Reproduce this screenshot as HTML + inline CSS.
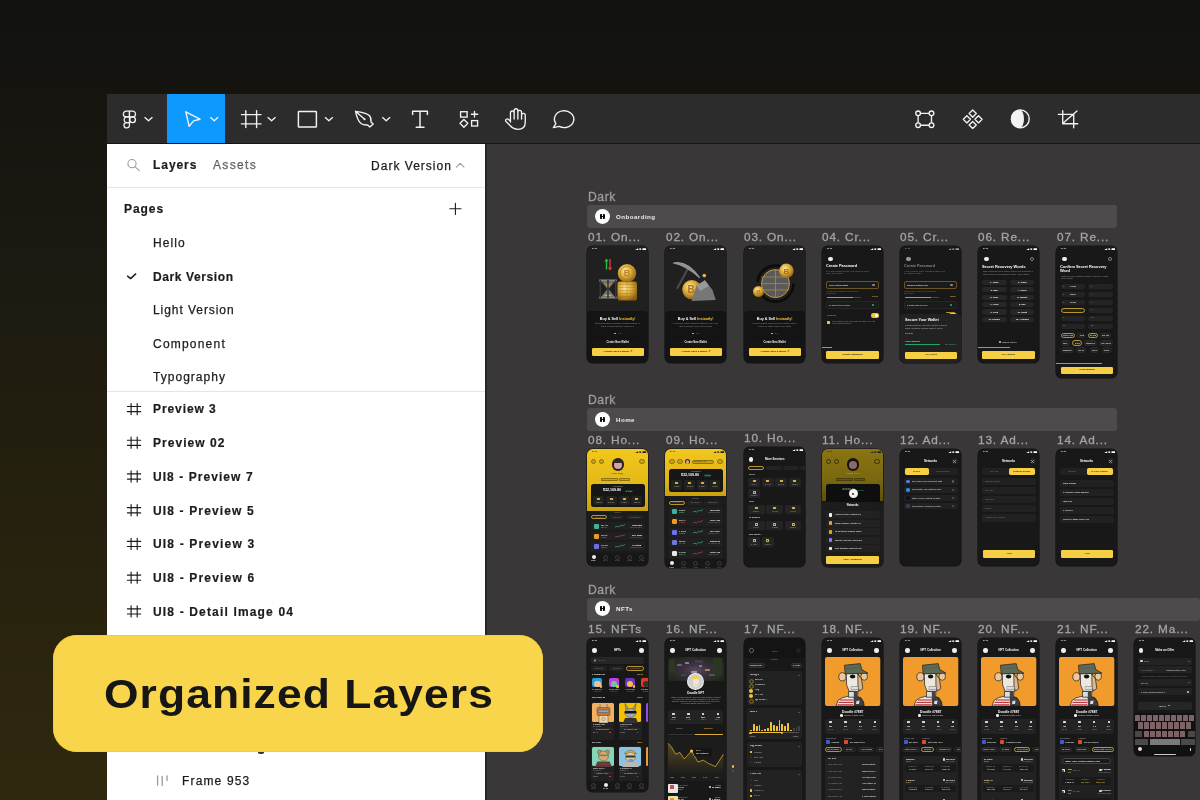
<!DOCTYPE html>
<html><head><meta charset="utf-8">
<style>
*{margin:0;padding:0;box-sizing:border-box}
html,body{width:1200px;height:800px;overflow:hidden}
body{position:relative;font-family:"Liberation Sans",sans-serif;background:linear-gradient(180deg,#121211 0px,#15140f 90px,#1b1911 250px,#221e0f 420px,#27220e 550px,#2c260f 700px,#2f2910 800px)}
.a{position:absolute}
.t{white-space:nowrap;will-change:transform}
.pt{will-change:transform;-webkit-text-stroke:.25px #1c1c1c;position:absolute;font-size:12px;color:#1c1c1c;letter-spacing:.55px;white-space:nowrap;line-height:14px}
.pb{font-weight:bold;letter-spacing:.45px;-webkit-text-stroke:.2px #1c1c1c}
.ph{position:absolute;overflow:hidden;border-radius:6px;background:#181818;box-shadow:0 0 0 .6px #121212;will-change:transform}
.ph .a{position:absolute}
svg{position:absolute;overflow:visible}
</style></head><body>
<div class="a" style="left:107px;top:94px;width:1093px;height:49px;background:#2c2c2c"></div>
<div class="a" style="left:167px;top:94px;width:58px;height:49px;background:#0e99ff"></div>
<div class="a" style="left:107px;top:144.3px;width:378px;height:657px;background:#fff"></div>
<div class="a" style="left:485px;top:144.3px;width:2px;height:657px;background:#262626"></div>
<div class="a" style="left:487px;top:144.3px;width:713px;height:657px;background:#3a3738"></div>
<div class="a" style="left:107px;top:143px;width:1093px;height:1.3px;background:#161616"></div>
<svg width="1200" height="800" style="left:0;top:0" viewBox="0 0 1200 800"><path d="M129.45 111.15 H126.25 A2.9 2.9 0 0 0 126.25 116.95 H129.45 Z" fill="none" stroke="#f2f2f2" stroke-width="1.25" stroke-linejoin="round" stroke-linecap="round" /><path d="M129.45 111.15 H132.65 A2.9 2.9 0 0 1 132.65 116.95 H129.45 Z" fill="none" stroke="#f2f2f2" stroke-width="1.25" stroke-linejoin="round" stroke-linecap="round" /><path d="M129.45 116.95 H126.25 A2.9 2.9 0 0 0 126.25 122.55 H129.45 Z" fill="none" stroke="#f2f2f2" stroke-width="1.25" stroke-linejoin="round" stroke-linecap="round" /><circle cx="132.55" cy="119.75" r="2.85" fill="none" stroke="#f2f2f2" stroke-width="1.4"/><path d="M129.45 122.55 H126.1 A2.75 2.75 0 1 0 129.45 125.3 Z" fill="none" stroke="#f2f2f2" stroke-width="1.25" stroke-linejoin="round" stroke-linecap="round" /><path d="M144.9 117.6 L148.5 120.8 L152.1 117.6" fill="none" stroke="#f2f2f2" stroke-width="1.35" stroke-linejoin="round" stroke-linecap="round" /><path d="M210.6 117.6 L214.2 120.8 L217.79999999999998 117.6" fill="none" stroke="#f2f2f2" stroke-width="1.35" stroke-linejoin="round" stroke-linecap="round" /><path d="M268.0 117.6 L271.6 120.8 L275.20000000000005 117.6" fill="none" stroke="#f2f2f2" stroke-width="1.35" stroke-linejoin="round" stroke-linecap="round" /><path d="M325.29999999999995 117.6 L328.9 120.8 L332.5 117.6" fill="none" stroke="#f2f2f2" stroke-width="1.35" stroke-linejoin="round" stroke-linecap="round" /><path d="M382.59999999999997 117.6 L386.2 120.8 L389.8 117.6" fill="none" stroke="#f2f2f2" stroke-width="1.35" stroke-linejoin="round" stroke-linecap="round" /><path d="M185.8 111.8 L200 119.2 L193.6 120.9 L189.1 126.2 Z" fill="none" stroke="#f2f2f2" stroke-width="1.4" stroke-linejoin="round" stroke-linecap="round" /><path d="M245.8 110.8 V127.6 M256.6 110.8 V127.6 M241.4 114.6 H261 M241.4 123.9 H261" fill="none" stroke="#f2f2f2" stroke-width="1.4" stroke-linejoin="round" stroke-linecap="round" stroke-linecap="butt"/><rect x="298.4" y="111.5" width="18" height="15.5" rx=".6" fill="none" stroke="#f2f2f2" stroke-width="1.45"/><path d="M355.5 111.3 C361 112 366.5 112.8 369.3 115.5 C371.2 117.5 371.2 120 371 122 L373.2 124 L369.8 127 L367.7 124.9 C365.5 125.2 363 124.8 361 123.5 C358.5 121.5 356.5 116 355.5 111.3 Z M355.7 111.5 L364.4 119.1" fill="none" stroke="#f2f2f2" stroke-width="1.35" stroke-linejoin="round" stroke-linecap="round" /><circle cx="364.6" cy="119.2" r="1.05" fill="#f2f2f2"/><path d="M412.6 114.6 V111.3 H427.4 V114.6 M420 111.3 V127.3 M416.2 127.3 H424" fill="none" stroke="#f2f2f2" stroke-width="1.45" stroke-linejoin="round" stroke-linecap="round" stroke-linecap="butt" stroke-linejoin="miter"/><rect x="460.6" y="111.7" width="6.5" height="5.4" fill="none" stroke="#f2f2f2" stroke-width="1.35"/><path d="M474.5 111.4 V117 M471.4 114.2 H477.7" fill="none" stroke="#f2f2f2" stroke-width="1.35" stroke-linejoin="round" stroke-linecap="round" stroke-linecap="butt"/><path d="M463.9 119.4 L467.8 123.3 L463.9 127.2 L460 123.3 Z" fill="none" stroke="#f2f2f2" stroke-width="1.35" stroke-linejoin="round" stroke-linecap="round" /><rect x="471.6" y="120.6" width="6" height="5.4" fill="none" stroke="#f2f2f2" stroke-width="1.35"/><path d="M510.45 122 V112.9 A1.85 1.85 0 0 1 514.15 112.9 V119 V110.6 A1.85 1.85 0 0 1 517.85 110.6 V119 V112.2 A1.85 1.85 0 0 1 521.55 112.2 V119 V115.2 A1.85 1.85 0 0 1 525.25 115.2 V122.5 C525.25 126.6 522.5 129.3 518 129.3 C514.5 129.3 512.3 128 510.3 125.8 L506 121.5 A1.6 1.6 0 0 1 508.3 119.3 L510.45 121.2" fill="none" stroke="#f2f2f2" stroke-width="1.35" stroke-linejoin="round" stroke-linecap="round" /><path d="M553.4 127.6 L555.9 123.6 A9.7 8.4 0 1 1 559.2 126.4 Z" fill="none" stroke="#f2f2f2" stroke-width="1.35" stroke-linejoin="round" stroke-linecap="round" /><path d="M918.1 113.3 H931.5 V125.2 H918.1 Z" fill="none" stroke="#f2f2f2" stroke-width="1.35" stroke-linejoin="round" stroke-linecap="round" /><circle cx="918.1" cy="113.3" r="2.35" fill="#2c2c2c" stroke="#f2f2f2" stroke-width="1.35"/><circle cx="931.5" cy="113.3" r="2.35" fill="#2c2c2c" stroke="#f2f2f2" stroke-width="1.35"/><circle cx="918.1" cy="125.2" r="2.35" fill="#2c2c2c" stroke="#f2f2f2" stroke-width="1.35"/><circle cx="931.5" cy="125.2" r="2.35" fill="#2c2c2c" stroke="#f2f2f2" stroke-width="1.35"/><path d="M972.7 110.0 L976.3000000000001 113.6 L972.7 117.19999999999999 L969.1 113.6 Z" fill="none" stroke="#f2f2f2" stroke-width="1.35" stroke-linejoin="round" stroke-linecap="round" /><path d="M972.7 121.4 L976.3000000000001 125 L972.7 128.6 L969.1 125 Z" fill="none" stroke="#f2f2f2" stroke-width="1.35" stroke-linejoin="round" stroke-linecap="round" /><path d="M966.9 115.7 L970.5 119.3 L966.9 122.89999999999999 L963.3 119.3 Z" fill="none" stroke="#f2f2f2" stroke-width="1.35" stroke-linejoin="round" stroke-linecap="round" /><path d="M978.5 115.7 L982.1 119.3 L978.5 122.89999999999999 L974.9 119.3 Z" fill="none" stroke="#f2f2f2" stroke-width="1.35" stroke-linejoin="round" stroke-linecap="round" /><circle cx="1020.3" cy="118.9" r="8.9" fill="none" stroke="#f2f2f2" stroke-width="1.4"/><path d="M1019.8 110 A8.9 8.9 0 0 0 1019.8 127.8 A4.2 8.9 0 0 0 1019.8 110 Z" fill="#f2f2f2"/><path d="M1062.7 110.7 V123.7 H1077.7 M1058.3 114.3 H1073.7 V127.7 M1063.8 122.6 L1077 111" fill="none" stroke="#f2f2f2" stroke-width="1.35" stroke-linejoin="round" stroke-linecap="round" stroke-linecap="butt"/><circle cx="132" cy="163.7" r="4.1" fill="none" stroke="#9a9a9a" stroke-width="1.05"/><path d="M135.1 166.8 L139.4 170.6" fill="none" stroke="#9a9a9a" stroke-width="1.05" stroke-linejoin="round" stroke-linecap="round" /><path d="M456.4 167.2 L460.2 163.4 L464 167.2" fill="none" stroke="#9a9a9a" stroke-width="1.05" stroke-linejoin="round" stroke-linecap="round" /><path d="M455.4 203.2 V214.4 M449.8 208.8 H461" fill="none" stroke="#1c1c1c" stroke-width="1.1" stroke-linejoin="round" stroke-linecap="round" stroke-linecap="butt"/><path d="M127.6 276.1 L130.6 278.6 L135.7 273.9" fill="none" stroke="#1c1c1c" stroke-width="1.45" stroke-linejoin="round" stroke-linecap="round" /><path d="M131.1 403.45 V414.65000000000003 M137.2 403.45 V414.65000000000003 M127.4 406.5 H140.7 M127.4 411.65000000000003 H140.7" fill="none" stroke="#1c1c1c" stroke-width="1.15" stroke-linejoin="round" stroke-linecap="round" stroke-linecap="butt"/><path d="M131.1 437.16999999999996 V448.37 M137.2 437.16999999999996 V448.37 M127.4 440.21999999999997 H140.7 M127.4 445.37 H140.7" fill="none" stroke="#1c1c1c" stroke-width="1.15" stroke-linejoin="round" stroke-linecap="round" stroke-linecap="butt"/><path d="M131.1 470.89 V482.09000000000003 M137.2 470.89 V482.09000000000003 M127.4 473.94 H140.7 M127.4 479.09000000000003 H140.7" fill="none" stroke="#1c1c1c" stroke-width="1.15" stroke-linejoin="round" stroke-linecap="round" stroke-linecap="butt"/><path d="M131.1 504.61 V515.8100000000001 M137.2 504.61 V515.8100000000001 M127.4 507.66 H140.7 M127.4 512.8100000000001 H140.7" fill="none" stroke="#1c1c1c" stroke-width="1.15" stroke-linejoin="round" stroke-linecap="round" stroke-linecap="butt"/><path d="M131.1 538.33 V549.5300000000001 M137.2 538.33 V549.5300000000001 M127.4 541.3800000000001 H140.7 M127.4 546.5300000000001 H140.7" fill="none" stroke="#1c1c1c" stroke-width="1.15" stroke-linejoin="round" stroke-linecap="round" stroke-linecap="butt"/><path d="M131.1 572.05 V583.25 M137.2 572.05 V583.25 M127.4 575.1 H140.7 M127.4 580.25 H140.7" fill="none" stroke="#1c1c1c" stroke-width="1.15" stroke-linejoin="round" stroke-linecap="round" stroke-linecap="butt"/><path d="M131.1 605.77 V616.97 M137.2 605.77 V616.97 M127.4 608.82 H140.7 M127.4 613.97 H140.7" fill="none" stroke="#1c1c1c" stroke-width="1.15" stroke-linejoin="round" stroke-linecap="round" stroke-linecap="butt"/><path d="M157.6 776 V785 M162.2 776.5 V785.5 M167 775.8 V780.5" fill="none" stroke="#9a9a9a" stroke-width="1.3" stroke-linejoin="round" stroke-linecap="round" stroke-linecap="butt"/></svg>
<div class="pt pb" style="left:152.7px;top:158px;letter-spacing:0.94px;color:#1c1c1c">Layers</div>
<div class="pt" style="left:213.4px;top:158px;letter-spacing:1.35px;color:#8a8a8a">Assets</div>
<div class="pt" style="left:371.45px;top:159px;letter-spacing:1.02px;color:#1c1c1c">Dark Version</div>
<div class="pt pb" style="left:124.2px;top:202px;letter-spacing:0.95px;color:#1c1c1c">Pages</div>
<div class="pt" style="left:153.05px;top:236px;letter-spacing:1.08px;color:#1c1c1c">Hello</div>
<div class="pt pb" style="left:153.05px;top:270px;letter-spacing:0.6px;color:#1c1c1c">Dark Version</div>
<div class="pt" style="left:153.05px;top:303px;letter-spacing:0.94px;color:#1c1c1c">Light Version</div>
<div class="pt" style="left:152.95px;top:337px;letter-spacing:1.21px;color:#1c1c1c">Component</div>
<div class="pt" style="left:153.2px;top:370px;letter-spacing:1.03px;color:#1c1c1c">Typography</div>
<div class="pt pb" style="left:153px;top:402px;letter-spacing:0.92px;color:#1c1c1c">Preview 3</div>
<div class="pt pb" style="left:153px;top:436px;letter-spacing:1.05px;color:#1c1c1c">Preview 02</div>
<div class="pt pb" style="left:153px;top:470px;letter-spacing:1.06px;color:#1c1c1c">UI8 - Preview 7</div>
<div class="pt pb" style="left:152.6px;top:504px;letter-spacing:1.14px;color:#1c1c1c">UI8 - Preview 5</div>
<div class="pt pb" style="left:152.6px;top:537px;letter-spacing:1.17px;color:#1c1c1c">UI8 - Preview 3</div>
<div class="pt pb" style="left:152.6px;top:571px;letter-spacing:1.17px;color:#1c1c1c">UI8 - Preview 6</div>
<div class="pt pb" style="left:152.6px;top:605px;letter-spacing:1.16px;color:#1c1c1c">UI8 - Detail Image 04</div>
<div class="pt" style="left:182px;top:774px;letter-spacing:1.15px;color:#1c1c1c">Frame 953</div>
<div class="a" style="left:107px;top:187px;width:378px;height:1px;background:#e5e5e5"></div>
<div class="a" style="left:107px;top:391px;width:378px;height:1px;background:#e5e5e5"></div>
<div class="a t" style="left:587.5px;top:191.27px;font-size:12.2px;color:#9c9c9c;line-height:1;letter-spacing:.55px;-webkit-text-stroke:.3px #9c9c9c">Dark</div>
<div class="a" style="left:587.3px;top:205.1px;width:530px;height:23.2px;background:#4e4b4c;border-radius:3px"></div>
<div class="a" style="left:595px;top:209px;width:14.8px;height:14.8px;background:#fff;border-radius:50%"></div>
<div class="a" style="left:599.8px;top:213.8px;width:5.2px;height:5.2px;background:#0e0e0e;border-radius:0.8px"></div>
<div class="a" style="left:602px;top:213.8px;width:0.8px;height:2px;background:#fff"></div>
<div class="a" style="left:602px;top:217px;width:0.8px;height:2px;background:#fff"></div>
<div class="a t" style="left:616.3px;top:213.75px;font-size:6.2px;color:#ececec;line-height:1;font-weight:700;letter-spacing:.45px">Onboarding</div>
<div class="a t" style="left:587.5px;top:394.17px;font-size:12.2px;color:#9c9c9c;line-height:1;letter-spacing:.55px;-webkit-text-stroke:.3px #9c9c9c">Dark</div>
<div class="a" style="left:587.3px;top:408px;width:530px;height:23.2px;background:#4e4b4c;border-radius:3px"></div>
<div class="a" style="left:595px;top:411.9px;width:14.8px;height:14.8px;background:#fff;border-radius:50%"></div>
<div class="a" style="left:599.8px;top:416.7px;width:5.2px;height:5.2px;background:#0e0e0e;border-radius:0.8px"></div>
<div class="a" style="left:602px;top:416.7px;width:0.8px;height:2px;background:#fff"></div>
<div class="a" style="left:602px;top:419.9px;width:0.8px;height:2px;background:#fff"></div>
<div class="a t" style="left:616.3px;top:416.65px;font-size:6.2px;color:#ececec;line-height:1;font-weight:700;letter-spacing:.45px">Home</div>
<div class="a t" style="left:587.5px;top:583.67px;font-size:12.2px;color:#9c9c9c;line-height:1;letter-spacing:.55px;-webkit-text-stroke:.3px #9c9c9c">Dark</div>
<div class="a" style="left:587.3px;top:597.5px;width:613px;height:23.2px;background:#4e4b4c;border-radius:3px"></div>
<div class="a" style="left:595px;top:601.4px;width:14.8px;height:14.8px;background:#fff;border-radius:50%"></div>
<div class="a" style="left:599.8px;top:606.2px;width:5.2px;height:5.2px;background:#0e0e0e;border-radius:0.8px"></div>
<div class="a" style="left:602px;top:606.2px;width:0.8px;height:2px;background:#fff"></div>
<div class="a" style="left:602px;top:609.4px;width:0.8px;height:2px;background:#fff"></div>
<div class="a t" style="left:616.3px;top:606.15px;font-size:6.2px;color:#ececec;line-height:1;font-weight:700;letter-spacing:.45px">NFTs</div>
<div class="a t" style="left:587.65px;top:231.91px;font-size:11.8px;color:#a4a4a4;line-height:1;letter-spacing:.85px;-webkit-text-stroke:.3px #a4a4a4">01. On...</div>
<div class="a t" style="left:665.8px;top:231.91px;font-size:11.8px;color:#a4a4a4;line-height:1;letter-spacing:.85px;-webkit-text-stroke:.3px #a4a4a4">02. On...</div>
<div class="a t" style="left:743.95px;top:231.91px;font-size:11.8px;color:#a4a4a4;line-height:1;letter-spacing:.85px;-webkit-text-stroke:.3px #a4a4a4">03. On...</div>
<div class="a t" style="left:822.1px;top:231.91px;font-size:11.8px;color:#a4a4a4;line-height:1;letter-spacing:.85px;-webkit-text-stroke:.3px #a4a4a4">04. Cr...</div>
<div class="a t" style="left:900.25px;top:231.91px;font-size:11.8px;color:#a4a4a4;line-height:1;letter-spacing:.85px;-webkit-text-stroke:.3px #a4a4a4">05. Cr...</div>
<div class="a t" style="left:978.4px;top:231.91px;font-size:11.8px;color:#a4a4a4;line-height:1;letter-spacing:.85px;-webkit-text-stroke:.3px #a4a4a4">06. Re...</div>
<div class="a t" style="left:1056.55px;top:231.91px;font-size:11.8px;color:#a4a4a4;line-height:1;letter-spacing:.85px;-webkit-text-stroke:.3px #a4a4a4">07. Re...</div>
<div class="ph" style="left:587.3px;top:246.2px;width:61.4px;height:117.2px;background:#202020">
<div class="a t" style="left:4.9px;top:1.9px;font-size:2.5px;color:#fff;line-height:1;font-weight:700">9:41</div>
<svg width="12" height="3" style="left:47.6px;top:1.6px" viewBox="0 0 12 3"><path d="M0.2 2.1 L3.2 0.3 L3.2 2.1 Z" fill="#fff"/><rect x="4.3" y="0.3" width="1.9" height="1.8" rx=".4" fill="#fff" opacity=".85"/><rect x="7.4" y="0.2" width="3.7" height="1.9" rx=".7" fill="#fff"/></svg>
<svg width="61.4" height="70" viewBox="0 0 61.4 70"><defs><radialGradient id="g1" cx="40%" cy="35%" r="70%"><stop offset="0" stop-color="#ffe8a0"/><stop offset=".45" stop-color="#e0ad3a"/><stop offset="1" stop-color="#8a5e12"/></radialGradient></defs><g><rect x="30.5" y="35.5" width="19.5" height="19" rx="2" fill="url(#g1)"/><g stroke="#9b7220" stroke-width=".45" opacity=".8"><line x1="30.5" y1="38.5" x2="50" y2="38.5"/><line x1="30.5" y1="41.5" x2="50" y2="41.5"/><line x1="30.5" y1="44.5" x2="50" y2="44.5"/><line x1="30.5" y1="47.5" x2="50" y2="47.5"/><line x1="30.5" y1="50.5" x2="50" y2="50.5"/><line x1="40" y1="35.5" x2="40" y2="54.5"/></g><circle cx="40" cy="27.3" r="9.2" fill="url(#g1)"/><circle cx="40" cy="27.3" r="6.8" fill="none" stroke="#a87a1e" stroke-width=".6"/><text x="40" y="30.5" font-size="9" font-weight="bold" fill="#b8862a" text-anchor="middle" font-family="Liberation Sans">B</text><path d="M14.5 35.6 L27.5 35.6 L21.6 43 L27.5 50.4 L14.5 50.4 L20.4 43 Z" fill="#b0b0b0" opacity=".6"/><path d="M16 50.3 Q21 46 26 50.3 Z" fill="#d8a53a"/><path d="M18 38 L24 38 L21 41.5 Z" fill="#c9963a" opacity=".9"/><rect x="12" y="33.6" width="18" height="2" rx=".6" fill="#8a8a8a"/><rect x="12" y="50.4" width="18" height="2" rx=".6" fill="#8a8a8a"/><rect x="12.6" y="34" width="1.4" height="18" fill="#3a3a3a"/><rect x="28" y="34" width="1.4" height="18" fill="#3a3a3a"/><rect x="20.4" y="34" width="1.2" height="18" fill="#1a1a1a"/><path d="M18.8 23.5 L18.8 15.5 L17.3 15.5 L19.5 12.5 L21.7 15.5 L20.2 15.5 L20.2 23.5 Z" fill="#27c14a"/><path d="M22.3 13 L22.3 21.5 L20.8 21.5 L23 24.8 L25.2 21.5 L23.7 21.5 L23.7 13 Z" fill="#e23a2a"/></g></svg>
<div class="a" style="left:0px;top:65.4px;width:61.4px;height:60px;background:#141414;border-radius:4px 4px 0 0"></div>
<div class="a t" style="left:0px;top:71.6px;font-size:3.7px;color:#fff;line-height:1;font-weight:700;width:61.4px;text-align:center">Buy &amp; Sell <span style="color:#f3c53a">Instantly!</span></div>
<div class="a t" style="left:8px;top:76.24px;width:45px;overflow:hidden;font-size:2.32px;line-height:1;color:#9a9a9a;font-weight:700;opacity:0.69">Ethereum Main Network Solana Wallet Addr</div>
<div class="a t" style="left:14px;top:78.64px;width:33px;overflow:hidden;font-size:2.32px;line-height:1;color:#9a9a9a;font-weight:700;opacity:0.69">work Solana Wallet Address Cop</div>
<div class="a" style="left:27px;top:86.5px;width:1.8px;height:1px;background:#f0c23a;border-radius:0.5px"></div>
<div class="a" style="left:30.5px;top:86.5px;width:1px;height:1px;background:#555;border-radius:50%"></div>
<div class="a" style="left:32.5px;top:86.5px;width:1px;height:1px;background:#555;border-radius:50%"></div>
<div class="a" style="left:6px;top:94.5px;width:49px;height:5.5px;background:#161616;border-radius:1px"></div>
<div class="a t" style="left:0px;top:95.9px;font-size:2.6px;color:#eee;line-height:1;font-weight:700;width:61.4px;text-align:center">Create New Wallet</div>
<div class="a" style="left:4.6px;top:101.8px;width:52px;height:8.7px;background:#f6cf45;border-radius:1.3px"></div>
<div class="a t" style="left:4.6px;top:104.9px;font-size:2.5px;color:#222;line-height:1;font-weight:700;width:52px;text-align:center">Already Have a Wallet &#8599;</div>
</div>
<div class="ph" style="left:665.45px;top:246.2px;width:61.4px;height:117.2px;background:#202020">
<div class="a t" style="left:4.9px;top:1.9px;font-size:2.5px;color:#fff;line-height:1;font-weight:700">9:41</div>
<svg width="12" height="3" style="left:47.6px;top:1.6px" viewBox="0 0 12 3"><path d="M0.2 2.1 L3.2 0.3 L3.2 2.1 Z" fill="#fff"/><rect x="4.3" y="0.3" width="1.9" height="1.8" rx=".4" fill="#fff" opacity=".85"/><rect x="7.4" y="0.2" width="3.7" height="1.9" rx=".7" fill="#fff"/></svg>
<svg width="61.4" height="70" viewBox="0 0 61.4 70"><defs><radialGradient id="g2" cx="40%" cy="35%" r="70%"><stop offset="0" stop-color="#ffe8a0"/><stop offset=".45" stop-color="#e0ad3a"/><stop offset="1" stop-color="#8a5e12"/></radialGradient></defs><path d="M12.4 42 L23.5 21.5" stroke="#4a4a4a" stroke-width="2.2" stroke-linecap="round"/><path d="M8.5 17 Q22 14 34.5 31.5 Q21 19.5 8.5 17 Z" fill="#8e8e8e" stroke="#9a9a9a" stroke-width="1.2" stroke-linejoin="round"/><circle cx="26.8" cy="43.6" r="9.6" fill="url(#g2)"/><text x="26" y="47.5" font-size="10" font-weight="bold" fill="#a8741e" text-anchor="middle" font-family="Liberation Sans">B</text><path d="M26.5 55 L31.5 39.5 L40 34.3 L47.5 44 L50.8 54 Z" fill="#777"/><path d="M31.5 39.5 L40 34.3 L44 40 L35 45 Z" fill="#999"/><circle cx="39.3" cy="29.6" r="1.8" fill="#e6b746"/></svg>
<div class="a" style="left:0px;top:65.4px;width:61.4px;height:60px;background:#141414;border-radius:4px 4px 0 0"></div>
<div class="a t" style="left:0px;top:71.6px;font-size:3.7px;color:#fff;line-height:1;font-weight:700;width:61.4px;text-align:center">Buy &amp; Sell <span style="color:#f3c53a">Instantly!</span></div>
<div class="a t" style="left:8px;top:76.24px;width:45px;overflow:hidden;font-size:2.32px;line-height:1;color:#9a9a9a;font-weight:700;opacity:0.69">t Address Copy Balance Market Price Toke</div>
<div class="a t" style="left:14px;top:78.64px;width:33px;overflow:hidden;font-size:2.32px;line-height:1;color:#9a9a9a;font-weight:700;opacity:0.69">lance Market Price Token Swap </div>
<div class="a" style="left:27px;top:86.5px;width:1.8px;height:1px;background:#f0c23a;border-radius:0.5px"></div>
<div class="a" style="left:30.5px;top:86.5px;width:1px;height:1px;background:#555;border-radius:50%"></div>
<div class="a" style="left:32.5px;top:86.5px;width:1px;height:1px;background:#555;border-radius:50%"></div>
<div class="a" style="left:6px;top:94.5px;width:49px;height:5.5px;background:#161616;border-radius:1px"></div>
<div class="a t" style="left:0px;top:95.9px;font-size:2.6px;color:#eee;line-height:1;font-weight:700;width:61.4px;text-align:center">Create New Wallet</div>
<div class="a" style="left:4.6px;top:101.8px;width:52px;height:8.7px;background:#f6cf45;border-radius:1.3px"></div>
<div class="a t" style="left:4.6px;top:104.9px;font-size:2.5px;color:#222;line-height:1;font-weight:700;width:52px;text-align:center">Already Have a Wallet &#8599;</div>
</div>
<div class="ph" style="left:743.6px;top:246.2px;width:61.4px;height:117.2px;background:#202020">
<div class="a t" style="left:4.9px;top:1.9px;font-size:2.5px;color:#fff;line-height:1;font-weight:700">9:41</div>
<svg width="12" height="3" style="left:47.6px;top:1.6px" viewBox="0 0 12 3"><path d="M0.2 2.1 L3.2 0.3 L3.2 2.1 Z" fill="#fff"/><rect x="4.3" y="0.3" width="1.9" height="1.8" rx=".4" fill="#fff" opacity=".85"/><rect x="7.4" y="0.2" width="3.7" height="1.9" rx=".7" fill="#fff"/></svg>
<svg width="61.4" height="70" viewBox="0 0 61.4 70"><defs><radialGradient id="g3" cx="40%" cy="35%" r="70%"><stop offset="0" stop-color="#ffe8a0"/><stop offset=".45" stop-color="#e0ad3a"/><stop offset="1" stop-color="#8a5e12"/></radialGradient></defs><circle cx="31.5" cy="37.6" r="18" fill="none" stroke="#0c0c0c" stroke-width="2.6" stroke-dasharray="50 8 40 15"/><circle cx="31.5" cy="37.6" r="14" fill="#5a5a5a"/><circle cx="31.5" cy="37.6" r="14" fill="none" stroke="#c39a3a" stroke-width="1"/><g stroke="#b8903a" stroke-width=".7"><line x1="17.5" y1="31" x2="45.5" y2="31"/><line x1="17.5" y1="37.6" x2="45.5" y2="37.6"/><line x1="18.5" y1="44" x2="44.5" y2="44"/><line x1="31.5" y1="23.6" x2="31.5" y2="51.6"/></g><circle cx="42.4" cy="24.8" r="7.3" fill="url(#g3)"/><text x="42.4" y="27.8" font-size="8" font-weight="bold" fill="#a8741e" text-anchor="middle" font-family="Liberation Sans">B</text><circle cx="14.5" cy="45.5" r="5.5" fill="url(#g3)"/><text x="14.5" y="47.8" font-size="6" font-weight="bold" fill="#a8741e" text-anchor="middle" font-family="Liberation Sans">B</text></svg>
<div class="a" style="left:0px;top:65.4px;width:61.4px;height:60px;background:#141414;border-radius:4px 4px 0 0"></div>
<div class="a t" style="left:0px;top:71.6px;font-size:3.7px;color:#fff;line-height:1;font-weight:700;width:61.4px;text-align:center">Buy &amp; Sell <span style="color:#f3c53a">Instantly!</span></div>
<div class="a t" style="left:8px;top:76.24px;width:45px;overflow:hidden;font-size:2.32px;line-height:1;color:#9a9a9a;font-weight:700;opacity:0.69">e Token Swap Send Receive Stake Earn Hel</div>
<div class="a t" style="left:14px;top:78.64px;width:33px;overflow:hidden;font-size:2.32px;line-height:1;color:#9a9a9a;font-weight:700;opacity:0.69"> Receive Stake Earn Help Suppo</div>
<div class="a" style="left:27px;top:86.5px;width:1.8px;height:1px;background:#f0c23a;border-radius:0.5px"></div>
<div class="a" style="left:30.5px;top:86.5px;width:1px;height:1px;background:#555;border-radius:50%"></div>
<div class="a" style="left:32.5px;top:86.5px;width:1px;height:1px;background:#555;border-radius:50%"></div>
<div class="a" style="left:6px;top:94.5px;width:49px;height:5.5px;background:#161616;border-radius:1px"></div>
<div class="a t" style="left:0px;top:95.9px;font-size:2.6px;color:#eee;line-height:1;font-weight:700;width:61.4px;text-align:center">Create New Wallet</div>
<div class="a" style="left:4.6px;top:101.8px;width:52px;height:8.7px;background:#f6cf45;border-radius:1.3px"></div>
<div class="a t" style="left:4.6px;top:104.9px;font-size:2.5px;color:#222;line-height:1;font-weight:700;width:52px;text-align:center">Already Have a Wallet &#8599;</div>
</div>
<div class="ph" style="left:821.75px;top:246.2px;width:61.4px;height:117.2px;background:#181818">
<div class="a t" style="left:4.9px;top:1.9px;font-size:2.5px;color:#fff;line-height:1;font-weight:700">9:41</div>
<svg width="12" height="3" style="left:47.6px;top:1.6px" viewBox="0 0 12 3"><path d="M0.2 2.1 L3.2 0.3 L3.2 2.1 Z" fill="#fff"/><rect x="4.3" y="0.3" width="1.9" height="1.8" rx=".4" fill="#fff" opacity=".85"/><rect x="7.4" y="0.2" width="3.7" height="1.9" rx=".7" fill="#fff"/></svg>
<div class="a" style="left:6.4px;top:10.7px;width:4.2px;height:4.2px;background:#eee;border-radius:50%"></div>
<div class="a t" style="left:4.3px;top:18.6px;font-size:3.85px;color:#fff;line-height:1;font-weight:700">Create Password</div>
<div class="a t" style="left:4.2px;top:24.04px;width:43px;overflow:hidden;font-size:2.32px;line-height:1;color:#777;font-weight:700;opacity:0.8">rn Help Support Total Avg History Offer</div>
<div class="a t" style="left:4.2px;top:26.44px;width:18px;overflow:hidden;font-size:2.32px;line-height:1;color:#777;font-weight:700;opacity:0.8">otal Avg History </div>
<div class="a" style="left:4px;top:34.5px;width:52.8px;height:8.6px;background:#1b1b1b;border-radius:2px;border:.45px solid #6a5520"></div>
<div class="a t" style="left:7px;top:37.56px;width:21px;overflow:hidden;font-size:2.03px;line-height:1;color:#ddd;font-weight:700;opacity:1">Offer Listing Details </div>
<div class="a" style="left:50.3px;top:37.6px;width:2.4px;height:2.4px;background:#888;border-radius:50%"></div>
<div class="a t" style="left:4.4px;top:44.36px;width:32px;overflow:hidden;font-size:2.03px;line-height:1;color:#777;font-weight:700;opacity:0.69">ereum Main Network Solana Wallet </div>
<div class="a t" style="left:4.4px;top:46.06px;width:10px;overflow:hidden;font-size:2.03px;line-height:1;color:#777;font-weight:700;opacity:0.69">k Solana Wa</div>
<div class="a" style="left:4.5px;top:50.5px;width:26.5px;height:0.6px;background:#b89a3a"></div>
<div class="a" style="left:31px;top:50.5px;width:8px;height:0.6px;background:#444"></div>
<div class="a t" style="left:50px;top:49.24px;width:5.5px;overflow:hidden;font-size:2.32px;line-height:1;color:#b89a3a;font-weight:700;opacity:1">ddress</div>
<div class="a" style="left:4px;top:55px;width:52.8px;height:8px;background:#1b1b1b;border-radius:2px;border:.4px solid #262626"></div>
<div class="a t" style="left:7px;top:57.96px;width:21px;overflow:hidden;font-size:2.03px;line-height:1;color:#ccc;font-weight:700;opacity:0.92">ce Market Price Token </div>
<div class="a" style="left:50.2px;top:57.9px;width:2.2px;height:2.2px;background:#1fbf6a;border-radius:50%"></div>
<div class="a t" style="left:4.5px;top:67.84px;width:9px;overflow:hidden;font-size:2.32px;line-height:1;color:#aaa;font-weight:700;opacity:0.8">oken Swap</div>
<div class="a" style="left:48.5px;top:67.3px;width:8.5px;height:4.3px;background:#f0c33a;border-radius:2.2px"></div>
<div class="a" style="left:53.1px;top:67.85px;width:3.2px;height:3.2px;background:#fff;border-radius:50%"></div>
<div class="a" style="left:5.2px;top:74.8px;width:2.8px;height:2.8px;background:#f0c33a;border-radius:0.5px"></div>
<div class="a t" style="left:9.5px;top:74.46px;width:43px;overflow:hidden;font-size:2.03px;line-height:1;color:#888;font-weight:700;opacity:0.8">ceive Stake Earn Help Support Total Avg Hist</div>
<div class="a t" style="left:9.5px;top:76.36px;width:20px;overflow:hidden;font-size:2.03px;line-height:1;color:#888;font-weight:700;opacity:0.8">Help Support Total Av</div>
<div class="a" style="left:0px;top:101.2px;width:9.5px;height:0.7px;background:#b8962e"></div>
<div class="a" style="left:4px;top:105px;width:52.8px;height:7.6px;background:#f6cf45;border-radius:1.3px"></div>
<div class="a t" style="left:4px;top:107.55px;font-size:2.5px;color:#222;line-height:1;font-weight:700;width:52.8px;text-align:center">Create Password</div>
</div>
<div class="ph" style="left:899.9px;top:246.2px;width:61.4px;height:117.2px;background:#181818">
<div class="a t" style="left:4.9px;top:1.9px;font-size:2.5px;color:#999;line-height:1;font-weight:700">9:41</div>
<svg width="12" height="3" style="left:47.6px;top:1.6px" viewBox="0 0 12 3"><path d="M0.2 2.1 L3.2 0.3 L3.2 2.1 Z" fill="#999"/><rect x="4.3" y="0.3" width="1.9" height="1.8" rx=".4" fill="#999" opacity=".85"/><rect x="7.4" y="0.2" width="3.7" height="1.9" rx=".7" fill="#999"/></svg>
<div class="a" style="left:6.4px;top:10.7px;width:4.2px;height:4.2px;background:#999;border-radius:50%"></div>
<div class="a t" style="left:4.3px;top:18.6px;font-size:3.85px;color:#888;line-height:1;font-weight:700">Create Password</div>
<div class="a t" style="left:4.2px;top:24.04px;width:43px;overflow:hidden;font-size:2.32px;line-height:1;color:#777;font-weight:700;opacity:0.8">l Avg History Offer Listing Details Act</div>
<div class="a t" style="left:4.2px;top:26.44px;width:18px;overflow:hidden;font-size:2.32px;line-height:1;color:#777;font-weight:700;opacity:0.8">er Listing Detail</div>
<div class="a" style="left:4px;top:34.5px;width:52.8px;height:8.6px;background:#1b1b1b;border-radius:2px;border:.45px solid #6a5520"></div>
<div class="a t" style="left:7px;top:37.56px;width:21px;overflow:hidden;font-size:2.03px;line-height:1;color:#ddd;font-weight:700;opacity:1">um Main Network Solana</div>
<div class="a" style="left:50.3px;top:37.6px;width:2.4px;height:2.4px;background:#888;border-radius:50%"></div>
<div class="a t" style="left:4.4px;top:44.36px;width:32px;overflow:hidden;font-size:2.03px;line-height:1;color:#777;font-weight:700;opacity:0.69">olana Wallet Address Copy Balance</div>
<div class="a t" style="left:4.4px;top:46.06px;width:10px;overflow:hidden;font-size:2.03px;line-height:1;color:#777;font-weight:700;opacity:0.69">ess Copy Ba</div>
<div class="a" style="left:4.5px;top:50.5px;width:26.5px;height:0.6px;background:#b89a3a"></div>
<div class="a" style="left:31px;top:50.5px;width:8px;height:0.6px;background:#444"></div>
<div class="a t" style="left:50px;top:49.24px;width:5.5px;overflow:hidden;font-size:2.32px;line-height:1;color:#b89a3a;font-weight:700;opacity:1">Market</div>
<div class="a" style="left:4px;top:55px;width:52.8px;height:8px;background:#1b1b1b;border-radius:2px;border:.4px solid #262626"></div>
<div class="a t" style="left:7px;top:57.96px;width:21px;overflow:hidden;font-size:2.03px;line-height:1;color:#ccc;font-weight:700;opacity:0.92">n Swap Send Receive St</div>
<div class="a" style="left:50.2px;top:57.9px;width:2.2px;height:2.2px;background:#1fbf6a;border-radius:50%"></div>
<div class="a t" style="left:4.5px;top:67.84px;width:9px;overflow:hidden;font-size:2.32px;line-height:1;color:#aaa;font-weight:700;opacity:0.8">ve Stake </div>
<div class="a" style="left:48.5px;top:67.3px;width:8.5px;height:4.3px;background:#f0c33a;border-radius:2.2px"></div>
<div class="a" style="left:53.1px;top:67.85px;width:3.2px;height:3.2px;background:#fff;border-radius:50%"></div>
<div class="a" style="left:5.2px;top:74.8px;width:2.8px;height:2.8px;background:#f0c33a;border-radius:0.5px"></div>
<div class="a t" style="left:9.5px;top:74.46px;width:43px;overflow:hidden;font-size:2.03px;line-height:1;color:#888;font-weight:700;opacity:0.8">p Support Total Avg History Offer Listing De</div>
<div class="a t" style="left:9.5px;top:76.36px;width:20px;overflow:hidden;font-size:2.03px;line-height:1;color:#888;font-weight:700;opacity:0.8">vg History Offer List</div>
<div class="a" style="left:46px;top:66.2px;width:9px;height:0.8px;background:#b8962e;border-radius:0.4px"></div>
<div class="a" style="left:0px;top:67.6px;width:61.4px;height:50px;background:#222;border-radius:4px 4px 0 0"></div>
<div class="a t" style="left:4.9px;top:72.6px;font-size:3.75px;color:#fff;line-height:1;font-weight:700">Secure Your Wallet</div>
<div class="a t" style="left:4.5px;top:77.94px;width:45px;overflow:hidden;font-size:2.32px;line-height:1;color:#aaa;font-weight:700;opacity:0.8">Listing Details Activity Creator Collect</div>
<div class="a t" style="left:4.5px;top:80.74px;width:38px;overflow:hidden;font-size:2.32px;line-height:1;color:#aaa;font-weight:700;opacity:0.8">Main Network Solana Wallet Address</div>
<div class="a t" style="left:4.5px;top:85.54px;width:8px;overflow:hidden;font-size:2.32px;line-height:1;color:#d7ae35;font-weight:700;opacity:1">na Walle</div>
<div class="a t" style="left:4.5px;top:93.64px;width:15px;overflow:hidden;font-size:2.32px;line-height:1;color:#ccc;font-weight:700;opacity:0.92"> Copy Balance </div>
<div class="a" style="left:4.5px;top:98.3px;width:35px;height:0.8px;background:#1fa862"></div>
<div class="a t" style="left:45px;top:97.24px;width:11.5px;overflow:hidden;font-size:2.32px;line-height:1;color:#1fa862;font-weight:700;opacity:1">ket Price T</div>
<div class="a" style="left:4.5px;top:105.7px;width:52.3px;height:7.6px;background:#f6cf45;border-radius:1.3px"></div>
<div class="a t" style="left:4.5px;top:108.25px;font-size:2.5px;color:#222;line-height:1;font-weight:700;width:52.3px;text-align:center">Ok, Got it</div>
</div>
<div class="ph" style="left:978.05px;top:246.2px;width:61.4px;height:117.2px;background:#181818">
<div class="a t" style="left:4.9px;top:1.9px;font-size:2.5px;color:#fff;line-height:1;font-weight:700">9:41</div>
<svg width="12" height="3" style="left:47.6px;top:1.6px" viewBox="0 0 12 3"><path d="M0.2 2.1 L3.2 0.3 L3.2 2.1 Z" fill="#fff"/><rect x="4.3" y="0.3" width="1.9" height="1.8" rx=".4" fill="#fff" opacity=".85"/><rect x="7.4" y="0.2" width="3.7" height="1.9" rx=".7" fill="#fff"/></svg>
<div class="a" style="left:6.4px;top:10.7px;width:4.2px;height:4.2px;background:#eee;border-radius:50%"></div>
<div class="a" style="left:52.1px;top:10.9px;width:3.8px;height:3.8px;background:none;border-radius:50%;border:.4px solid #888"></div>
<div class="a t" style="left:4.4px;top:18.6px;font-size:3.9px;color:#fff;line-height:1;font-weight:700">Secret Recovery Words</div>
<div class="a t" style="left:4.5px;top:23.84px;width:50px;overflow:hidden;font-size:2.32px;line-height:1;color:#888;font-weight:700;opacity:0.8">wap Send Receive Stake Earn Help Support Tota</div>
<div class="a t" style="left:4.5px;top:26.64px;width:46px;overflow:hidden;font-size:2.32px;line-height:1;color:#888;font-weight:700;opacity:0.8">Stake Earn Help Support Total Avg History</div>
<div class="a" style="left:4.4px;top:33.7px;width:24.6px;height:5.3px;background:#262626;border-radius:2.65px"></div>
<div class="a t" style="left:4.4px;top:35.2px;font-size:2.3px;color:#fff;line-height:1;font-weight:700;width:24.6px;text-align:center">1. Noun</div>
<div class="a" style="left:31.5px;top:33.7px;width:24.6px;height:5.3px;background:#262626;border-radius:2.65px"></div>
<div class="a t" style="left:31.5px;top:35.2px;font-size:2.3px;color:#fff;line-height:1;font-weight:700;width:24.6px;text-align:center">2. Jewel</div>
<div class="a" style="left:4.4px;top:41.13px;width:24.6px;height:5.3px;background:#262626;border-radius:2.65px"></div>
<div class="a t" style="left:4.4px;top:42.63px;font-size:2.3px;color:#fff;line-height:1;font-weight:700;width:24.6px;text-align:center">3. Bad</div>
<div class="a" style="left:31.5px;top:41.13px;width:24.6px;height:5.3px;background:#262626;border-radius:2.65px"></div>
<div class="a t" style="left:31.5px;top:42.63px;font-size:2.3px;color:#fff;line-height:1;font-weight:700;width:24.6px;text-align:center">4. Chilly</div>
<div class="a" style="left:4.4px;top:48.56px;width:24.6px;height:5.3px;background:#262626;border-radius:2.65px"></div>
<div class="a t" style="left:4.4px;top:50.06px;font-size:2.3px;color:#fff;line-height:1;font-weight:700;width:24.6px;text-align:center">5. Soar</div>
<div class="a" style="left:31.5px;top:48.56px;width:24.6px;height:5.3px;background:#262626;border-radius:2.65px"></div>
<div class="a t" style="left:31.5px;top:50.06px;font-size:2.3px;color:#fff;line-height:1;font-weight:700;width:24.6px;text-align:center">6. Market</div>
<div class="a" style="left:4.4px;top:55.99px;width:24.6px;height:5.3px;background:#262626;border-radius:2.65px"></div>
<div class="a t" style="left:4.4px;top:57.49px;font-size:2.3px;color:#fff;line-height:1;font-weight:700;width:24.6px;text-align:center">7. Food</div>
<div class="a" style="left:31.5px;top:55.99px;width:24.6px;height:5.3px;background:#262626;border-radius:2.65px"></div>
<div class="a t" style="left:31.5px;top:57.49px;font-size:2.3px;color:#fff;line-height:1;font-weight:700;width:24.6px;text-align:center">8. Sky</div>
<div class="a" style="left:4.4px;top:63.42px;width:24.6px;height:5.3px;background:#262626;border-radius:2.65px"></div>
<div class="a t" style="left:4.4px;top:64.92px;font-size:2.3px;color:#fff;line-height:1;font-weight:700;width:24.6px;text-align:center">9. Frog</div>
<div class="a" style="left:31.5px;top:63.42px;width:24.6px;height:5.3px;background:#262626;border-radius:2.65px"></div>
<div class="a t" style="left:31.5px;top:64.92px;font-size:2.3px;color:#fff;line-height:1;font-weight:700;width:24.6px;text-align:center">10. Night</div>
<div class="a" style="left:4.4px;top:70.85px;width:24.6px;height:5.3px;background:#262626;border-radius:2.65px"></div>
<div class="a t" style="left:4.4px;top:72.35px;font-size:2.3px;color:#fff;line-height:1;font-weight:700;width:24.6px;text-align:center">11. Double</div>
<div class="a" style="left:31.5px;top:70.85px;width:24.6px;height:5.3px;background:#262626;border-radius:2.65px"></div>
<div class="a t" style="left:31.5px;top:72.35px;font-size:2.3px;color:#fff;line-height:1;font-weight:700;width:24.6px;text-align:center">12. Antenna</div>
<div class="a" style="left:20.5px;top:94.9px;width:2px;height:2px;background:none;border-radius:0.4px;border:.35px solid #aaa"></div>
<div class="a t" style="left:24px;top:94.54px;width:15px;overflow:hidden;font-size:2.32px;line-height:1;color:#ccc;font-weight:700;opacity:0.92">upport Total A</div>
<div class="a" style="left:0px;top:101px;width:31.5px;height:0.7px;background:#b8962e"></div>
<div class="a" style="left:4.4px;top:105.2px;width:52.4px;height:7.4px;background:#f6cf45;border-radius:1.3px"></div>
<div class="a t" style="left:4.4px;top:107.65px;font-size:2.5px;color:#222;line-height:1;font-weight:700;width:52.4px;text-align:center">Ok, I Saved</div>
</div>
<div class="ph" style="left:1056.2px;top:246.2px;width:61.4px;height:132.4px;background:#181818">
<div class="a t" style="left:4.9px;top:1.9px;font-size:2.5px;color:#fff;line-height:1;font-weight:700">9:41</div>
<svg width="12" height="3" style="left:47.6px;top:1.6px" viewBox="0 0 12 3"><path d="M0.2 2.1 L3.2 0.3 L3.2 2.1 Z" fill="#fff"/><rect x="4.3" y="0.3" width="1.9" height="1.8" rx=".4" fill="#fff" opacity=".85"/><rect x="7.4" y="0.2" width="3.7" height="1.9" rx=".7" fill="#fff"/></svg>
<div class="a" style="left:6.4px;top:10.7px;width:4.2px;height:4.2px;background:#eee;border-radius:50%"></div>
<div class="a" style="left:52.1px;top:10.9px;width:3.8px;height:3.8px;background:none;border-radius:50%;border:.4px solid #888"></div>
<div class="a t" style="left:4.4px;top:18.6px;font-size:3.9px;color:#fff;line-height:1;font-weight:700">Confirm Secret Recovery</div>
<div class="a t" style="left:4.4px;top:23.2px;font-size:3.9px;color:#fff;line-height:1;font-weight:700">Word</div>
<div class="a t" style="left:4.5px;top:28.54px;width:50px;overflow:hidden;font-size:2.32px;line-height:1;color:#888;font-weight:700;opacity:0.8">History Offer Listing Details Activity Creato</div>
<div class="a t" style="left:4.5px;top:30.84px;width:12px;overflow:hidden;font-size:2.32px;line-height:1;color:#888;font-weight:700;opacity:0.8">ting Details</div>
<div class="a" style="left:4.9px;top:38px;width:24.5px;height:5.4px;background:#242424;border-radius:2.7px"></div>
<div class="a t" style="left:7.4px;top:39.7px;font-size:1.8px;color:#999;line-height:1">1.</div>
<div class="a t" style="left:13.9px;top:39.34px;width:6px;overflow:hidden;font-size:2.32px;line-height:1;color:#ddd;font-weight:700;opacity:1">n Netwo</div>
<div class="a" style="left:32px;top:38px;width:24.5px;height:5.4px;background:#242424;border-radius:2.7px"></div>
<div class="a t" style="left:34.5px;top:39.7px;font-size:1.8px;color:#999;line-height:1">2.</div>
<div class="a" style="left:4.9px;top:45.9px;width:24.5px;height:5.4px;background:#242424;border-radius:2.7px"></div>
<div class="a t" style="left:7.4px;top:47.6px;font-size:1.8px;color:#999;line-height:1">3.</div>
<div class="a t" style="left:13.9px;top:47.24px;width:6px;overflow:hidden;font-size:2.32px;line-height:1;color:#ddd;font-weight:700;opacity:1">Wallet </div>
<div class="a" style="left:32px;top:45.9px;width:24.5px;height:5.4px;background:#242424;border-radius:2.7px"></div>
<div class="a t" style="left:34.5px;top:47.6px;font-size:1.8px;color:#999;line-height:1">4.</div>
<div class="a" style="left:4.9px;top:53.8px;width:24.5px;height:5.4px;background:#242424;border-radius:2.7px"></div>
<div class="a t" style="left:7.4px;top:55.5px;font-size:1.8px;color:#999;line-height:1">5.</div>
<div class="a t" style="left:13.9px;top:55.14px;width:6px;overflow:hidden;font-size:2.32px;line-height:1;color:#ddd;font-weight:700;opacity:1">py Bala</div>
<div class="a" style="left:32px;top:53.8px;width:24.5px;height:5.4px;background:#242424;border-radius:2.7px"></div>
<div class="a t" style="left:34.5px;top:55.5px;font-size:1.8px;color:#999;line-height:1">6.</div>
<div class="a" style="left:4.9px;top:61.7px;width:24.5px;height:5.4px;background:#242424;border-radius:2.7px;border:.45px solid #b8962e"></div>
<div class="a t" style="left:7.4px;top:63.4px;font-size:1.8px;color:#999;line-height:1">7.</div>
<div class="a" style="left:32px;top:61.7px;width:24.5px;height:5.4px;background:#242424;border-radius:2.7px"></div>
<div class="a t" style="left:34.5px;top:63.4px;font-size:1.8px;color:#999;line-height:1">8.</div>
<div class="a" style="left:4.9px;top:69.6px;width:24.5px;height:5.4px;background:#242424;border-radius:2.7px"></div>
<div class="a t" style="left:7.4px;top:71.3px;font-size:1.8px;color:#999;line-height:1">9.</div>
<div class="a" style="left:32px;top:69.6px;width:24.5px;height:5.4px;background:#242424;border-radius:2.7px"></div>
<div class="a t" style="left:34.5px;top:71.3px;font-size:1.8px;color:#999;line-height:1">10.</div>
<div class="a" style="left:4.9px;top:77.5px;width:24.5px;height:5.4px;background:#242424;border-radius:2.7px"></div>
<div class="a t" style="left:7.4px;top:79.2px;font-size:1.8px;color:#999;line-height:1">11.</div>
<div class="a" style="left:32px;top:77.5px;width:24.5px;height:5.4px;background:#242424;border-radius:2.7px"></div>
<div class="a t" style="left:34.5px;top:79.2px;font-size:1.8px;color:#999;line-height:1">12.</div>
<div class="a" style="left:4.9px;top:86.6px;width:14px;height:5.8px;background:#222;border-radius:2.9px;border:.5px solid #b8962e"></div>
<div class="a t" style="left:7.1px;top:88.14px;width:9.6px;overflow:hidden;font-size:2.32px;line-height:1;color:#ddd;font-weight:700;opacity:0.98"> Price Tok</div>
<div class="a" style="left:21.4px;top:86.6px;width:8px;height:5.8px;background:#222;border-radius:2.9px;border:.5px solid #2a2a2a"></div>
<div class="a t" style="left:23.6px;top:88.14px;width:3.6px;overflow:hidden;font-size:2.32px;line-height:1;color:#ddd;font-weight:700;opacity:0.98"> Send</div>
<div class="a" style="left:32px;top:86.6px;width:10px;height:5.8px;background:#222;border-radius:2.9px;border:.5px solid #b8962e"></div>
<div class="a t" style="left:34.2px;top:88.14px;width:5.6px;overflow:hidden;font-size:2.32px;line-height:1;color:#ddd;font-weight:700;opacity:0.98">ke Ear</div>
<div class="a" style="left:43.8px;top:86.6px;width:11px;height:5.8px;background:#222;border-radius:2.9px;border:.5px solid #2a2a2a"></div>
<div class="a t" style="left:46px;top:88.14px;width:6.6px;overflow:hidden;font-size:2.32px;line-height:1;color:#ddd;font-weight:700;opacity:0.98">ort Tot</div>
<div class="a" style="left:4.9px;top:94px;width:9.6px;height:5.8px;background:#222;border-radius:2.9px;border:.5px solid #2a2a2a"></div>
<div class="a t" style="left:7.1px;top:95.54px;width:5.2px;overflow:hidden;font-size:2.32px;line-height:1;color:#ddd;font-weight:700;opacity:0.98">tory O</div>
<div class="a" style="left:16.3px;top:94px;width:9.6px;height:5.8px;background:#222;border-radius:2.9px;border:.5px solid #b8962e"></div>
<div class="a t" style="left:18.5px;top:95.54px;width:5.2px;overflow:hidden;font-size:2.32px;line-height:1;color:#ddd;font-weight:700;opacity:0.98">g Deta</div>
<div class="a" style="left:27.6px;top:94px;width:13.2px;height:5.8px;background:#222;border-radius:2.9px;border:.5px solid #2a2a2a"></div>
<div class="a t" style="left:29.8px;top:95.54px;width:8.8px;overflow:hidden;font-size:2.32px;line-height:1;color:#ddd;font-weight:700;opacity:0.98">etwork So</div>
<div class="a" style="left:42.5px;top:94px;width:14px;height:5.8px;background:#222;border-radius:2.9px;border:.5px solid #2a2a2a"></div>
<div class="a t" style="left:44.7px;top:95.54px;width:9.6px;overflow:hidden;font-size:2.32px;line-height:1;color:#ddd;font-weight:700;opacity:0.98">let Addres</div>
<div class="a" style="left:4.9px;top:101px;width:13.1px;height:5.8px;background:#222;border-radius:2.9px;border:.5px solid #2a2a2a"></div>
<div class="a t" style="left:7.1px;top:102.54px;width:8.7px;overflow:hidden;font-size:2.32px;line-height:1;color:#ddd;font-weight:700;opacity:0.98">Balance M</div>
<div class="a" style="left:19.8px;top:101px;width:10.5px;height:5.8px;background:#222;border-radius:2.9px;border:.5px solid #2a2a2a"></div>
<div class="a t" style="left:22px;top:102.54px;width:6.1px;overflow:hidden;font-size:2.32px;line-height:1;color:#ddd;font-weight:700;opacity:0.98">ice Tok</div>
<div class="a" style="left:33.8px;top:101px;width:9.6px;height:5.8px;background:#222;border-radius:2.9px;border:.5px solid #2a2a2a"></div>
<div class="a t" style="left:36px;top:102.54px;width:5.2px;overflow:hidden;font-size:2.32px;line-height:1;color:#ddd;font-weight:700;opacity:0.98">nd Rec</div>
<div class="a" style="left:46px;top:101px;width:9.6px;height:5.8px;background:#222;border-radius:2.9px;border:.5px solid #2a2a2a"></div>
<div class="a t" style="left:48.2px;top:102.54px;width:5.2px;overflow:hidden;font-size:2.32px;line-height:1;color:#ddd;font-weight:700;opacity:0.98">Earn H</div>
<div class="a" style="left:0px;top:117.1px;width:46px;height:0.7px;background:#b8962e"></div>
<div class="a" style="left:4.6px;top:120.6px;width:52.2px;height:7.4px;background:#f6cf45;border-radius:1.3px"></div>
<div class="a t" style="left:4.6px;top:123.05px;font-size:2.5px;color:#222;line-height:1;font-weight:700;width:52.2px;text-align:center">Confirmation</div>
</div>
<div class="a t" style="left:587.65px;top:434.76px;font-size:11.8px;color:#a4a4a4;line-height:1;letter-spacing:.85px;-webkit-text-stroke:.3px #a4a4a4">08. Ho...</div>
<div class="a t" style="left:665.8px;top:434.76px;font-size:11.8px;color:#a4a4a4;line-height:1;letter-spacing:.85px;-webkit-text-stroke:.3px #a4a4a4">09. Ho...</div>
<div class="a t" style="left:743.95px;top:433.31px;font-size:11.8px;color:#a4a4a4;line-height:1;letter-spacing:.85px;-webkit-text-stroke:.3px #a4a4a4">10. Ho...</div>
<div class="a t" style="left:822.1px;top:434.76px;font-size:11.8px;color:#a4a4a4;line-height:1;letter-spacing:.85px;-webkit-text-stroke:.3px #a4a4a4">11. Ho...</div>
<div class="a t" style="left:900.25px;top:434.76px;font-size:11.8px;color:#a4a4a4;line-height:1;letter-spacing:.85px;-webkit-text-stroke:.3px #a4a4a4">12. Ad...</div>
<div class="a t" style="left:978.4px;top:434.76px;font-size:11.8px;color:#a4a4a4;line-height:1;letter-spacing:.85px;-webkit-text-stroke:.3px #a4a4a4">13. Ad...</div>
<div class="a t" style="left:1056.55px;top:434.76px;font-size:11.8px;color:#a4a4a4;line-height:1;letter-spacing:.85px;-webkit-text-stroke:.3px #a4a4a4">14. Ad...</div>
<div class="ph" style="left:587.3px;top:448.9px;width:61.4px;height:117.2px;background:linear-gradient(180deg,#f2c81e 0,#e4b816 35px,#c9a10e 62px,#181818 62px)">
<div class="a t" style="left:4.9px;top:1.9px;font-size:2.5px;color:#222;line-height:1;font-weight:700">9:41</div>
<svg width="12" height="3" style="left:47.6px;top:1.6px" viewBox="0 0 12 3"><path d="M0.2 2.1 L3.2 0.3 L3.2 2.1 Z" fill="#222"/><rect x="4.3" y="0.3" width="1.9" height="1.8" rx=".4" fill="#222" opacity=".85"/><rect x="7.4" y="0.2" width="3.7" height="1.9" rx=".7" fill="#222"/></svg>
<div class="a" style="left:4px;top:9.6px;width:5.2px;height:5.2px;background:rgba(90,70,0,.25);border-radius:50%;border:.45px solid #8a7010"></div>
<div class="a" style="left:11.9px;top:9.6px;width:5.2px;height:5.2px;background:rgba(90,70,0,.25);border-radius:50%;border:.45px solid #8a7010"></div>
<div class="a" style="left:52.4px;top:9.6px;width:5.2px;height:5.2px;background:rgba(90,70,0,.25);border-radius:50%;border:.45px solid #8a7010"></div>
<div class="a" style="left:24.7px;top:9.3px;width:12.6px;height:12.6px;background:#2a2222;border-radius:50%"></div>
<div class="a" style="left:26.7px;top:11.9px;width:8.6px;height:8.6px;background:#d9a0a6;border-radius:50%"></div>
<div class="a" style="left:26.8px;top:10.8px;width:8.4px;height:3.6px;background:#3a2a2a;border-radius:50% 50% 0 0"></div>
<div class="a t" style="left:24px;top:23.52px;width:13px;overflow:hidden;font-size:2.61px;line-height:1;color:#6a5510;font-weight:700;opacity:1"> Total Avg </div>
<div class="a" style="left:14px;top:28.8px;width:16.5px;height:3px;background:rgba(90,70,0,.2);border-radius:0.8px;border:.4px solid #8a7212"></div>
<div class="a" style="left:31.5px;top:28.8px;width:11.5px;height:3px;background:rgba(90,70,0,.2);border-radius:0.8px;border:.4px solid #8a7212"></div>
<div class="a" style="left:3.9px;top:35.2px;width:54px;height:23px;background:#161616;border-radius:2.5px"></div>
<div class="a t" style="left:0px;top:37.4px;font-size:1.8px;color:#aaa;line-height:1;width:61.4px;text-align:center;">Your Balance</div>
<div class="a t" style="left:15.9px;top:40.4px;font-size:3.6px;color:#fff;line-height:1;font-weight:700">$32,109.80</div>
<div class="a" style="left:38.4px;top:40.9px;width:7.5px;height:2.6px;background:#1d3b2a;border-radius:1.3px"></div>
<div class="a t" style="left:39.4px;top:40.84px;width:5.5px;overflow:hidden;font-size:2.32px;line-height:1;color:#2bd47a;font-weight:700;opacity:1">y Offe</div>
<div class="a" style="left:6.3px;top:46.7px;width:11px;height:9.5px;background:#222;border-radius:1.5px"></div>
<div class="a" style="left:10.3px;top:48.5px;width:3px;height:2.5px;background:none;border-radius:0.4px;border:.35px solid #d9b54a"></div>
<div class="a t" style="left:8.8px;top:51.93px;width:6px;overflow:hidden;font-size:2px;line-height:1;color:#999;font-weight:700;opacity:0.92">thereum </div>
<div class="a" style="left:18.9px;top:46.7px;width:11px;height:9.5px;background:#222;border-radius:1.5px"></div>
<div class="a" style="left:22.9px;top:48.5px;width:3px;height:2.5px;background:none;border-radius:0.4px;border:.35px solid #d9b54a"></div>
<div class="a t" style="left:21.4px;top:51.93px;width:6px;overflow:hidden;font-size:2px;line-height:1;color:#999;font-weight:700;opacity:0.92">ork Sola</div>
<div class="a" style="left:31.5px;top:46.7px;width:11px;height:9.5px;background:#222;border-radius:1.5px"></div>
<div class="a" style="left:35.5px;top:48.5px;width:3px;height:2.5px;background:none;border-radius:0.4px;border:.35px solid #d9b54a"></div>
<div class="a t" style="left:34px;top:51.93px;width:6px;overflow:hidden;font-size:2px;line-height:1;color:#999;font-weight:700;opacity:0.92"> Address</div>
<div class="a" style="left:44.1px;top:46.7px;width:11px;height:9.5px;background:#222;border-radius:1.5px"></div>
<div class="a" style="left:48.1px;top:48.5px;width:3px;height:2.5px;background:none;border-radius:0.4px;border:.35px solid #d9b54a"></div>
<div class="a t" style="left:46.6px;top:51.93px;width:6px;overflow:hidden;font-size:2px;line-height:1;color:#999;font-weight:700;opacity:0.92">ance Mar</div>
<div class="a" style="left:0px;top:61.7px;width:61.4px;height:56px;background:#1b1b1b;border-radius:4px 4px 0 0"></div>
<div class="a" style="left:27px;top:63.2px;width:7px;height:0.6px;background:#444;border-radius:0.3px"></div>
<div class="a" style="left:4px;top:65.8px;width:15.5px;height:4px;background:#232323;border-radius:2px;border:.45px solid #b8962e"></div>
<div class="a t" style="left:8px;top:66.56px;width:7.5px;overflow:hidden;font-size:2.03px;line-height:1;color:#888;font-weight:700;opacity:0.69"> Token Sw</div>
<div class="a" style="left:21.5px;top:65.8px;width:15.5px;height:4px;background:#232323;border-radius:2px"></div>
<div class="a t" style="left:25.5px;top:66.56px;width:7.5px;overflow:hidden;font-size:2.03px;line-height:1;color:#888;font-weight:700;opacity:0.69">Receive S</div>
<div class="a" style="left:39px;top:65.8px;width:17px;height:4px;background:#232323;border-radius:2px"></div>
<div class="a t" style="left:43px;top:66.56px;width:9px;overflow:hidden;font-size:2.03px;line-height:1;color:#888;font-weight:700;opacity:0.69">n Help Sup</div>
<div class="a" style="left:4px;top:72.8px;width:53.5px;height:8.6px;background:#202020;border-radius:1.5px"></div>
<div class="a" style="left:6.5px;top:74.5px;width:5.2px;height:5.2px;background:#39b795;border-radius:1.2px"></div>
<div class="a t" style="left:14px;top:74.54px;width:7px;overflow:hidden;font-size:2.32px;line-height:1;color:#ddd;font-weight:700;opacity:1">tal Avg </div>
<div class="a t" style="left:14px;top:76.86px;width:6px;overflow:hidden;font-size:2.03px;line-height:1;color:#2bd47a;font-weight:700;opacity:0.92">ffer Li</div>
<svg width="10" height="4" style="left:28px;top:75.1px" viewBox="0 0 10 4"><path d="M0 3 L2 2.2 L3.5 3 L5.5 1.5 L7 2 L10 .5" fill="none" stroke="#2bd47a" stroke-width=".6"/></svg>
<div class="a t" style="left:45px;top:74.54px;width:10px;overflow:hidden;font-size:2.32px;line-height:1;color:#fff;font-weight:700;opacity:1">reum Main </div>
<div class="a t" style="left:43px;top:76.86px;width:12px;overflow:hidden;font-size:2.03px;line-height:1;color:#777;font-weight:700;opacity:0.8"> Solana Walle</div>
<div class="a" style="left:4px;top:82.9px;width:53.5px;height:8.6px;background:#202020;border-radius:1.5px"></div>
<div class="a" style="left:6.5px;top:84.6px;width:5.2px;height:5.2px;background:#f29a1e;border-radius:1.2px"></div>
<div class="a t" style="left:14px;top:84.64px;width:7px;overflow:hidden;font-size:2.32px;line-height:1;color:#ddd;font-weight:700;opacity:1">dress Co</div>
<div class="a t" style="left:14px;top:86.96px;width:6px;overflow:hidden;font-size:2.03px;line-height:1;color:#e04848;font-weight:700;opacity:0.92">e Marke</div>
<svg width="10" height="4" style="left:28px;top:85.2px" viewBox="0 0 10 4"><path d="M0 3 L2 2.2 L3.5 3 L5.5 1.5 L7 2 L10 .5" fill="none" stroke="#e04848" stroke-width=".6"/></svg>
<div class="a t" style="left:45px;top:84.64px;width:10px;overflow:hidden;font-size:2.32px;line-height:1;color:#fff;font-weight:700;opacity:1">ken Swap S</div>
<div class="a t" style="left:43px;top:86.96px;width:12px;overflow:hidden;font-size:2.03px;line-height:1;color:#777;font-weight:700;opacity:0.8">eive Stake Ea</div>
<div class="a" style="left:4px;top:93px;width:53.5px;height:8.6px;background:#202020;border-radius:1.5px"></div>
<div class="a" style="left:6.5px;top:94.7px;width:5.2px;height:5.2px;background:#6c6ff2;border-radius:1.2px"></div>
<div class="a t" style="left:14px;top:94.74px;width:7px;overflow:hidden;font-size:2.32px;line-height:1;color:#ddd;font-weight:700;opacity:1">elp Supp</div>
<div class="a t" style="left:14px;top:97.06px;width:6px;overflow:hidden;font-size:2.03px;line-height:1;color:#2bd47a;font-weight:700;opacity:0.92"> Avg Hi</div>
<svg width="10" height="4" style="left:28px;top:95.3px" viewBox="0 0 10 4"><path d="M0 3 L2 2.2 L3.5 3 L5.5 1.5 L7 2 L10 .5" fill="none" stroke="#2bd47a" stroke-width=".6"/></svg>
<div class="a t" style="left:45px;top:94.74px;width:10px;overflow:hidden;font-size:2.32px;line-height:1;color:#fff;font-weight:700;opacity:1">r Listing </div>
<div class="a t" style="left:43px;top:97.06px;width:12px;overflow:hidden;font-size:2.03px;line-height:1;color:#777;font-weight:700;opacity:0.8">m Main Networ</div>
<div class="a" style="left:0px;top:104px;width:61.4px;height:13.2px;background:#171717"></div>
<div class="a" style="left:4.5px;top:106px;width:4px;height:4px;background:#eee;border-radius:50%"></div>
<div class="a t" style="left:4px;top:110.43px;width:5px;overflow:hidden;font-size:2px;line-height:1;color:#ddd;font-weight:700;opacity:0.92">lana Wa</div>
<svg width="5" height="5" style="left:16.1px;top:105.5px" viewBox="0 0 5 5"><circle cx="2.5" cy="2.5" r="1.9" fill="none" stroke="#666" stroke-width=".5"/></svg>
<div class="a t" style="left:16.1px;top:110.43px;width:5px;overflow:hidden;font-size:2px;line-height:1;color:#777;font-weight:700;opacity:0.69">ss Copy</div>
<svg width="5" height="5" style="left:28.2px;top:105.5px" viewBox="0 0 5 5"><circle cx="2.5" cy="2.5" r="1.9" fill="none" stroke="#666" stroke-width=".5"/></svg>
<div class="a t" style="left:28.2px;top:110.43px;width:5px;overflow:hidden;font-size:2px;line-height:1;color:#777;font-weight:700;opacity:0.69">arket P</div>
<svg width="5" height="5" style="left:40.3px;top:105.5px" viewBox="0 0 5 5"><circle cx="2.5" cy="2.5" r="1.9" fill="none" stroke="#666" stroke-width=".5"/></svg>
<div class="a t" style="left:40.3px;top:110.43px;width:5px;overflow:hidden;font-size:2px;line-height:1;color:#777;font-weight:700;opacity:0.69"> Swap S</div>
<svg width="5" height="5" style="left:52.4px;top:105.5px" viewBox="0 0 5 5"><circle cx="2.5" cy="2.5" r="1.9" fill="none" stroke="#666" stroke-width=".5"/></svg>
<div class="a t" style="left:52.4px;top:110.43px;width:5px;overflow:hidden;font-size:2px;line-height:1;color:#777;font-weight:700;opacity:0.69">e Stake</div>
</div>
<div class="ph" style="left:665.45px;top:448.5px;width:61.4px;height:119.2px;background:linear-gradient(180deg,#f2c81e 0,#e0b415 30px,#c9a10e 47px,#181818 47px)">
<div class="a t" style="left:4.9px;top:1.9px;font-size:2.5px;color:#222;line-height:1;font-weight:700">9:41</div>
<svg width="12" height="3" style="left:47.6px;top:1.6px" viewBox="0 0 12 3"><path d="M0.2 2.1 L3.2 0.3 L3.2 2.1 Z" fill="#222"/><rect x="4.3" y="0.3" width="1.9" height="1.8" rx=".4" fill="#222" opacity=".85"/><rect x="7.4" y="0.2" width="3.7" height="1.9" rx=".7" fill="#222"/></svg>
<div class="a" style="left:4.4px;top:10px;width:5.2px;height:5.2px;background:rgba(90,70,0,.25);border-radius:50%;border:.45px solid #8a7010"></div>
<div class="a" style="left:12.4px;top:10px;width:5.2px;height:5.2px;background:rgba(90,70,0,.25);border-radius:50%;border:.45px solid #8a7010"></div>
<div class="a" style="left:19.7px;top:9.7px;width:5.8px;height:5.8px;background:#2a2222;border-radius:50%"></div>
<div class="a" style="left:20.8px;top:11.2px;width:3.6px;height:3.6px;background:#d9a0a6;border-radius:50%"></div>
<div class="a" style="left:27px;top:10.6px;width:22px;height:4px;background:rgba(90,70,0,.25);border-radius:2px;border:.45px solid #8a7212"></div>
<div class="a t" style="left:29px;top:11.24px;width:12px;overflow:hidden;font-size:2.32px;line-height:1;color:#6a5510;font-weight:700;opacity:1"> Support Tot</div>
<div class="a" style="left:52.4px;top:10px;width:5.2px;height:5.2px;background:rgba(90,70,0,.25);border-radius:50%;border:.45px solid #8a7010"></div>
<div class="a" style="left:4px;top:19.5px;width:54px;height:23px;background:#161616;border-radius:2.5px"></div>
<div class="a t" style="left:0px;top:21.7px;font-size:1.8px;color:#aaa;line-height:1;width:61.4px;text-align:center;">Your Balance</div>
<div class="a t" style="left:16px;top:24.7px;font-size:3.6px;color:#fff;line-height:1;font-weight:700">$32,109.80</div>
<div class="a" style="left:38.5px;top:25.2px;width:7.5px;height:2.6px;background:#1d3b2a;border-radius:1.3px"></div>
<div class="a t" style="left:39.5px;top:25.14px;width:5.5px;overflow:hidden;font-size:2.32px;line-height:1;color:#2bd47a;font-weight:700;opacity:1">g Hist</div>
<div class="a" style="left:6.4px;top:31px;width:11px;height:9.5px;background:#222;border-radius:1.5px"></div>
<div class="a" style="left:10.4px;top:32.8px;width:3px;height:2.5px;background:none;border-radius:0.4px;border:.35px solid #d9b54a"></div>
<div class="a t" style="left:8.9px;top:36.23px;width:6px;overflow:hidden;font-size:2px;line-height:1;color:#999;font-weight:700;opacity:0.92">isting D</div>
<div class="a" style="left:19px;top:31px;width:11px;height:9.5px;background:#222;border-radius:1.5px"></div>
<div class="a" style="left:23px;top:32.8px;width:3px;height:2.5px;background:none;border-radius:0.4px;border:.35px solid #d9b54a"></div>
<div class="a t" style="left:21.5px;top:36.23px;width:6px;overflow:hidden;font-size:2px;line-height:1;color:#999;font-weight:700;opacity:0.92">ain Netw</div>
<div class="a" style="left:31.6px;top:31px;width:11px;height:9.5px;background:#222;border-radius:1.5px"></div>
<div class="a" style="left:35.6px;top:32.8px;width:3px;height:2.5px;background:none;border-radius:0.4px;border:.35px solid #d9b54a"></div>
<div class="a t" style="left:34.1px;top:36.23px;width:6px;overflow:hidden;font-size:2px;line-height:1;color:#999;font-weight:700;opacity:0.92">a Wallet</div>
<div class="a" style="left:44.2px;top:31px;width:11px;height:9.5px;background:#222;border-radius:1.5px"></div>
<div class="a" style="left:48.2px;top:32.8px;width:3px;height:2.5px;background:none;border-radius:0.4px;border:.35px solid #d9b54a"></div>
<div class="a t" style="left:46.7px;top:36.23px;width:6px;overflow:hidden;font-size:2px;line-height:1;color:#999;font-weight:700;opacity:0.92">Copy Bal</div>
<div class="a" style="left:0px;top:47.3px;width:61.4px;height:75px;background:#1b1b1b;border-radius:4px 4px 0 0"></div>
<div class="a" style="left:27px;top:48.8px;width:7px;height:0.6px;background:#444;border-radius:0.3px"></div>
<div class="a" style="left:4px;top:51.6px;width:15.5px;height:4px;background:#232323;border-radius:2px;border:.45px solid #b8962e"></div>
<div class="a t" style="left:8px;top:52.36px;width:7.5px;overflow:hidden;font-size:2.03px;line-height:1;color:#888;font-weight:700;opacity:0.69">et Price </div>
<div class="a" style="left:21.5px;top:51.6px;width:15.5px;height:4px;background:#232323;border-radius:2px"></div>
<div class="a t" style="left:25.5px;top:52.36px;width:7.5px;overflow:hidden;font-size:2.03px;line-height:1;color:#888;font-weight:700;opacity:0.69">ap Send R</div>
<div class="a" style="left:39px;top:51.6px;width:17px;height:4px;background:#232323;border-radius:2px"></div>
<div class="a t" style="left:43px;top:52.36px;width:9px;overflow:hidden;font-size:2.03px;line-height:1;color:#888;font-weight:700;opacity:0.69">take Earn </div>
<div class="a" style="left:4px;top:57.7px;width:53.5px;height:9px;background:#202020;border-radius:1.5px"></div>
<div class="a" style="left:6.5px;top:59.6px;width:5.2px;height:5.2px;background:#39b795;border-radius:1.2px"></div>
<div class="a t" style="left:14px;top:59.64px;width:7px;overflow:hidden;font-size:2.32px;line-height:1;color:#ddd;font-weight:700;opacity:1">pport To</div>
<div class="a t" style="left:14px;top:61.96px;width:6px;overflow:hidden;font-size:2.03px;line-height:1;color:#2bd47a;font-weight:700;opacity:0.92">istory </div>
<svg width="10" height="4" style="left:28px;top:60.2px" viewBox="0 0 10 4"><path d="M0 3 L2 2.2 L3.5 3 L5.5 1.5 L7 2 L10 .5" fill="none" stroke="#2bd47a" stroke-width=".6"/></svg>
<div class="a t" style="left:45px;top:59.64px;width:10px;overflow:hidden;font-size:2.32px;line-height:1;color:#fff;font-weight:700;opacity:1">ing Detail</div>
<div class="a t" style="left:43px;top:61.96px;width:12px;overflow:hidden;font-size:2.03px;line-height:1;color:#777;font-weight:700;opacity:0.8"> Network Sola</div>
<div class="a" style="left:4px;top:68.2px;width:53.5px;height:9px;background:#202020;border-radius:1.5px"></div>
<div class="a" style="left:6.5px;top:70.1px;width:5.2px;height:5.2px;background:#f29a1e;border-radius:1.2px"></div>
<div class="a t" style="left:14px;top:70.14px;width:7px;overflow:hidden;font-size:2.32px;line-height:1;color:#ddd;font-weight:700;opacity:1">allet Ad</div>
<div class="a t" style="left:14px;top:72.46px;width:6px;overflow:hidden;font-size:2.03px;line-height:1;color:#e04848;font-weight:700;opacity:0.92">y Balan</div>
<svg width="10" height="4" style="left:28px;top:70.7px" viewBox="0 0 10 4"><path d="M0 3 L2 2.2 L3.5 3 L5.5 1.5 L7 2 L10 .5" fill="none" stroke="#e04848" stroke-width=".6"/></svg>
<div class="a t" style="left:45px;top:70.14px;width:10px;overflow:hidden;font-size:2.32px;line-height:1;color:#fff;font-weight:700;opacity:1">Price Toke</div>
<div class="a t" style="left:43px;top:72.46px;width:12px;overflow:hidden;font-size:2.03px;line-height:1;color:#777;font-weight:700;opacity:0.8">Send Receive </div>
<div class="a" style="left:4px;top:78.7px;width:53.5px;height:9px;background:#202020;border-radius:1.5px"></div>
<div class="a" style="left:6.5px;top:80.6px;width:5.2px;height:5.2px;background:#6c6ff2;border-radius:1.2px"></div>
<div class="a t" style="left:14px;top:80.64px;width:7px;overflow:hidden;font-size:2.32px;line-height:1;color:#ddd;font-weight:700;opacity:1">e Earn H</div>
<div class="a t" style="left:14px;top:82.96px;width:6px;overflow:hidden;font-size:2.03px;line-height:1;color:#2bd47a;font-weight:700;opacity:0.92">rt Tota</div>
<svg width="10" height="4" style="left:28px;top:81.2px" viewBox="0 0 10 4"><path d="M0 3 L2 2.2 L3.5 3 L5.5 1.5 L7 2 L10 .5" fill="none" stroke="#2bd47a" stroke-width=".6"/></svg>
<div class="a t" style="left:45px;top:80.64px;width:10px;overflow:hidden;font-size:2.32px;line-height:1;color:#fff;font-weight:700;opacity:1">ory Offer </div>
<div class="a t" style="left:43px;top:82.96px;width:12px;overflow:hidden;font-size:2.03px;line-height:1;color:#777;font-weight:700;opacity:0.8"> Details Acti</div>
<div class="a" style="left:4px;top:89.2px;width:53.5px;height:9px;background:#202020;border-radius:1.5px"></div>
<div class="a" style="left:6.5px;top:91.1px;width:5.2px;height:5.2px;background:#6d7ad8;border-radius:1.2px"></div>
<div class="a t" style="left:14px;top:91.14px;width:7px;overflow:hidden;font-size:2.32px;line-height:1;color:#ddd;font-weight:700;opacity:1">twork So</div>
<div class="a t" style="left:14px;top:93.46px;width:6px;overflow:hidden;font-size:2.03px;line-height:1;color:#e04848;font-weight:700;opacity:0.92">et Addr</div>
<svg width="10" height="4" style="left:28px;top:91.7px" viewBox="0 0 10 4"><path d="M0 3 L2 2.2 L3.5 3 L5.5 1.5 L7 2 L10 .5" fill="none" stroke="#2bd47a" stroke-width=".6"/></svg>
<div class="a t" style="left:45px;top:91.14px;width:10px;overflow:hidden;font-size:2.32px;line-height:1;color:#fff;font-weight:700;opacity:1">alance Mar</div>
<div class="a t" style="left:43px;top:93.46px;width:12px;overflow:hidden;font-size:2.03px;line-height:1;color:#777;font-weight:700;opacity:0.8">ce Token Swap</div>
<div class="a" style="left:4px;top:99.7px;width:53.5px;height:9px;background:#202020;border-radius:1.5px"></div>
<div class="a" style="left:6.5px;top:101.6px;width:5.2px;height:5.2px;background:#e8e8e8;border-radius:1.2px"></div>
<div class="a t" style="left:14px;top:101.64px;width:7px;overflow:hidden;font-size:2.32px;line-height:1;color:#ddd;font-weight:700;opacity:1">d Receiv</div>
<div class="a t" style="left:14px;top:103.96px;width:6px;overflow:hidden;font-size:2.03px;line-height:1;color:#2bd47a;font-weight:700;opacity:0.92">arn Hel</div>
<svg width="10" height="4" style="left:28px;top:102.2px" viewBox="0 0 10 4"><path d="M0 3 L2 2.2 L3.5 3 L5.5 1.5 L7 2 L10 .5" fill="none" stroke="#e04848" stroke-width=".6"/></svg>
<div class="a t" style="left:45px;top:101.64px;width:10px;overflow:hidden;font-size:2.32px;line-height:1;color:#fff;font-weight:700;opacity:1">Total Avg </div>
<div class="a t" style="left:43px;top:103.96px;width:12px;overflow:hidden;font-size:2.03px;line-height:1;color:#777;font-weight:700;opacity:0.8"> Offer Listin</div>
<div class="a" style="left:0px;top:110.2px;width:61.4px;height:9px;background:#171717"></div>
<div class="a" style="left:4.5px;top:112.2px;width:4px;height:4px;background:#eee;border-radius:50%"></div>
<div class="a t" style="left:4px;top:116.63px;width:5px;overflow:hidden;font-size:2px;line-height:1;color:#ddd;font-weight:700;opacity:0.92">hereum </div>
<svg width="5" height="5" style="left:16.1px;top:111.7px" viewBox="0 0 5 5"><circle cx="2.5" cy="2.5" r="1.9" fill="none" stroke="#666" stroke-width=".5"/></svg>
<div class="a t" style="left:16.1px;top:116.63px;width:5px;overflow:hidden;font-size:2px;line-height:1;color:#777;font-weight:700;opacity:0.69">rk Sola</div>
<svg width="5" height="5" style="left:28.2px;top:111.7px" viewBox="0 0 5 5"><circle cx="2.5" cy="2.5" r="1.9" fill="none" stroke="#666" stroke-width=".5"/></svg>
<div class="a t" style="left:28.2px;top:116.63px;width:5px;overflow:hidden;font-size:2px;line-height:1;color:#777;font-weight:700;opacity:0.69">Address</div>
<svg width="5" height="5" style="left:40.3px;top:111.7px" viewBox="0 0 5 5"><circle cx="2.5" cy="2.5" r="1.9" fill="none" stroke="#666" stroke-width=".5"/></svg>
<div class="a t" style="left:40.3px;top:116.63px;width:5px;overflow:hidden;font-size:2px;line-height:1;color:#777;font-weight:700;opacity:0.69">nce Mar</div>
<svg width="5" height="5" style="left:52.4px;top:111.7px" viewBox="0 0 5 5"><circle cx="2.5" cy="2.5" r="1.9" fill="none" stroke="#666" stroke-width=".5"/></svg>
<div class="a t" style="left:52.4px;top:116.63px;width:5px;overflow:hidden;font-size:2px;line-height:1;color:#777;font-weight:700;opacity:0.69">Token S</div>
</div>
<div class="ph" style="left:743.6px;top:447.4px;width:61.4px;height:119.8px;background:#181818">
<div class="a t" style="left:4.9px;top:1.9px;font-size:2.5px;color:#fff;line-height:1;font-weight:700">9:41</div>
<svg width="12" height="3" style="left:47.6px;top:1.6px" viewBox="0 0 12 3"><path d="M0.2 2.1 L3.2 0.3 L3.2 2.1 Z" fill="#fff"/><rect x="4.3" y="0.3" width="1.9" height="1.8" rx=".4" fill="#fff" opacity=".85"/><rect x="7.4" y="0.2" width="3.7" height="1.9" rx=".7" fill="#fff"/></svg>
<div class="a" style="left:4.9px;top:10.4px;width:4.2px;height:4.2px;background:#eee;border-radius:50%"></div>
<div class="a t" style="left:0px;top:11.1px;font-size:2.9px;color:#fff;line-height:1;font-weight:700;width:61.4px;text-align:center;">More Services</div>
<div class="a" style="left:4px;top:19px;width:16px;height:4.4px;background:#1b1b1b;border-radius:2.2px;border:.45px solid #b8962e"></div>
<div class="a" style="left:21.5px;top:19px;width:16px;height:4.4px;background:#232323;border-radius:2.2px"></div>
<div class="a" style="left:39px;top:19px;width:16px;height:4.4px;background:#232323;border-radius:2.2px"></div>
<div class="a" style="left:56px;top:19px;width:6px;height:4.4px;background:#232323;border-radius:2.2px"></div>
<div class="a t" style="left:5px;top:26.24px;width:6px;overflow:hidden;font-size:2.32px;line-height:1;color:#ddd;font-weight:700;opacity:1">eceive </div>
<div class="a" style="left:4px;top:30.8px;width:12px;height:9.2px;background:#242424;border-radius:1.5px"></div>
<div class="a" style="left:8.5px;top:32.8px;width:3px;height:2.6px;background:none;border-radius:0.4px;border:.4px solid #d9b54a"></div>
<div class="a t" style="left:7px;top:36.33px;width:6px;overflow:hidden;font-size:2px;line-height:1;color:#999;font-weight:700;opacity:0.8"> Help Su</div>
<div class="a" style="left:17.6px;top:30.8px;width:12px;height:9.2px;background:#242424;border-radius:1.5px"></div>
<div class="a" style="left:22.1px;top:32.8px;width:3px;height:2.6px;background:none;border-radius:0.4px;border:.4px solid #d9b54a"></div>
<div class="a t" style="left:20.6px;top:36.33px;width:6px;overflow:hidden;font-size:2px;line-height:1;color:#999;font-weight:700;opacity:0.8">al Avg H</div>
<div class="a" style="left:31.2px;top:30.8px;width:12px;height:9.2px;background:#242424;border-radius:1.5px"></div>
<div class="a" style="left:35.7px;top:32.8px;width:3px;height:2.6px;background:none;border-radius:0.4px;border:.4px solid #d9b54a"></div>
<div class="a t" style="left:34.2px;top:36.33px;width:6px;overflow:hidden;font-size:2px;line-height:1;color:#999;font-weight:700;opacity:0.8">fer List</div>
<div class="a" style="left:44.8px;top:30.8px;width:12px;height:9.2px;background:#242424;border-radius:1.5px"></div>
<div class="a" style="left:49.3px;top:32.8px;width:3px;height:2.6px;background:none;border-radius:0.4px;border:.4px solid #d9b54a"></div>
<div class="a t" style="left:47.8px;top:36.33px;width:6px;overflow:hidden;font-size:2px;line-height:1;color:#999;font-weight:700;opacity:0.8">eum Main</div>
<div class="a" style="left:4px;top:42px;width:12px;height:8.6px;background:#242424;border-radius:1.5px"></div>
<div class="a" style="left:8.5px;top:44px;width:3px;height:2.6px;background:none;border-radius:0.4px;border:.4px solid #d9b54a"></div>
<div class="a t" style="left:7px;top:46.93px;width:6px;overflow:hidden;font-size:2px;line-height:1;color:#999;font-weight:700;opacity:0.8">Solana W</div>
<div class="a t" style="left:5px;top:53.34px;width:5px;overflow:hidden;font-size:2.32px;line-height:1;color:#ddd;font-weight:700;opacity:1">ress C</div>
<div class="a" style="left:4px;top:57.5px;width:16.5px;height:9.5px;background:#242424;border-radius:1.5px"></div>
<div class="a" style="left:10.75px;top:59.5px;width:3px;height:2.6px;background:none;border-radius:0.4px;border:.4px solid #d9b54a"></div>
<div class="a t" style="left:9.25px;top:63.33px;width:6px;overflow:hidden;font-size:2px;line-height:1;color:#999;font-weight:700;opacity:0.8"> Market </div>
<div class="a" style="left:22.4px;top:57.5px;width:16.5px;height:9.5px;background:#242424;border-radius:1.5px"></div>
<div class="a" style="left:29.15px;top:59.5px;width:3px;height:2.6px;background:none;border-radius:0.4px;border:.4px solid #d9b54a"></div>
<div class="a t" style="left:27.65px;top:63.33px;width:6px;overflow:hidden;font-size:2px;line-height:1;color:#999;font-weight:700;opacity:0.8">en Swap </div>
<div class="a" style="left:40.8px;top:57.5px;width:16.5px;height:9.5px;background:#242424;border-radius:1.5px"></div>
<div class="a" style="left:47.55px;top:59.5px;width:3px;height:2.6px;background:none;border-radius:0.4px;border:.4px solid #d9b54a"></div>
<div class="a t" style="left:46.05px;top:63.33px;width:6px;overflow:hidden;font-size:2px;line-height:1;color:#999;font-weight:700;opacity:0.8">ive Stak</div>
<div class="a t" style="left:5px;top:69.34px;width:11px;overflow:hidden;font-size:2.32px;line-height:1;color:#ddd;font-weight:700;opacity:1">lp Support </div>
<div class="a" style="left:4px;top:74px;width:16.5px;height:9px;background:#242424;border-radius:1.5px"></div>
<div class="a" style="left:10.75px;top:76px;width:3px;height:2.6px;background:none;border-radius:0.4px;border:.4px solid #d9b54a"></div>
<div class="a t" style="left:9.25px;top:79.33px;width:6px;overflow:hidden;font-size:2px;line-height:1;color:#999;font-weight:700;opacity:0.8">Avg Hist</div>
<div class="a" style="left:22.4px;top:74px;width:16.5px;height:9px;background:#242424;border-radius:1.5px"></div>
<div class="a" style="left:29.15px;top:76px;width:3px;height:2.6px;background:none;border-radius:0.4px;border:.4px solid #d9b54a"></div>
<div class="a t" style="left:27.65px;top:79.33px;width:6px;overflow:hidden;font-size:2px;line-height:1;color:#999;font-weight:700;opacity:0.8"> Listing</div>
<div class="a" style="left:40.8px;top:74px;width:16.5px;height:9px;background:#242424;border-radius:1.5px"></div>
<div class="a" style="left:47.55px;top:76px;width:3px;height:2.6px;background:none;border-radius:0.4px;border:.4px solid #d9b54a"></div>
<div class="a t" style="left:46.05px;top:79.33px;width:6px;overflow:hidden;font-size:2px;line-height:1;color:#999;font-weight:700;opacity:0.8"> Main Ne</div>
<div class="a t" style="left:5px;top:85.84px;width:13px;overflow:hidden;font-size:2.32px;line-height:1;color:#ddd;font-weight:700;opacity:1">ana Wallet Ad</div>
<div class="a" style="left:4px;top:90px;width:12px;height:9.6px;background:#242424;border-radius:1.5px"></div>
<div class="a" style="left:8.5px;top:92px;width:3px;height:2.6px;background:none;border-radius:0.4px;border:.4px solid #d9b54a"></div>
<div class="a t" style="left:7px;top:95.93px;width:6px;overflow:hidden;font-size:2px;line-height:1;color:#999;font-weight:700;opacity:0.8">s Copy B</div>
<div class="a" style="left:17.6px;top:90px;width:12px;height:9.6px;background:#242424;border-radius:1.5px"></div>
<div class="a" style="left:22.1px;top:92px;width:3px;height:2.6px;background:none;border-radius:0.4px;border:.4px solid #d9b54a"></div>
<div class="a t" style="left:20.6px;top:95.93px;width:6px;overflow:hidden;font-size:2px;line-height:1;color:#999;font-weight:700;opacity:0.8">rket Pri</div>
</div>
<div class="ph" style="left:821.75px;top:449px;width:61.4px;height:117.6px;background:linear-gradient(180deg,#8a7512 0,#7a680f 30px,#5e500c 52px,#181818 52px)">
<div class="a t" style="left:4.9px;top:1.9px;font-size:2.5px;color:#222;line-height:1;font-weight:700">9:41</div>
<svg width="12" height="3" style="left:47.6px;top:1.6px" viewBox="0 0 12 3"><path d="M0.2 2.1 L3.2 0.3 L3.2 2.1 Z" fill="#222"/><rect x="4.3" y="0.3" width="1.9" height="1.8" rx=".4" fill="#222" opacity=".85"/><rect x="7.4" y="0.2" width="3.7" height="1.9" rx=".7" fill="#222"/></svg>
<div class="a" style="left:4px;top:9.6px;width:5.2px;height:5.2px;background:none;border-radius:50%;border:.45px solid #3a300a"></div>
<div class="a" style="left:11.9px;top:9.6px;width:5.2px;height:5.2px;background:none;border-radius:50%;border:.45px solid #3a300a"></div>
<div class="a" style="left:52.4px;top:9.6px;width:5.2px;height:5.2px;background:none;border-radius:50%;border:.45px solid #3a300a"></div>
<div class="a" style="left:24.7px;top:9.3px;width:12.6px;height:12.6px;background:#171212;border-radius:50%"></div>
<div class="a" style="left:26.7px;top:11.9px;width:8.6px;height:8.6px;background:#8a6a6e;border-radius:50%"></div>
<div class="a t" style="left:24px;top:23.52px;width:13px;overflow:hidden;font-size:2.61px;line-height:1;color:#c8b070;font-weight:700;opacity:0.69">Swap Send R</div>
<div class="a" style="left:14px;top:28.8px;width:16.5px;height:3px;background:rgba(0,0,0,.15);border-radius:0.8px;border:.4px solid #4a3e10"></div>
<div class="a" style="left:31.5px;top:28.8px;width:11.5px;height:3px;background:rgba(0,0,0,.15);border-radius:0.8px;border:.4px solid #4a3e10"></div>
<div class="a" style="left:3.9px;top:35.2px;width:54px;height:22px;background:#0e0e0e;border-radius:2.5px"></div>
<div class="a t" style="left:20px;top:39.36px;width:13px;overflow:hidden;font-size:3.48px;line-height:1;color:#888;font-weight:700;opacity:0.92"> Stake Ea</div>
<div class="a t" style="left:36px;top:40.04px;width:6px;overflow:hidden;font-size:2.32px;line-height:1;color:#1b8a50;font-weight:700;opacity:1">Support</div>
<div class="a" style="left:26.5px;top:40px;width:9px;height:9px;background:#f4f4f4;border-radius:50%"></div>
<div class="a" style="left:30px;top:43.5px;width:2px;height:2px;background:#333;border-radius:50%"></div>
<div class="a" style="left:0px;top:52.7px;width:61.4px;height:70px;background:#1c1c1c;border-radius:4px 4px 0 0"></div>
<div class="a t" style="left:0px;top:55.8px;font-size:2.6px;color:#fff;line-height:1;font-weight:700;width:61.4px;text-align:center;">Networks</div>
<div class="a" style="left:4px;top:62.3px;width:53.5px;height:7px;background:#222;border-radius:1.5px"></div>
<div class="a" style="left:6.5px;top:63.9px;width:3.8px;height:3.8px;background:#f0f0f0;border-radius:0.8px"></div>
<div class="a t" style="left:12.5px;top:64.44px;width:27px;overflow:hidden;font-size:2.32px;line-height:1;color:#ddd;font-weight:700;opacity:0.98"> History Offer Listing De</div>
<div class="a" style="left:4px;top:70.75px;width:53.5px;height:7px;background:#222;border-radius:1.5px"></div>
<div class="a" style="left:6.5px;top:72.35px;width:3.8px;height:3.8px;background:#d8a93a;border-radius:0.8px"></div>
<div class="a t" style="left:12.5px;top:72.89px;width:27px;overflow:hidden;font-size:2.32px;line-height:1;color:#ddd;font-weight:700;opacity:0.98">sting Details Activity Cr</div>
<div class="a" style="left:4px;top:79.2px;width:53.5px;height:7px;background:#222;border-radius:1.5px"></div>
<div class="a" style="left:6.5px;top:80.8px;width:3.8px;height:3.8px;background:#f29a1e;border-radius:0.8px"></div>
<div class="a t" style="left:12.5px;top:81.34px;width:27px;overflow:hidden;font-size:2.32px;line-height:1;color:#ddd;font-weight:700;opacity:0.98">in Network Solana Wallet </div>
<div class="a" style="left:4px;top:87.65px;width:53.5px;height:7px;background:#222;border-radius:1.5px"></div>
<div class="a" style="left:6.5px;top:89.25px;width:3.8px;height:3.8px;background:#8a7bf2;border-radius:0.8px"></div>
<div class="a t" style="left:12.5px;top:89.79px;width:27px;overflow:hidden;font-size:2.32px;line-height:1;color:#ddd;font-weight:700;opacity:0.98"> Wallet Address Copy Bala</div>
<div class="a" style="left:4px;top:96.1px;width:53.5px;height:7px;background:#222;border-radius:1.5px"></div>
<div class="a" style="left:6.5px;top:97.7px;width:3.8px;height:3.8px;background:#e8e8e8;border-radius:0.8px"></div>
<div class="a t" style="left:12.5px;top:98.24px;width:27px;overflow:hidden;font-size:2.32px;line-height:1;color:#ddd;font-weight:700;opacity:0.98">opy Balance Market Price </div>
<div class="a" style="left:4.2px;top:106.8px;width:52.8px;height:7.9px;background:#f6cf45;border-radius:1.3px"></div>
<div class="a t" style="left:4.2px;top:109.5px;font-size:2.5px;color:#222;line-height:1;font-weight:700;width:52.8px;text-align:center">Add A Networks</div>
</div>
<div class="ph" style="left:899.9px;top:449.4px;width:61.4px;height:117.2px;background:#181818">
<div class="a t" style="left:4.9px;top:1.9px;font-size:2.5px;color:#fff;line-height:1;font-weight:700">9:41</div>
<svg width="12" height="3" style="left:47.6px;top:1.6px" viewBox="0 0 12 3"><path d="M0.2 2.1 L3.2 0.3 L3.2 2.1 Z" fill="#fff"/><rect x="4.3" y="0.3" width="1.9" height="1.8" rx=".4" fill="#fff" opacity=".85"/><rect x="7.4" y="0.2" width="3.7" height="1.9" rx=".7" fill="#fff"/></svg>
<div class="a t" style="left:0px;top:11.1px;font-size:2.9px;color:#fff;line-height:1;font-weight:700;width:61.4px;text-align:center;">Networks</div>
<div class="a" style="left:51.5px;top:9.4px;width:6px;height:6px;background:#262626;border-radius:50%"></div>
<svg width="3" height="3" style="left:53px;top:10.9px" viewBox="0 0 3 3"><path d="M0 0L3 3M3 0L0 3" stroke="#ddd" stroke-width=".5"/></svg>
<div class="a" style="left:4px;top:18.7px;width:53.5px;height:7.5px;background:#212121;border-radius:2px"></div>
<div class="a" style="left:4.6px;top:19.3px;width:24.4px;height:6.3px;background:#f6cf45;border-radius:1.8px"></div>
<div class="a t" style="left:12.5px;top:21.14px;width:8px;overflow:hidden;font-size:2.32px;line-height:1;color:#333;font-weight:700;opacity:1">t Price </div>
<div class="a t" style="left:36px;top:21.14px;width:14px;overflow:hidden;font-size:2.32px;line-height:1;color:#777;font-weight:700;opacity:0.8">p Send Receive</div>
<div class="a" style="left:4px;top:29.4px;width:53.5px;height:6.6px;background:#212121;border-radius:1.5px"></div>
<div class="a" style="left:6.4px;top:30.9px;width:3.6px;height:3.6px;background:#5b7cf0;border-radius:50%"></div>
<div class="a t" style="left:11.5px;top:31.34px;width:30px;overflow:hidden;font-size:2.32px;line-height:1;color:#ccc;font-weight:700;opacity:0.92">ake Earn Help Support Total</div>
<div class="a" style="left:51.7px;top:31.4px;width:2.6px;height:2.6px;background:none;border-radius:50%;border:.35px solid #666"></div>
<div class="a" style="left:4px;top:37.5px;width:53.5px;height:6.6px;background:#212121;border-radius:1.5px"></div>
<div class="a" style="left:6.4px;top:39px;width:3.6px;height:3.6px;background:#2a8af0;border-radius:50%"></div>
<div class="a t" style="left:11.5px;top:39.44px;width:30px;overflow:hidden;font-size:2.32px;line-height:1;color:#ccc;font-weight:700;opacity:0.92">port Total Avg History Offe</div>
<div class="a" style="left:51.7px;top:39.5px;width:2.6px;height:2.6px;background:none;border-radius:50%;border:.35px solid #666"></div>
<div class="a" style="left:4px;top:45.6px;width:53.5px;height:6.6px;background:#212121;border-radius:1.5px"></div>
<div class="a" style="left:6.4px;top:47.1px;width:3.6px;height:3.6px;background:#111;border-radius:50%"></div>
<div class="a t" style="left:11.5px;top:47.54px;width:30px;overflow:hidden;font-size:2.32px;line-height:1;color:#ccc;font-weight:700;opacity:0.92">story Offer Listing Details</div>
<div class="a" style="left:51.7px;top:47.6px;width:2.6px;height:2.6px;background:none;border-radius:50%;border:.35px solid #666"></div>
<div class="a" style="left:4px;top:53.7px;width:53.5px;height:6.6px;background:#212121;border-radius:1.5px"></div>
<div class="a" style="left:6.4px;top:55.2px;width:3.6px;height:3.6px;background:#3a3a5a;border-radius:50%"></div>
<div class="a t" style="left:11.5px;top:55.64px;width:30px;overflow:hidden;font-size:2.32px;line-height:1;color:#ccc;font-weight:700;opacity:0.92">ng Details Activity Creator</div>
<div class="a" style="left:51.7px;top:55.7px;width:2.6px;height:2.6px;background:none;border-radius:50%;border:.35px solid #666"></div>
</div>
<div class="ph" style="left:978.05px;top:449.4px;width:61.4px;height:117.2px;background:#181818">
<div class="a t" style="left:4.9px;top:1.9px;font-size:2.5px;color:#fff;line-height:1;font-weight:700">9:41</div>
<svg width="12" height="3" style="left:47.6px;top:1.6px" viewBox="0 0 12 3"><path d="M0.2 2.1 L3.2 0.3 L3.2 2.1 Z" fill="#fff"/><rect x="4.3" y="0.3" width="1.9" height="1.8" rx=".4" fill="#fff" opacity=".85"/><rect x="7.4" y="0.2" width="3.7" height="1.9" rx=".7" fill="#fff"/></svg>
<div class="a t" style="left:0px;top:11.1px;font-size:2.9px;color:#fff;line-height:1;font-weight:700;width:61.4px;text-align:center;">Networks</div>
<div class="a" style="left:51.5px;top:9.4px;width:6px;height:6px;background:#262626;border-radius:50%"></div>
<svg width="3" height="3" style="left:53px;top:10.9px" viewBox="0 0 3 3"><path d="M0 0L3 3M3 0L0 3" stroke="#ddd" stroke-width=".5"/></svg>
<div class="a" style="left:4px;top:18.7px;width:53.5px;height:7.5px;background:#212121;border-radius:2px"></div>
<div class="a" style="left:30.5px;top:19.3px;width:26.4px;height:6.3px;background:#f6cf45;border-radius:1.8px"></div>
<div class="a t" style="left:35px;top:21.14px;width:17px;overflow:hidden;font-size:2.32px;line-height:1;color:#333;font-weight:700;opacity:1">Network Solana W</div>
<div class="a t" style="left:12px;top:21.14px;width:8px;overflow:hidden;font-size:2.32px;line-height:1;color:#777;font-weight:700;opacity:0.8">llet Add</div>
<div class="a" style="left:3.6px;top:28.9px;width:54.4px;height:7.5px;background:#212121;border-radius:1.5px"></div>
<div class="a t" style="left:6.5px;top:31.34px;width:15px;overflow:hidden;font-size:2.32px;line-height:1;color:#777;font-weight:700;opacity:0.8"> Balance Marke</div>
<div class="a" style="left:3.6px;top:37.93px;width:54.4px;height:7.5px;background:#212121;border-radius:1.5px"></div>
<div class="a t" style="left:6.5px;top:40.37px;width:8px;overflow:hidden;font-size:2.32px;line-height:1;color:#777;font-weight:700;opacity:0.8">rice Tok</div>
<div class="a" style="left:3.6px;top:46.96px;width:54.4px;height:7.5px;background:#212121;border-radius:1.5px"></div>
<div class="a t" style="left:6.5px;top:49.4px;width:9px;overflow:hidden;font-size:2.32px;line-height:1;color:#777;font-weight:700;opacity:0.8">end Recei</div>
<div class="a" style="left:3.6px;top:55.99px;width:54.4px;height:7.5px;background:#212121;border-radius:1.5px"></div>
<div class="a t" style="left:6.5px;top:58.43px;width:7px;overflow:hidden;font-size:2.32px;line-height:1;color:#777;font-weight:700;opacity:0.8"> Earn He</div>
<div class="a" style="left:3.6px;top:65.02px;width:54.4px;height:7.5px;background:#212121;border-radius:1.5px"></div>
<div class="a t" style="left:6.5px;top:67.46px;width:20px;overflow:hidden;font-size:2.32px;line-height:1;color:#777;font-weight:700;opacity:0.8">t Total Avg History</div>
<div class="a" style="left:4.6px;top:101.3px;width:52px;height:7.5px;background:#f6cf45;border-radius:1.3px"></div>
<div class="a t" style="left:4.6px;top:103.8px;font-size:2.5px;color:#222;line-height:1;font-weight:700;width:52px;text-align:center">Add</div>
</div>
<div class="ph" style="left:1056.2px;top:449.4px;width:61.4px;height:117.2px;background:#181818">
<div class="a t" style="left:4.9px;top:1.9px;font-size:2.5px;color:#fff;line-height:1;font-weight:700">9:41</div>
<svg width="12" height="3" style="left:47.6px;top:1.6px" viewBox="0 0 12 3"><path d="M0.2 2.1 L3.2 0.3 L3.2 2.1 Z" fill="#fff"/><rect x="4.3" y="0.3" width="1.9" height="1.8" rx=".4" fill="#fff" opacity=".85"/><rect x="7.4" y="0.2" width="3.7" height="1.9" rx=".7" fill="#fff"/></svg>
<div class="a t" style="left:0px;top:11.1px;font-size:2.9px;color:#fff;line-height:1;font-weight:700;width:61.4px;text-align:center;">Networks</div>
<div class="a" style="left:51.5px;top:9.4px;width:6px;height:6px;background:#262626;border-radius:50%"></div>
<svg width="3" height="3" style="left:53px;top:10.9px" viewBox="0 0 3 3"><path d="M0 0L3 3M3 0L0 3" stroke="#ddd" stroke-width=".5"/></svg>
<div class="a" style="left:4px;top:18.7px;width:53.5px;height:7.5px;background:#212121;border-radius:2px"></div>
<div class="a" style="left:30.5px;top:19.3px;width:26.4px;height:6.3px;background:#f6cf45;border-radius:1.8px"></div>
<div class="a t" style="left:35px;top:21.14px;width:17px;overflow:hidden;font-size:2.32px;line-height:1;color:#333;font-weight:700;opacity:1">ry Offer Listing</div>
<div class="a t" style="left:12px;top:21.14px;width:8px;overflow:hidden;font-size:2.32px;line-height:1;color:#777;font-weight:700;opacity:0.8">Ethereum</div>
<div class="a" style="left:3.6px;top:30.5px;width:54.4px;height:7.5px;background:#212121;border-radius:1.5px"></div>
<div class="a t" style="left:6.5px;top:32.94px;width:13px;overflow:hidden;font-size:2.32px;line-height:1;color:#ddd;font-weight:700;opacity:1">work Solana W</div>
<div class="a" style="left:3.6px;top:39.6px;width:54.4px;height:7.5px;background:#212121;border-radius:1.5px"></div>
<div class="a t" style="left:6.5px;top:42.04px;width:26px;overflow:hidden;font-size:2.32px;line-height:1;color:#ddd;font-weight:700;opacity:1">t Address Copy Balance M</div>
<div class="a" style="left:3.6px;top:48.7px;width:54.4px;height:7.5px;background:#212121;border-radius:1.5px"></div>
<div class="a t" style="left:6.5px;top:51.14px;width:9px;overflow:hidden;font-size:2.32px;line-height:1;color:#ddd;font-weight:700;opacity:1">lance Mar</div>
<div class="a" style="left:3.6px;top:57.8px;width:54.4px;height:7.5px;background:#212121;border-radius:1.5px"></div>
<div class="a t" style="left:6.5px;top:60.24px;width:10px;overflow:hidden;font-size:2.32px;line-height:1;color:#ddd;font-weight:700;opacity:1">e Token Sw</div>
<div class="a" style="left:3.6px;top:66.9px;width:54.4px;height:7.5px;background:#212121;border-radius:1.5px"></div>
<div class="a t" style="left:6.5px;top:69.34px;width:26px;overflow:hidden;font-size:2.32px;line-height:1;color:#ddd;font-weight:700;opacity:1"> Receive Stake Earn Help</div>
<div class="a" style="left:4.6px;top:101.3px;width:52px;height:7.5px;background:#f6cf45;border-radius:1.3px"></div>
<div class="a t" style="left:4.6px;top:103.8px;font-size:2.5px;color:#222;line-height:1;font-weight:700;width:52px;text-align:center">Add</div>
</div>
<div class="a t" style="left:587.65px;top:623.51px;font-size:11.8px;color:#a4a4a4;line-height:1;letter-spacing:.85px;-webkit-text-stroke:.3px #a4a4a4">15. NFTs</div>
<div class="a t" style="left:665.8px;top:623.51px;font-size:11.8px;color:#a4a4a4;line-height:1;letter-spacing:.85px;-webkit-text-stroke:.3px #a4a4a4">16. NF...</div>
<div class="a t" style="left:743.95px;top:623.51px;font-size:11.8px;color:#a4a4a4;line-height:1;letter-spacing:.85px;-webkit-text-stroke:.3px #a4a4a4">17. NF...</div>
<div class="a t" style="left:822.1px;top:623.51px;font-size:11.8px;color:#a4a4a4;line-height:1;letter-spacing:.85px;-webkit-text-stroke:.3px #a4a4a4">18. NF...</div>
<div class="a t" style="left:900.25px;top:623.51px;font-size:11.8px;color:#a4a4a4;line-height:1;letter-spacing:.85px;-webkit-text-stroke:.3px #a4a4a4">19. NF...</div>
<div class="a t" style="left:978.4px;top:623.51px;font-size:11.8px;color:#a4a4a4;line-height:1;letter-spacing:.85px;-webkit-text-stroke:.3px #a4a4a4">20. NF...</div>
<div class="a t" style="left:1056.55px;top:623.51px;font-size:11.8px;color:#a4a4a4;line-height:1;letter-spacing:.85px;-webkit-text-stroke:.3px #a4a4a4">21. NF...</div>
<div class="a t" style="left:1134.7px;top:623.51px;font-size:11.8px;color:#a4a4a4;line-height:1;letter-spacing:.85px;-webkit-text-stroke:.3px #a4a4a4">22. Ma...</div>
<div class="ph" style="left:587.3px;top:638px;width:61.4px;height:154px;background:#181818">
<div class="a t" style="left:4.9px;top:1.9px;font-size:2.5px;color:#fff;line-height:1;font-weight:700">9:41</div>
<svg width="12" height="3" style="left:47.6px;top:1.6px" viewBox="0 0 12 3"><path d="M0.2 2.1 L3.2 0.3 L3.2 2.1 Z" fill="#fff"/><rect x="4.3" y="0.3" width="1.9" height="1.8" rx=".4" fill="#fff" opacity=".85"/><rect x="7.4" y="0.2" width="3.7" height="1.9" rx=".7" fill="#fff"/></svg>
<div class="a" style="left:5.2px;top:10.4px;width:4.4px;height:4.4px;background:#eee;border-radius:50%"></div>
<div class="a t" style="left:0px;top:11.2px;font-size:2.9px;color:#fff;line-height:1;font-weight:700;width:61.4px;text-align:center;">NFTs</div>
<div class="a" style="left:52.3px;top:10.4px;width:4.4px;height:4.4px;background:#eee;border-radius:50%"></div>
<div class="a" style="left:4px;top:19px;width:53px;height:7px;background:#262626;border-radius:2px"></div>
<div class="a" style="left:6.7px;top:21.2px;width:2.6px;height:2.6px;background:none;border-radius:50%;border:.35px solid #888"></div>
<div class="a t" style="left:10.5px;top:21.36px;width:7px;overflow:hidden;font-size:2.03px;line-height:1;color:#777;font-weight:700;opacity:0.8">rn Help </div>
<div class="a" style="left:4px;top:28px;width:15.5px;height:4.6px;background:#232323;border-radius:2.3px"></div>
<div class="a t" style="left:8px;top:29.06px;width:7.5px;overflow:hidden;font-size:2.03px;line-height:1;color:#888;font-weight:700;opacity:0.69">otal Avg </div>
<div class="a" style="left:21.5px;top:28px;width:15.5px;height:4.6px;background:#232323;border-radius:2.3px"></div>
<div class="a t" style="left:25.5px;top:29.06px;width:7.5px;overflow:hidden;font-size:2.03px;line-height:1;color:#888;font-weight:700;opacity:0.69">Offer Lis</div>
<div class="a" style="left:39px;top:28px;width:17.5px;height:4.6px;background:#232323;border-radius:2.3px;border:.45px solid #b8962e"></div>
<div class="a t" style="left:43px;top:29.06px;width:9.5px;overflow:hidden;font-size:2.03px;line-height:1;color:#888;font-weight:700;opacity:0.69">ereum Main </div>
<div class="a t" style="left:4.5px;top:35.34px;width:13px;overflow:hidden;font-size:2.32px;line-height:1;color:#eee;font-weight:700;opacity:1">k Solana Wall</div>
<div class="a t" style="left:50px;top:35.34px;width:6px;overflow:hidden;font-size:2.32px;line-height:1;color:#d8ae35;font-weight:700;opacity:1">ddress </div>
<div class="a" style="left:5.4px;top:40px;width:10px;height:9.4px;background:#27a0d8;border-radius:2px"></div>
<div class="a" style="left:7.2px;top:42.8px;width:6.4px;height:6.4px;background:#f0c09a;border-radius:50%"></div>
<div class="a" style="left:13px;top:47.3px;width:2.4px;height:2.4px;background:#f0c33a;border-radius:50%"></div>
<div class="a t" style="left:5.4px;top:50.16px;width:10px;overflow:hidden;font-size:2.03px;line-height:1;color:#ccc;font-weight:700;opacity:0.92">ce Market P</div>
<div class="a t" style="left:6.9px;top:52.13px;width:7px;overflow:hidden;font-size:2px;line-height:1;color:#777;font-weight:700;opacity:0.8">oken Swap</div>
<div class="a" style="left:21.7px;top:40px;width:10px;height:9.4px;background:#c040e0;border-radius:2px"></div>
<div class="a" style="left:23.5px;top:42.8px;width:6.4px;height:6.4px;background:#60d0a0;border-radius:50%"></div>
<div class="a" style="left:29.3px;top:47.3px;width:2.4px;height:2.4px;background:#f0c33a;border-radius:50%"></div>
<div class="a t" style="left:21.7px;top:50.16px;width:10px;overflow:hidden;font-size:2.03px;line-height:1;color:#ccc;font-weight:700;opacity:0.92">ceive Stake</div>
<div class="a t" style="left:23.2px;top:52.13px;width:7px;overflow:hidden;font-size:2px;line-height:1;color:#777;font-weight:700;opacity:0.8">Help Supp</div>
<div class="a" style="left:38px;top:40px;width:10px;height:9.4px;background:#7030c0;border-radius:2px"></div>
<div class="a" style="left:39.8px;top:42.8px;width:6.4px;height:6.4px;background:#f0c040;border-radius:50%"></div>
<div class="a" style="left:45.6px;top:47.3px;width:2.4px;height:2.4px;background:#f0c33a;border-radius:50%"></div>
<div class="a t" style="left:38px;top:50.16px;width:10px;overflow:hidden;font-size:2.03px;line-height:1;color:#ccc;font-weight:700;opacity:0.92">l Avg Histo</div>
<div class="a t" style="left:39.5px;top:52.13px;width:7px;overflow:hidden;font-size:2px;line-height:1;color:#777;font-weight:700;opacity:0.8">er Listin</div>
<div class="a" style="left:54.3px;top:40px;width:10px;height:9.4px;background:#e03a2a;border-radius:2px"></div>
<div class="a" style="left:56.1px;top:42.8px;width:6.4px;height:6.4px;background:#333;border-radius:50%"></div>
<div class="a" style="left:61.9px;top:47.3px;width:2.4px;height:2.4px;background:#f0c33a;border-radius:50%"></div>
<div class="a t" style="left:54.3px;top:50.16px;width:10px;overflow:hidden;font-size:2.03px;line-height:1;color:#ccc;font-weight:700;opacity:0.92">um Main Net</div>
<div class="a t" style="left:55.8px;top:52.13px;width:7px;overflow:hidden;font-size:2px;line-height:1;color:#777;font-weight:700;opacity:0.8">olana Wal</div>
<div class="a t" style="left:4.5px;top:58.34px;width:13px;overflow:hidden;font-size:2.32px;line-height:1;color:#eee;font-weight:700;opacity:1">ess Copy Bala</div>
<div class="a t" style="left:50px;top:58.34px;width:6px;overflow:hidden;font-size:2.32px;line-height:1;color:#d8ae35;font-weight:700;opacity:1">Market </div>
<div class="a" style="left:4px;top:63.6px;width:23.4px;height:38px;background:#212121;border-radius:1.5px"></div>
<div class="a" style="left:4.6px;top:64.6px;width:22.2px;height:19.8px;background:#f0b25e;border-radius:1.5px"></div>
<div class="a t" style="left:5.5px;top:85.06px;width:12px;overflow:hidden;font-size:2.03px;line-height:1;color:#ddd;font-weight:700;opacity:1">n Swap Send R</div>
<div class="a t" style="left:5.5px;top:86.93px;width:8px;overflow:hidden;font-size:2px;line-height:1;color:#888;font-weight:700;opacity:0.8">ve Stake E</div>
<div class="a" style="left:5.5px;top:89.6px;width:20.4px;height:2.8px;background:#2a2a2a;border-radius:0.8px"></div>
<div class="a t" style="left:9px;top:89.83px;width:13.4px;overflow:hidden;font-size:2px;line-height:1;color:#d8ae35;font-weight:700;opacity:0.92">p Support Total</div>
<div class="a t" style="left:5.5px;top:93.23px;width:5px;overflow:hidden;font-size:2px;line-height:1;color:#aaa;font-weight:700;opacity:0.8">vg Hist</div>
<div class="a" style="left:22.4px;top:93.8px;width:1.3px;height:1.3px;background:#e03a3a;border-radius:0.3px"></div>
<div class="a" style="left:31.5px;top:63.6px;width:23.4px;height:38px;background:#212121;border-radius:1.5px"></div>
<div class="a" style="left:32.1px;top:64.6px;width:22.2px;height:19.8px;background:#f5c100;border-radius:1.5px"></div>
<div class="a t" style="left:33px;top:85.06px;width:12px;overflow:hidden;font-size:2.03px;line-height:1;color:#ddd;font-weight:700;opacity:1">Listing Detai</div>
<div class="a t" style="left:33px;top:86.93px;width:8px;overflow:hidden;font-size:2px;line-height:1;color:#888;font-weight:700;opacity:0.8">Main Netwo</div>
<div class="a" style="left:33px;top:89.6px;width:20.4px;height:2.8px;background:#2a2a2a;border-radius:0.8px"></div>
<div class="a t" style="left:36.5px;top:89.83px;width:13.4px;overflow:hidden;font-size:2px;line-height:1;color:#d8ae35;font-weight:700;opacity:0.92">na Wallet Addre</div>
<div class="a t" style="left:33px;top:93.23px;width:5px;overflow:hidden;font-size:2px;line-height:1;color:#aaa;font-weight:700;opacity:0.8"> Copy B</div>
<div class="a" style="left:49.9px;top:93.8px;width:1.3px;height:1.3px;background:#e03a3a;border-radius:0.3px"></div>
<div class="a" style="left:58.7px;top:64.6px;width:5px;height:19.8px;background:#8a50e8;border-radius:1.5px"></div>
<svg width="23" height="20" style="left:4.6px;top:64.6px" viewBox="0 0 23 20"><path d="M8 1 V5 M15 1 V5" stroke="#5a8ab0" stroke-width="1"/><rect x="5" y="4.5" width="13" height="8" rx="1" fill="#d8742a" stroke="#333" stroke-width=".4"/><rect x="6" y="7" width="11" height="2.6" rx="1" fill="#7ab0d8" stroke="#333" stroke-width=".4"/><rect x="7" y="12.5" width="9" height="7.5" fill="#e8d4b0" stroke="#333" stroke-width=".4"/><circle cx="11.5" cy="16" r="1.6" fill="none" stroke="#8a6a3a" stroke-width=".5"/></svg>
<svg width="23" height="20" style="left:32.1px;top:64.6px" viewBox="0 0 23 20"><path d="M7 8 L6 0.5 L9.5 6 Z M16 8 L17 0.5 L13.5 6 Z" fill="#9a9a9a" stroke="#333" stroke-width=".4"/><ellipse cx="11.5" cy="10" rx="5.5" ry="4.5" fill="#a8a8a8" stroke="#333" stroke-width=".4"/><rect x="5.5" y="8" width="12" height="2.6" rx=".8" fill="#151515"/><path d="M4 20 L6 15 L17 15 L19 20 Z" fill="#333"/></svg>
<div class="a t" style="left:4.5px;top:102.54px;width:9px;overflow:hidden;font-size:2.32px;line-height:1;color:#eee;font-weight:700;opacity:1">ket Price</div>
<div class="a t" style="left:50px;top:102.54px;width:6px;overflow:hidden;font-size:2.32px;line-height:1;color:#d8ae35;font-weight:700;opacity:1">wap Sen</div>
<div class="a" style="left:4px;top:107.6px;width:23.4px;height:38px;background:#212121;border-radius:1.5px"></div>
<div class="a" style="left:4.6px;top:108.6px;width:22.2px;height:19.8px;background:#84d6b6;border-radius:1.5px"></div>
<div class="a t" style="left:5.5px;top:129.06px;width:12px;overflow:hidden;font-size:2.03px;line-height:1;color:#ddd;font-weight:700;opacity:1">Stake Earn He</div>
<div class="a t" style="left:5.5px;top:130.93px;width:8px;overflow:hidden;font-size:2px;line-height:1;color:#888;font-weight:700;opacity:0.8">upport Tot</div>
<div class="a" style="left:5.5px;top:133.6px;width:20.4px;height:2.8px;background:#2a2a2a;border-radius:0.8px"></div>
<div class="a t" style="left:9px;top:133.83px;width:13.4px;overflow:hidden;font-size:2px;line-height:1;color:#d8ae35;font-weight:700;opacity:0.92">History Offer L</div>
<div class="a t" style="left:5.5px;top:137.23px;width:5px;overflow:hidden;font-size:2px;line-height:1;color:#aaa;font-weight:700;opacity:0.8">ting De</div>
<div class="a" style="left:22.4px;top:137.8px;width:1.3px;height:1.3px;background:#e03a3a;border-radius:0.3px"></div>
<div class="a" style="left:31.5px;top:107.6px;width:23.4px;height:38px;background:#212121;border-radius:1.5px"></div>
<div class="a" style="left:32.1px;top:108.6px;width:22.2px;height:19.8px;background:#8cc2e2;border-radius:1.5px"></div>
<div class="a t" style="left:33px;top:129.06px;width:12px;overflow:hidden;font-size:2.03px;line-height:1;color:#ddd;font-weight:700;opacity:1">n Network Sol</div>
<div class="a t" style="left:33px;top:130.93px;width:8px;overflow:hidden;font-size:2px;line-height:1;color:#888;font-weight:700;opacity:0.8">Wallet Add</div>
<div class="a" style="left:33px;top:133.6px;width:20.4px;height:2.8px;background:#2a2a2a;border-radius:0.8px"></div>
<div class="a t" style="left:36.5px;top:133.83px;width:13.4px;overflow:hidden;font-size:2px;line-height:1;color:#d8ae35;font-weight:700;opacity:0.92">py Balance Mark</div>
<div class="a t" style="left:33px;top:137.23px;width:5px;overflow:hidden;font-size:2px;line-height:1;color:#aaa;font-weight:700;opacity:0.8"> Price </div>
<div class="a" style="left:49.9px;top:137.8px;width:1.3px;height:1.3px;background:#e03a3a;border-radius:0.3px"></div>
<div class="a" style="left:58.7px;top:108.6px;width:5px;height:19.8px;background:#f09a30;border-radius:1.5px"></div>
<svg width="23" height="20" style="left:4.6px;top:108.6px" viewBox="0 0 23 20"><circle cx="7.5" cy="5" r="2" fill="#c9955a" stroke="#333" stroke-width=".4"/><circle cx="15.5" cy="5" r="2" fill="#c9955a" stroke="#333" stroke-width=".4"/><ellipse cx="11.5" cy="9" rx="5" ry="5" fill="#d8a868" stroke="#333" stroke-width=".4"/><rect x="7" y="7.5" width="9" height="1.6" fill="#6a8a6a"/><path d="M3 20 L5.5 14.5 L17.5 14.5 L20 20 Z" fill="#5a3a3a"/><path d="M6 17 H17" stroke="#c04040" stroke-width=".6"/></svg>
<svg width="23" height="20" style="left:32.1px;top:108.6px" viewBox="0 0 23 20"><path d="M5.5 6.5 Q11.5 0 17.5 6.5 Z" fill="#e8b820" stroke="#333" stroke-width=".4"/><ellipse cx="11.5" cy="10" rx="5" ry="4.8" fill="#d8c8a8" stroke="#333" stroke-width=".4"/><rect x="7" y="8.5" width="9" height="2" rx=".5" fill="#333"/><rect x="10" y="12" width="4" height="2.5" fill="#5aa0c8"/><path d="M3 20 L5.5 15 L17.5 15 L20 20 Z" fill="#b8b8b8"/></svg>
<div class="a" style="left:0px;top:143px;width:61.4px;height:11px;background:#171717"></div>
<svg width="5" height="5" style="left:4px;top:144.5px" viewBox="0 0 5 5"><circle cx="2.5" cy="2.5" r="1.9" fill="none" stroke="#666" stroke-width=".5"/></svg>
<div class="a t" style="left:4px;top:149.43px;width:5px;overflow:hidden;font-size:2px;line-height:1;color:#777;font-weight:700;opacity:0.69"> Send R</div>
<div class="a" style="left:16.6px;top:145px;width:4px;height:4px;background:#eee;border-radius:50%"></div>
<div class="a t" style="left:16.1px;top:149.43px;width:5px;overflow:hidden;font-size:2px;line-height:1;color:#ddd;font-weight:700;opacity:0.92">ke Earn</div>
<svg width="5" height="5" style="left:28.2px;top:144.5px" viewBox="0 0 5 5"><circle cx="2.5" cy="2.5" r="1.9" fill="none" stroke="#666" stroke-width=".5"/></svg>
<div class="a t" style="left:28.2px;top:149.43px;width:5px;overflow:hidden;font-size:2px;line-height:1;color:#777;font-weight:700;opacity:0.69">ort Tot</div>
<svg width="5" height="5" style="left:40.3px;top:144.5px" viewBox="0 0 5 5"><circle cx="2.5" cy="2.5" r="1.9" fill="none" stroke="#666" stroke-width=".5"/></svg>
<div class="a t" style="left:40.3px;top:149.43px;width:5px;overflow:hidden;font-size:2px;line-height:1;color:#777;font-weight:700;opacity:0.69">tory Of</div>
<svg width="5" height="5" style="left:52.4px;top:144.5px" viewBox="0 0 5 5"><circle cx="2.5" cy="2.5" r="1.9" fill="none" stroke="#666" stroke-width=".5"/></svg>
<div class="a t" style="left:52.4px;top:149.43px;width:5px;overflow:hidden;font-size:2px;line-height:1;color:#777;font-weight:700;opacity:0.69">g Detai</div>
</div>
<div class="ph" style="left:665.45px;top:638px;width:61.4px;height:170px;background:#181818">
<div class="a t" style="left:4.9px;top:1.9px;font-size:2.5px;color:#fff;line-height:1;font-weight:700">9:41</div>
<svg width="12" height="3" style="left:47.6px;top:1.6px" viewBox="0 0 12 3"><path d="M0.2 2.1 L3.2 0.3 L3.2 2.1 Z" fill="#fff"/><rect x="4.3" y="0.3" width="1.9" height="1.8" rx=".4" fill="#fff" opacity=".85"/><rect x="7.4" y="0.2" width="3.7" height="1.9" rx=".7" fill="#fff"/></svg>
<div class="a" style="left:5.2px;top:10.4px;width:4.4px;height:4.4px;background:#eee;border-radius:50%"></div>
<div class="a t" style="left:0px;top:11.2px;font-size:2.9px;color:#fff;line-height:1;font-weight:700;width:61.4px;text-align:center;">NFT Collection</div>
<div class="a" style="left:52.3px;top:10.4px;width:4.4px;height:4.4px;background:#eee;border-radius:50%"></div>
<div class="a" style="left:2.5px;top:18.6px;width:56px;height:24.7px;border-radius:1.5px;background:radial-gradient(ellipse at 50% 55%,#5a4a5a 0,#3a3040 35%,#262a22 70%,#1a2016 100%)"></div>
<div class="a" style="left:4px;top:21px;width:6px;height:14px;background:#2e3a22;border-radius:0.6px;opacity:.8"></div>
<div class="a" style="left:48px;top:20px;width:9px;height:18px;background:#2a3a20;border-radius:0.6px;opacity:.8"></div>
<div class="a" style="left:12px;top:26px;width:5px;height:2px;background:#8a60a0;border-radius:0.6px;opacity:.8"></div>
<div class="a" style="left:20px;top:24px;width:4px;height:1.5px;background:#c080c0;border-radius:0.6px;opacity:.8"></div>
<div class="a" style="left:34px;top:27px;width:3px;height:1.5px;background:#6aa0d0;border-radius:0.6px;opacity:.8"></div>
<div class="a" style="left:40px;top:31px;width:5px;height:2px;background:#d09060;border-radius:0.6px;opacity:.8"></div>
<div class="a" style="left:26px;top:33px;width:6px;height:2px;background:#b0a0c0;border-radius:0.6px;opacity:.8"></div>
<div class="a" style="left:16px;top:36px;width:5px;height:1.5px;background:#40503a;border-radius:0.6px;opacity:.8"></div>
<div class="a" style="left:44px;top:36px;width:6px;height:2px;background:#506a40;border-radius:0.6px;opacity:.8"></div>
<div class="a" style="left:30px;top:22px;width:8px;height:3px;background:#4a4050;border-radius:0.6px;opacity:.8"></div>
<div class="a" style="left:21.5px;top:34.5px;width:17.6px;height:17.6px;background:#f0f0f0;border-radius:50%"></div>
<div class="a" style="left:22.5px;top:35.5px;width:15.6px;height:15.6px;background:#cfcfcf;border-radius:50%"></div>
<div class="a" style="left:26.5px;top:37.5px;width:7.5px;height:3px;background:#f2d24a;border-radius:1.5px"></div>
<div class="a" style="left:27.5px;top:40.5px;width:6px;height:5px;background:#efe6d0;border-radius:1.2px"></div>
<div class="a" style="left:28px;top:45.5px;width:5px;height:3.5px;background:#e8e0c8;border-radius:0.8px"></div>
<div class="a t" style="left:0px;top:53.8px;font-size:3px;color:#fff;line-height:1;font-weight:700;width:61.4px;text-align:center;">Doodle NFT</div>
<div class="a t" style="left:5.7px;top:57.96px;width:50px;overflow:hidden;font-size:2.03px;line-height:1;color:#999;font-weight:700;opacity:0.8">etwork Solana Wallet Address Copy Balance Market Pr</div>
<div class="a t" style="left:7.7px;top:60.06px;width:46px;overflow:hidden;font-size:2.03px;line-height:1;color:#999;font-weight:700;opacity:0.8">let Address Copy Balance Market Price Token Swa</div>
<div class="a t" style="left:6.7px;top:62.16px;width:48px;overflow:hidden;font-size:2.03px;line-height:1;color:#999;font-weight:700;opacity:0.8">Balance Market Price Token Swap Send Receive Stak</div>
<div class="a t" style="left:15.7px;top:64.26px;width:30px;overflow:hidden;font-size:2.03px;line-height:1;color:#999;font-weight:700;opacity:0.8">ice Token Swap Send Receive Sta</div>
<div class="a" style="left:3px;top:72.2px;width:55px;height:13.4px;background:#232323;border-radius:2px"></div>
<div class="a" style="left:7.2px;top:74.5px;width:2.6px;height:2px;background:#ddd;border-radius:0.5px"></div>
<div class="a t" style="left:6.5px;top:77.54px;width:4px;overflow:hidden;font-size:2.32px;line-height:1;color:#fff;font-weight:700;opacity:1">nd Re</div>
<div class="a t" style="left:6px;top:80.43px;width:5px;overflow:hidden;font-size:2px;line-height:1;color:#888;font-weight:700;opacity:0.8">Earn He</div>
<div class="a" style="left:22px;top:74.5px;width:2.6px;height:2px;background:#ddd;border-radius:0.5px"></div>
<div class="a t" style="left:21.3px;top:77.54px;width:4px;overflow:hidden;font-size:2.32px;line-height:1;color:#fff;font-weight:700;opacity:1"> Tota</div>
<div class="a t" style="left:20.8px;top:80.43px;width:5px;overflow:hidden;font-size:2px;line-height:1;color:#888;font-weight:700;opacity:0.8">y Offer</div>
<div class="a" style="left:36.8px;top:74.5px;width:2.6px;height:2px;background:#ddd;border-radius:0.5px"></div>
<div class="a t" style="left:36.1px;top:77.54px;width:4px;overflow:hidden;font-size:2.32px;line-height:1;color:#fff;font-weight:700;opacity:1">there</div>
<div class="a t" style="left:35.6px;top:80.43px;width:5px;overflow:hidden;font-size:2px;line-height:1;color:#888;font-weight:700;opacity:0.8">ork Sol</div>
<div class="a" style="left:51.6px;top:74.5px;width:2.6px;height:2px;background:#ddd;border-radius:0.5px"></div>
<div class="a t" style="left:50.9px;top:77.54px;width:4px;overflow:hidden;font-size:2.32px;line-height:1;color:#fff;font-weight:700;opacity:1"> Addr</div>
<div class="a t" style="left:50.4px;top:80.43px;width:5px;overflow:hidden;font-size:2px;line-height:1;color:#888;font-weight:700;opacity:0.8">ance Ma</div>
<div class="a t" style="left:11px;top:88.84px;width:7px;overflow:hidden;font-size:2.32px;line-height:1;color:#999;font-weight:700;opacity:0.8"> Token S</div>
<div class="a t" style="left:39px;top:88.84px;width:9px;overflow:hidden;font-size:2.32px;line-height:1;color:#d8ae35;font-weight:700;opacity:1">Receive S</div>
<div class="a" style="left:3px;top:96.2px;width:27px;height:0.5px;background:#333"></div>
<div class="a" style="left:30px;top:96px;width:28px;height:0.9px;background:#d8ae35"></div>
<div class="a" style="left:4.5px;top:99px;width:2px;height:2px;background:#f0c33a;border-radius:50%"></div>
<div class="a t" style="left:7.5px;top:98.76px;width:20px;overflow:hidden;font-size:2.03px;line-height:1;color:#aaa;font-weight:700;opacity:0.8">n Help Support Total </div>
<div class="a" style="left:1.8px;top:97.5px;width:59px;height:45px;background:#1c1c1c;border-radius:2px"></div>
<svg width="61.4" height="170" style="left:0;top:0" viewBox="0 0 61.4 170"><defs><linearGradient id="cf" x1="0" y1="0" x2="0" y2="1"><stop offset="0" stop-color="#d8ae35" stop-opacity=".3"/><stop offset="1" stop-color="#d8ae35" stop-opacity="0"/></linearGradient></defs><path d="M3.05 105.25 L6.5 109 L10.85 116.3 L14.75 114.35 L19.3 120.85 L26.5 113.05 L33 124.1 L38.2 122.15 L43.4 125.4 L50.5 128.65 L58.35 116.3 L58.35 136 L3.05 136 Z" fill="url(#cf)"/><path d="M3.05 105.25 L6.5 109 L10.85 116.3 L14.75 114.35 L19.3 120.85 L26.5 113.05 L33 124.1 L38.2 122.15 L43.4 125.4 L50.5 128.65 L58.35 116.3" fill="none" stroke="#d9b030" stroke-width=".75" stroke-linejoin="round"/><circle cx="26.5" cy="113.05" r="1.5" fill="#f5cf3a"/></svg>
<div class="a" style="left:29.1px;top:110.45px;width:18.2px;height:7.2px;background:#151515;border-radius:1px"></div>
<div class="a t" style="left:31px;top:111.33px;width:5px;overflow:hidden;font-size:2px;line-height:1;color:#ccc;font-weight:700;opacity:0.92">tal Avg</div>
<div class="a t" style="left:31px;top:113.96px;width:13px;overflow:hidden;font-size:2.03px;line-height:1;color:#eee;font-weight:700;opacity:1">ffer Listing D</div>
<div class="a t" style="left:4.5px;top:137.76px;width:4px;overflow:hidden;font-size:2.03px;line-height:1;color:#aaa;font-weight:700;opacity:0.92">reum </div>
<div class="a t" style="left:15.8px;top:137.76px;width:4px;overflow:hidden;font-size:2.03px;line-height:1;color:#aaa;font-weight:700;opacity:0.92"> Sola</div>
<div class="a t" style="left:27.1px;top:137.76px;width:4px;overflow:hidden;font-size:2.03px;line-height:1;color:#aaa;font-weight:700;opacity:0.92">dress</div>
<div class="a t" style="left:38.4px;top:137.76px;width:4px;overflow:hidden;font-size:2.03px;line-height:1;color:#aaa;font-weight:700;opacity:0.92">e Mar</div>
<div class="a t" style="left:49.7px;top:137.76px;width:4px;overflow:hidden;font-size:2.03px;line-height:1;color:#aaa;font-weight:700;opacity:0.92">ken S</div>
<div class="a" style="left:3.05px;top:145.6px;width:10.4px;height:9.1px;background:#e8e8e8;border-radius:1px"></div>
<div class="a" style="left:5.3px;top:147.2px;width:3.8px;height:3.5px;background:#c9504a;border-radius:0.6px"></div>
<div class="a t" style="left:13px;top:145.93px;width:10px;overflow:hidden;font-size:2px;line-height:1;color:#888;font-weight:700;opacity:0.8">eive Stake E</div>
<div class="a t" style="left:13px;top:147.76px;width:6px;overflow:hidden;font-size:2.03px;line-height:1;color:#ddd;font-weight:700;opacity:1">elp Sup</div>
<div class="a t" style="left:13px;top:149.73px;width:5px;overflow:hidden;font-size:2px;line-height:1;color:#d8ae35;font-weight:700;opacity:0.92"> Avg Hi</div>
<div class="a t" style="left:50px;top:145.93px;width:6px;overflow:hidden;font-size:2px;line-height:1;color:#aaa;font-weight:700;opacity:0.8">r Listin</div>
<div class="a" style="left:43.6px;top:147.6px;width:2.4px;height:2.4px;background:#ddd;border-radius:50%"></div>
<div class="a t" style="left:46.5px;top:147.64px;width:9px;overflow:hidden;font-size:2.32px;line-height:1;color:#fff;font-weight:700;opacity:1">m Main Ne</div>
<div class="a" style="left:3.05px;top:158.1px;width:10.4px;height:9.1px;background:#f0e0a0;border-radius:1px"></div>
<div class="a" style="left:5.3px;top:159.7px;width:3.8px;height:3.5px;background:#c9a050;border-radius:0.6px"></div>
<div class="a t" style="left:13px;top:158.43px;width:10px;overflow:hidden;font-size:2px;line-height:1;color:#888;font-weight:700;opacity:0.8">lana Wallet </div>
<div class="a t" style="left:13px;top:160.26px;width:6px;overflow:hidden;font-size:2.03px;line-height:1;color:#ddd;font-weight:700;opacity:1">ss Copy</div>
<div class="a t" style="left:13px;top:162.23px;width:5px;overflow:hidden;font-size:2px;line-height:1;color:#d8ae35;font-weight:700;opacity:0.92">arket P</div>
<div class="a t" style="left:50px;top:158.43px;width:6px;overflow:hidden;font-size:2px;line-height:1;color:#aaa;font-weight:700;opacity:0.8"> Swap Se</div>
<div class="a" style="left:43.6px;top:160.1px;width:2.4px;height:2.4px;background:#ddd;border-radius:50%"></div>
<div class="a t" style="left:46.5px;top:160.14px;width:9px;overflow:hidden;font-size:2.32px;line-height:1;color:#fff;font-weight:700;opacity:1">e Stake E</div>
</div>
<div class="a" style="left:731.9px;top:765.3px;width:2.6px;height:2.6px;background:#f0c33a;border-radius:50%"></div>
<div class="a" style="left:732.2px;top:770px;width:2px;height:2px;background:#555;border-radius:50%"></div>
<div class="ph" style="left:743.6px;top:638px;width:61.4px;height:170px;background:#181818">
<div class="a t" style="left:4.9px;top:1.9px;font-size:2.5px;color:#888;line-height:1;font-weight:700">9:41</div>
<svg width="12" height="3" style="left:47.6px;top:1.6px" viewBox="0 0 12 3"><path d="M0.2 2.1 L3.2 0.3 L3.2 2.1 Z" fill="#888"/><rect x="4.3" y="0.3" width="1.9" height="1.8" rx=".4" fill="#888" opacity=".85"/><rect x="7.4" y="0.2" width="3.7" height="1.9" rx=".7" fill="#888"/></svg>
<div class="a" style="left:0px;top:0px;width:61.4px;height:19.6px;background:#141414"></div>
<div class="a" style="left:5.2px;top:10.4px;width:4.4px;height:4.4px;background:none;border-radius:50%;border:.4px solid #666"></div>
<div class="a t" style="left:0px;top:11.5px;font-size:2.3px;color:#888;line-height:1;width:61.4px;text-align:center;">NFTs</div>
<div class="a" style="left:52.1px;top:10.2px;width:4.8px;height:4.8px;background:#222;border-radius:50%"></div>
<div class="a" style="left:27px;top:21.2px;width:7px;height:0.6px;background:#444;border-radius:0.3px"></div>
<div class="a" style="left:3.5px;top:25.2px;width:17px;height:4.6px;background:#222;border-radius:2.3px;border:.4px solid #333"></div>
<div class="a t" style="left:5.5px;top:26.26px;width:12px;overflow:hidden;font-size:2.03px;line-height:1;color:#ddd;font-weight:700;opacity:1"> Support Tota</div>
<div class="a" style="left:46.5px;top:25.2px;width:11px;height:4.6px;background:#222;border-radius:2.3px;border:.4px solid #333"></div>
<div class="a t" style="left:48.5px;top:26.26px;width:7px;overflow:hidden;font-size:2.03px;line-height:1;color:#ddd;font-weight:700;opacity:1">g Histor</div>
<div class="a" style="left:3px;top:33px;width:55px;height:34px;background:#222;border-radius:2px"></div>
<div class="a t" style="left:5.5px;top:35.72px;width:9px;overflow:hidden;font-size:2.61px;line-height:1;color:#eee;font-weight:700;opacity:1">isting D</div>
<svg width="2" height="1.2" style="left:53.5px;top:36.5px" viewBox="0 0 2 1.2"><path d="M0 0L1 1L2 0" fill="none" stroke="#aaa" stroke-width=".35"/></svg>
<svg width="5" height="5" style="left:4.7px;top:40.5px" viewBox="0 0 5 5"><circle cx="2.5" cy="2.5" r="1.8" fill="none" stroke="#d8ae35" stroke-width=".6"/></svg>
<div class="a t" style="left:10.5px;top:41.42px;width:8px;overflow:hidden;font-size:2.61px;line-height:1;color:#ddd;font-weight:700;opacity:1">ain Netw</div>
<svg width="5" height="5" style="left:4.7px;top:45.5px" viewBox="0 0 5 5"><circle cx="2.5" cy="2.5" r="1.8" fill="none" stroke="#d8ae35" stroke-width=".6"/></svg>
<div class="a t" style="left:10.5px;top:46.42px;width:10px;overflow:hidden;font-size:2.61px;line-height:1;color:#ddd;font-weight:700;opacity:1">a Wallet </div>
<div class="a" style="left:5.1px;top:50.9px;width:4.2px;height:4.2px;background:#f0c33a;border-radius:50%"></div>
<div class="a t" style="left:10.5px;top:51.42px;width:4px;overflow:hidden;font-size:2.61px;line-height:1;color:#ddd;font-weight:700;opacity:1">Copy </div>
<div class="a" style="left:5.1px;top:55.9px;width:4.2px;height:4.2px;background:#f0c33a;border-radius:50%"></div>
<div class="a t" style="left:10.5px;top:56.42px;width:8px;overflow:hidden;font-size:2.61px;line-height:1;color:#ddd;font-weight:700;opacity:1">et Price</div>
<svg width="5" height="5" style="left:4.7px;top:60.5px" viewBox="0 0 5 5"><circle cx="2.5" cy="2.5" r="1.8" fill="none" stroke="#d8ae35" stroke-width=".6"/></svg>
<div class="a t" style="left:10.5px;top:61.42px;width:12px;overflow:hidden;font-size:2.61px;line-height:1;color:#ddd;font-weight:700;opacity:1">ap Send Rec</div>
<div class="a" style="left:3px;top:70px;width:55px;height:31px;background:#222;border-radius:2px"></div>
<div class="a t" style="left:5.5px;top:72.72px;width:7px;overflow:hidden;font-size:2.61px;line-height:1;color:#eee;font-weight:700;opacity:1">take Ea</div>
<svg width="2" height="1.2" style="left:53.5px;top:73.5px" viewBox="0 0 2 1.2"><path d="M0 0L1 1L2 0" fill="none" stroke="#aaa" stroke-width=".35"/></svg>
<div class="a" style="left:6px;top:91.5px;width:1.9px;height:1.5px;background:#f0c33a;border-radius:0.2px"></div>
<div class="a" style="left:8.85px;top:86px;width:1.9px;height:7px;background:#f0c33a;border-radius:0.2px"></div>
<div class="a" style="left:11.7px;top:88px;width:1.9px;height:5px;background:#f0c33a;border-radius:0.2px"></div>
<div class="a" style="left:14.55px;top:87px;width:1.9px;height:6px;background:#f0c33a;border-radius:0.2px"></div>
<div class="a" style="left:17.4px;top:91.5px;width:1.9px;height:1.5px;background:#f0c33a;border-radius:0.2px"></div>
<div class="a" style="left:20.25px;top:91px;width:1.9px;height:2px;background:#f0c33a;border-radius:0.2px"></div>
<div class="a" style="left:23.1px;top:90px;width:1.9px;height:3px;background:#f0c33a;border-radius:0.2px"></div>
<div class="a" style="left:25.95px;top:84px;width:1.9px;height:9px;background:#f0c33a;border-radius:0.2px"></div>
<div class="a" style="left:28.8px;top:87px;width:1.9px;height:6px;background:#f0c33a;border-radius:0.2px"></div>
<div class="a" style="left:31.65px;top:88px;width:1.9px;height:5px;background:#f0c33a;border-radius:0.2px"></div>
<div class="a" style="left:34.5px;top:82px;width:1.9px;height:11px;background:#f0c33a;border-radius:0.2px"></div>
<div class="a" style="left:37.35px;top:86px;width:1.9px;height:7px;background:#f0c33a;border-radius:0.2px"></div>
<div class="a" style="left:40.2px;top:88px;width:1.9px;height:5px;background:#f0c33a;border-radius:0.2px"></div>
<div class="a" style="left:43.05px;top:85px;width:1.9px;height:8px;background:#f0c33a;border-radius:0.2px"></div>
<div class="a" style="left:45.9px;top:91.5px;width:1.9px;height:1.5px;background:#f0c33a;border-radius:0.2px"></div>
<div class="a" style="left:48.75px;top:90px;width:1.9px;height:3px;background:#444;border-radius:0.2px"></div>
<div class="a" style="left:51.6px;top:89px;width:1.9px;height:4px;background:#444;border-radius:0.2px"></div>
<div class="a" style="left:54.45px;top:88px;width:1.9px;height:5px;background:#444;border-radius:0.2px"></div>
<div class="a" style="left:6px;top:94.3px;width:49px;height:0.8px;background:#555"></div>
<div class="a" style="left:6px;top:94.3px;width:32px;height:0.8px;background:#f0c33a"></div>
<div class="a" style="left:5.3px;top:93.5px;width:2.4px;height:2.4px;background:#f0c33a;border-radius:50%"></div>
<div class="a" style="left:36.8px;top:93.5px;width:2.4px;height:2.4px;background:#f0c33a;border-radius:50%"></div>
<div class="a t" style="left:6px;top:96.63px;width:6px;overflow:hidden;font-size:2px;line-height:1;color:#bbb;font-weight:700;opacity:0.8">pport To</div>
<div class="a t" style="left:49px;top:96.63px;width:6px;overflow:hidden;font-size:2px;line-height:1;color:#bbb;font-weight:700;opacity:0.8">istory O</div>
<div class="a" style="left:3px;top:104px;width:55px;height:25px;background:#222;border-radius:2px"></div>
<div class="a t" style="left:5.5px;top:106.72px;width:12px;overflow:hidden;font-size:2.61px;line-height:1;color:#eee;font-weight:700;opacity:1">ing Details</div>
<svg width="2" height="1.2" style="left:53.5px;top:107.5px" viewBox="0 0 2 1.2"><path d="M0 0L1 1L2 0" fill="none" stroke="#aaa" stroke-width=".35"/></svg>
<div class="a" style="left:6.2px;top:113px;width:2.2px;height:2.2px;background:#f0c33a;border-radius:0.5px"></div>
<div class="a t" style="left:10px;top:112.76px;width:8px;overflow:hidden;font-size:2.03px;line-height:1;color:#999;font-weight:700;opacity:0.92"> Network </div>
<div class="a" style="left:6.2px;top:118px;width:2.2px;height:2.2px;background:#2f2f2f;border-radius:0.5px"></div>
<div class="a t" style="left:10px;top:117.76px;width:9px;overflow:hidden;font-size:2.03px;line-height:1;color:#999;font-weight:700;opacity:0.92">allet Addr</div>
<div class="a" style="left:6.2px;top:123px;width:2.2px;height:2.2px;background:#2f2f2f;border-radius:0.5px"></div>
<div class="a t" style="left:10px;top:122.76px;width:7px;overflow:hidden;font-size:2.03px;line-height:1;color:#999;font-weight:700;opacity:0.92">y Balanc</div>
<div class="a" style="left:3px;top:132px;width:55px;height:40px;background:#222;border-radius:2px"></div>
<div class="a t" style="left:5.5px;top:134.72px;width:11px;overflow:hidden;font-size:2.61px;line-height:1;color:#eee;font-weight:700;opacity:1">Price Toke</div>
<svg width="2" height="1.2" style="left:53.5px;top:135.5px" viewBox="0 0 2 1.2"><path d="M0 0L1 1L2 0" fill="none" stroke="#aaa" stroke-width=".35"/></svg>
<div class="a" style="left:6.2px;top:141px;width:2.2px;height:2.2px;background:#2f2f2f;border-radius:0.5px"></div>
<div class="a t" style="left:10px;top:140.76px;width:4px;overflow:hidden;font-size:2.03px;line-height:1;color:#999;font-weight:700;opacity:0.92">Send </div>
<div class="a" style="left:6.2px;top:146.2px;width:2.2px;height:2.2px;background:#2f2f2f;border-radius:0.5px"></div>
<div class="a t" style="left:10px;top:145.96px;width:8px;overflow:hidden;font-size:2.03px;line-height:1;color:#999;font-weight:700;opacity:0.92">e Earn He</div>
<div class="a" style="left:6.2px;top:151.4px;width:2.2px;height:2.2px;background:#f0c33a;border-radius:0.5px"></div>
<div class="a t" style="left:10px;top:151.16px;width:10px;overflow:hidden;font-size:2.03px;line-height:1;color:#999;font-weight:700;opacity:0.92">rt Total Av</div>
<div class="a" style="left:6.2px;top:156.6px;width:2.2px;height:2.2px;background:#f0c33a;border-radius:0.5px"></div>
<div class="a t" style="left:10px;top:156.36px;width:6px;overflow:hidden;font-size:2.03px;line-height:1;color:#999;font-weight:700;opacity:0.92">ory Off</div>
</div>
<div class="ph" style="left:821.75px;top:638px;width:61.4px;height:170px;background:#181818">
<div class="a t" style="left:4.9px;top:1.9px;font-size:2.5px;color:#fff;line-height:1;font-weight:700">9:41</div>
<svg width="12" height="3" style="left:47.6px;top:1.6px" viewBox="0 0 12 3"><path d="M0.2 2.1 L3.2 0.3 L3.2 2.1 Z" fill="#fff"/><rect x="4.3" y="0.3" width="1.9" height="1.8" rx=".4" fill="#fff" opacity=".85"/><rect x="7.4" y="0.2" width="3.7" height="1.9" rx=".7" fill="#fff"/></svg>
<div class="a" style="left:5.2px;top:10.4px;width:4.4px;height:4.4px;background:#eee;border-radius:50%"></div>
<div class="a t" style="left:0px;top:11.2px;font-size:2.9px;color:#fff;line-height:1;font-weight:700;width:61.4px;text-align:center;">NFT Collection</div>
<div class="a" style="left:52.3px;top:10.4px;width:4.4px;height:4.4px;background:#eee;border-radius:50%"></div>
<svg width="55.3" height="49" style="left:3.1px;top:19px" viewBox="0 0 55.3 49"><rect width="55.3" height="49" rx="2" fill="#f19b2c"/><g stroke="#1e1e1e" stroke-width=".7" stroke-linejoin="round"><path d="M11 49 L13 43.5 L17 40.8 L25 38.8 L31 38.8 L36 41 L38.5 45 L39 49 Z" fill="#ece6da"/><path d="M29 38.8 L36 41 L38.5 45 L39 49 L29.5 49 Z" fill="#3e3e3e"/><ellipse cx="17.4" cy="19.8" rx="3.6" ry="4.1" fill="#e9c7a0"/><ellipse cx="39.2" cy="19.4" rx="3.3" ry="3.9" fill="#e9c7a0"/><path d="M23.5 34.5 L33 34.5 L32.5 40.2 L23.5 40.2 Z" fill="#ddd"/><path d="M21.3 16.3 L33.3 16.3 L34.5 30 L33.5 34.3 L24.2 34.3 L21.6 28 Z" fill="#ede8de"/><path d="M32.8 17 L36.5 22 L37.8 31.5 L34.5 34 L33 30 Z" fill="#d9b88e"/></g><path d="M28.8 34.5 L32.5 34.5 L32.3 40.2 L28.8 40.2 Z" fill="#444"/><g stroke="#b8303a" stroke-width="1.1"><line x1="15" y1="43" x2="28.5" y2="43"/><line x1="13.5" y1="45.4" x2="28.5" y2="45.4"/><line x1="12.5" y1="47.8" x2="28.5" y2="47.8"/></g><path d="M31.5 44 L34.5 43.5 L34 47 L31 47 Z" fill="#ddd"/><ellipse cx="27.6" cy="19.6" rx="2.7" ry="2" fill="#111"/><path d="M26 29.5 H33.3 V32.5 H26 Z" fill="#f4f4f4" stroke="#333" stroke-width=".35"/><path d="M28 29.5 V32.5 M30 29.5 V32.5 M31.8 29.5 V32.5" stroke="#666" stroke-width=".3"/><path d="M19.5 8.2 L35.2 6.6 L36.8 12.5 L43 16.2 L20.2 16.9 Z" fill="#5e6a58" stroke="#1e1e1e" stroke-width=".7" stroke-linejoin="round"/><path d="M21 11.5 L36 10.5" stroke="#4a5446" stroke-width=".5"/></svg>
<div class="a t" style="left:0px;top:72.6px;font-size:3.3px;color:#fff;line-height:1;font-weight:700;width:61.4px;text-align:center;">Doodle #7887</div>
<div class="a" style="left:18.3px;top:76.4px;width:2.4px;height:2.4px;background:#eee;border-radius:50%"></div>
<div class="a t" style="left:21.8px;top:76.36px;width:21px;overflow:hidden;font-size:2.03px;line-height:1;color:#bbb;font-weight:700;opacity:0.92"> Details Activity Crea</div>
<div class="a" style="left:3px;top:81px;width:55px;height:14.5px;background:#232323;border-radius:2px"></div>
<div class="a" style="left:7.2px;top:83.3px;width:2.6px;height:2px;background:#ddd;border-radius:0.5px"></div>
<div class="a t" style="left:7px;top:86.54px;width:3px;overflow:hidden;font-size:2.32px;line-height:1;color:#fff;font-weight:700;opacity:1">twor</div>
<div class="a t" style="left:6px;top:89.53px;width:5px;overflow:hidden;font-size:2px;line-height:1;color:#888;font-weight:700;opacity:0.8">et Addr</div>
<div class="a" style="left:22px;top:83.3px;width:2.6px;height:2px;background:#ddd;border-radius:0.5px"></div>
<div class="a t" style="left:21.8px;top:86.54px;width:3px;overflow:hidden;font-size:2.32px;line-height:1;color:#fff;font-weight:700;opacity:1">alan</div>
<div class="a t" style="left:20.8px;top:89.53px;width:5px;overflow:hidden;font-size:2px;line-height:1;color:#888;font-weight:700;opacity:0.8">ce Toke</div>
<div class="a" style="left:36.8px;top:83.3px;width:2.6px;height:2px;background:#ddd;border-radius:0.5px"></div>
<div class="a t" style="left:36.6px;top:86.54px;width:3px;overflow:hidden;font-size:2.32px;line-height:1;color:#fff;font-weight:700;opacity:1">d Re</div>
<div class="a t" style="left:35.6px;top:89.53px;width:5px;overflow:hidden;font-size:2px;line-height:1;color:#888;font-weight:700;opacity:0.8">arn Hel</div>
<div class="a" style="left:51.6px;top:83.3px;width:2.6px;height:2px;background:#ddd;border-radius:0.5px"></div>
<div class="a t" style="left:51.4px;top:86.54px;width:3px;overflow:hidden;font-size:2.32px;line-height:1;color:#fff;font-weight:700;opacity:1">Tota</div>
<div class="a t" style="left:50.4px;top:89.53px;width:5px;overflow:hidden;font-size:2px;line-height:1;color:#888;font-weight:700;opacity:0.8"> Offer </div>
<div class="a t" style="left:3.5px;top:98.93px;width:10px;overflow:hidden;font-size:2px;line-height:1;color:#aaa;font-weight:700;opacity:0.8">hereum Main </div>
<div class="a t" style="left:22px;top:98.93px;width:8px;overflow:hidden;font-size:2px;line-height:1;color:#aaa;font-weight:700;opacity:0.8">rk Solana </div>
<div class="a" style="left:3.5px;top:102px;width:4px;height:4px;background:#3a5ad8;border-radius:0.8px"></div>
<div class="a t" style="left:9px;top:102.66px;width:9px;overflow:hidden;font-size:2.03px;line-height:1;color:#ddd;font-weight:700;opacity:1">Address Co</div>
<div class="a" style="left:22px;top:102px;width:4px;height:4px;background:#e04a2a;border-radius:0.8px"></div>
<div class="a t" style="left:27.5px;top:102.66px;width:15px;overflow:hidden;font-size:2.03px;line-height:1;color:#ddd;font-weight:700;opacity:1">nce Market Price</div>
<div class="a" style="left:2.8px;top:109.4px;width:16.8px;height:4.6px;background:#1e1e1e;border-radius:2.3px;border:.45px solid #b8962e"></div>
<div class="a t" style="left:5.3px;top:110.36px;width:11.8px;overflow:hidden;font-size:2.03px;line-height:1;color:#ccc;font-weight:700;opacity:0.92">Token Swap Se</div>
<div class="a" style="left:21.4px;top:109.4px;width:12.2px;height:4.6px;background:#1e1e1e;border-radius:2.3px;border:.45px solid #2e2e2e"></div>
<div class="a t" style="left:23.9px;top:110.36px;width:7.2px;overflow:hidden;font-size:2.03px;line-height:1;color:#ccc;font-weight:700;opacity:0.92">eceive St</div>
<div class="a" style="left:36.4px;top:109.4px;width:15.8px;height:4.6px;background:#1e1e1e;border-radius:2.3px;border:.45px solid #2e2e2e"></div>
<div class="a t" style="left:38.9px;top:110.36px;width:10.8px;overflow:hidden;font-size:2.03px;line-height:1;color:#ccc;font-weight:700;opacity:0.92"> Help Suppor</div>
<div class="a" style="left:54px;top:109.4px;width:10px;height:4.6px;background:#1e1e1e;border-radius:2.3px;border:.45px solid #2e2e2e"></div>
<div class="a t" style="left:56.5px;top:110.36px;width:5px;overflow:hidden;font-size:2.03px;line-height:1;color:#ccc;font-weight:700;opacity:0.92">al Avg</div>
<div class="a" style="left:3px;top:117.6px;width:55px;height:60px;background:#222;border-radius:2px"></div>
<div class="a t" style="left:5.5px;top:119.72px;width:8px;overflow:hidden;font-size:2.61px;line-height:1;color:#eee;font-weight:700;opacity:1">fer List</div>
<div class="a t" style="left:5.5px;top:125.23px;width:14px;overflow:hidden;font-size:2px;line-height:1;color:#888;font-weight:700;opacity:0.8">eum Main Network</div>
<div class="a t" style="left:40px;top:125.26px;width:14px;overflow:hidden;font-size:2.03px;line-height:1;color:#ddd;font-weight:700;opacity:1">Solana Wallet A</div>
<div class="a t" style="left:5.5px;top:131.53px;width:14px;overflow:hidden;font-size:2px;line-height:1;color:#888;font-weight:700;opacity:0.8">ress Copy Balanc</div>
<div class="a t" style="left:40px;top:131.56px;width:14px;overflow:hidden;font-size:2.03px;line-height:1;color:#ddd;font-weight:700;opacity:1"> Market Price T</div>
<div class="a t" style="left:5.5px;top:137.83px;width:14px;overflow:hidden;font-size:2px;line-height:1;color:#888;font-weight:700;opacity:0.8">en Swap Send Rec</div>
<div class="a t" style="left:40px;top:137.86px;width:14px;overflow:hidden;font-size:2.03px;line-height:1;color:#ddd;font-weight:700;opacity:1">ive Stake Earn </div>
<div class="a t" style="left:5.5px;top:144.13px;width:14px;overflow:hidden;font-size:2px;line-height:1;color:#888;font-weight:700;opacity:0.8">lp Support Total</div>
<div class="a t" style="left:40px;top:144.16px;width:14px;overflow:hidden;font-size:2.03px;line-height:1;color:#ddd;font-weight:700;opacity:1">Avg History Off</div>
<div class="a t" style="left:5.5px;top:150.43px;width:14px;overflow:hidden;font-size:2px;line-height:1;color:#888;font-weight:700;opacity:0.8"> Listing Details</div>
<div class="a t" style="left:40px;top:150.46px;width:14px;overflow:hidden;font-size:2.03px;line-height:1;color:#ddd;font-weight:700;opacity:1"> Main Network S</div>
<div class="a t" style="left:5.5px;top:156.73px;width:14px;overflow:hidden;font-size:2px;line-height:1;color:#888;font-weight:700;opacity:0.8">ana Wallet Addre</div>
<div class="a t" style="left:40px;top:156.76px;width:14px;overflow:hidden;font-size:2.03px;line-height:1;color:#ddd;font-weight:700;opacity:1">s Copy Balance </div>
</div>
<div class="ph" style="left:899.9px;top:638px;width:61.4px;height:170px;background:#181818">
<div class="a t" style="left:4.9px;top:1.9px;font-size:2.5px;color:#fff;line-height:1;font-weight:700">9:41</div>
<svg width="12" height="3" style="left:47.6px;top:1.6px" viewBox="0 0 12 3"><path d="M0.2 2.1 L3.2 0.3 L3.2 2.1 Z" fill="#fff"/><rect x="4.3" y="0.3" width="1.9" height="1.8" rx=".4" fill="#fff" opacity=".85"/><rect x="7.4" y="0.2" width="3.7" height="1.9" rx=".7" fill="#fff"/></svg>
<div class="a" style="left:5.2px;top:10.4px;width:4.4px;height:4.4px;background:#eee;border-radius:50%"></div>
<div class="a t" style="left:0px;top:11.2px;font-size:2.9px;color:#fff;line-height:1;font-weight:700;width:61.4px;text-align:center;">NFT Collection</div>
<div class="a" style="left:52.3px;top:10.4px;width:4.4px;height:4.4px;background:#eee;border-radius:50%"></div>
<svg width="55.3" height="49" style="left:3.1px;top:19px" viewBox="0 0 55.3 49"><rect width="55.3" height="49" rx="2" fill="#f19b2c"/><g stroke="#1e1e1e" stroke-width=".7" stroke-linejoin="round"><path d="M11 49 L13 43.5 L17 40.8 L25 38.8 L31 38.8 L36 41 L38.5 45 L39 49 Z" fill="#ece6da"/><path d="M29 38.8 L36 41 L38.5 45 L39 49 L29.5 49 Z" fill="#3e3e3e"/><ellipse cx="17.4" cy="19.8" rx="3.6" ry="4.1" fill="#e9c7a0"/><ellipse cx="39.2" cy="19.4" rx="3.3" ry="3.9" fill="#e9c7a0"/><path d="M23.5 34.5 L33 34.5 L32.5 40.2 L23.5 40.2 Z" fill="#ddd"/><path d="M21.3 16.3 L33.3 16.3 L34.5 30 L33.5 34.3 L24.2 34.3 L21.6 28 Z" fill="#ede8de"/><path d="M32.8 17 L36.5 22 L37.8 31.5 L34.5 34 L33 30 Z" fill="#d9b88e"/></g><path d="M28.8 34.5 L32.5 34.5 L32.3 40.2 L28.8 40.2 Z" fill="#444"/><g stroke="#b8303a" stroke-width="1.1"><line x1="15" y1="43" x2="28.5" y2="43"/><line x1="13.5" y1="45.4" x2="28.5" y2="45.4"/><line x1="12.5" y1="47.8" x2="28.5" y2="47.8"/></g><path d="M31.5 44 L34.5 43.5 L34 47 L31 47 Z" fill="#ddd"/><ellipse cx="27.6" cy="19.6" rx="2.7" ry="2" fill="#111"/><path d="M26 29.5 H33.3 V32.5 H26 Z" fill="#f4f4f4" stroke="#333" stroke-width=".35"/><path d="M28 29.5 V32.5 M30 29.5 V32.5 M31.8 29.5 V32.5" stroke="#666" stroke-width=".3"/><path d="M19.5 8.2 L35.2 6.6 L36.8 12.5 L43 16.2 L20.2 16.9 Z" fill="#5e6a58" stroke="#1e1e1e" stroke-width=".7" stroke-linejoin="round"/><path d="M21 11.5 L36 10.5" stroke="#4a5446" stroke-width=".5"/></svg>
<div class="a t" style="left:0px;top:72.6px;font-size:3.3px;color:#fff;line-height:1;font-weight:700;width:61.4px;text-align:center;">Doodle #7887</div>
<div class="a" style="left:18.3px;top:76.4px;width:2.4px;height:2.4px;background:#eee;border-radius:50%"></div>
<div class="a t" style="left:21.8px;top:76.36px;width:21px;overflow:hidden;font-size:2.03px;line-height:1;color:#bbb;font-weight:700;opacity:0.92">rket Price Token Swap </div>
<div class="a" style="left:3px;top:81px;width:55px;height:14.5px;background:#232323;border-radius:2px"></div>
<div class="a" style="left:7.2px;top:83.3px;width:2.6px;height:2px;background:#ddd;border-radius:0.5px"></div>
<div class="a t" style="left:7px;top:86.54px;width:3px;overflow:hidden;font-size:2.32px;line-height:1;color:#fff;font-weight:700;opacity:1">Swap</div>
<div class="a t" style="left:6px;top:89.53px;width:5px;overflow:hidden;font-size:2px;line-height:1;color:#888;font-weight:700;opacity:0.8"> Stake </div>
<div class="a" style="left:22px;top:83.3px;width:2.6px;height:2px;background:#ddd;border-radius:0.5px"></div>
<div class="a t" style="left:21.8px;top:86.54px;width:3px;overflow:hidden;font-size:2.32px;line-height:1;color:#fff;font-weight:700;opacity:1">Supp</div>
<div class="a t" style="left:20.8px;top:89.53px;width:5px;overflow:hidden;font-size:2px;line-height:1;color:#888;font-weight:700;opacity:0.8"> Histor</div>
<div class="a" style="left:36.8px;top:83.3px;width:2.6px;height:2px;background:#ddd;border-radius:0.5px"></div>
<div class="a t" style="left:36.6px;top:86.54px;width:3px;overflow:hidden;font-size:2.32px;line-height:1;color:#fff;font-weight:700;opacity:1">stin</div>
<div class="a t" style="left:35.6px;top:89.53px;width:5px;overflow:hidden;font-size:2px;line-height:1;color:#888;font-weight:700;opacity:0.8">in Netw</div>
<div class="a" style="left:51.6px;top:83.3px;width:2.6px;height:2px;background:#ddd;border-radius:0.5px"></div>
<div class="a t" style="left:51.4px;top:86.54px;width:3px;overflow:hidden;font-size:2.32px;line-height:1;color:#fff;font-weight:700;opacity:1"> Wal</div>
<div class="a t" style="left:50.4px;top:89.53px;width:5px;overflow:hidden;font-size:2px;line-height:1;color:#888;font-weight:700;opacity:0.8">opy Bal</div>
<div class="a t" style="left:3.5px;top:98.93px;width:10px;overflow:hidden;font-size:2px;line-height:1;color:#aaa;font-weight:700;opacity:0.8">t Price Toke</div>
<div class="a t" style="left:22px;top:98.93px;width:8px;overflow:hidden;font-size:2px;line-height:1;color:#aaa;font-weight:700;opacity:0.8">p Send Rec</div>
<div class="a" style="left:3.5px;top:102px;width:4px;height:4px;background:#3a5ad8;border-radius:0.8px"></div>
<div class="a t" style="left:9px;top:102.66px;width:9px;overflow:hidden;font-size:2.03px;line-height:1;color:#ddd;font-weight:700;opacity:1">ake Earn H</div>
<div class="a" style="left:22px;top:102px;width:4px;height:4px;background:#e04a2a;border-radius:0.8px"></div>
<div class="a t" style="left:27.5px;top:102.66px;width:15px;overflow:hidden;font-size:2.03px;line-height:1;color:#ddd;font-weight:700;opacity:1">port Total Avg H</div>
<div class="a" style="left:2.8px;top:109.4px;width:16.8px;height:4.6px;background:#1e1e1e;border-radius:2.3px;border:.45px solid #2e2e2e"></div>
<div class="a t" style="left:5.3px;top:110.36px;width:11.8px;overflow:hidden;font-size:2.03px;line-height:1;color:#ccc;font-weight:700;opacity:0.92">story Offer L</div>
<div class="a" style="left:21.4px;top:109.4px;width:12.2px;height:4.6px;background:#1e1e1e;border-radius:2.3px;border:.45px solid #b8962e"></div>
<div class="a t" style="left:23.9px;top:110.36px;width:7.2px;overflow:hidden;font-size:2.03px;line-height:1;color:#ccc;font-weight:700;opacity:0.92">ng Detail</div>
<div class="a" style="left:36.4px;top:109.4px;width:15.8px;height:4.6px;background:#1e1e1e;border-radius:2.3px;border:.45px solid #2e2e2e"></div>
<div class="a t" style="left:38.9px;top:110.36px;width:10.8px;overflow:hidden;font-size:2.03px;line-height:1;color:#ccc;font-weight:700;opacity:0.92">Network Sola</div>
<div class="a" style="left:54px;top:109.4px;width:10px;height:4.6px;background:#1e1e1e;border-radius:2.3px;border:.45px solid #2e2e2e"></div>
<div class="a t" style="left:56.5px;top:110.36px;width:5px;overflow:hidden;font-size:2.03px;line-height:1;color:#ccc;font-weight:700;opacity:0.92">llet A</div>
<div class="a" style="left:3px;top:117.6px;width:55px;height:60px;background:#222;border-radius:2px"></div>
<div class="a t" style="left:5.5px;top:120.04px;width:9px;overflow:hidden;font-size:2.32px;line-height:1;color:#eee;font-weight:700;opacity:1"> Balance </div>
<div class="a t" style="left:5.5px;top:122.13px;width:5px;overflow:hidden;font-size:2px;line-height:1;color:#d8ae35;font-weight:700;opacity:0.92">rice To</div>
<div class="a" style="left:42.8px;top:120.2px;width:2.4px;height:2.4px;background:#ddd;border-radius:50%"></div>
<div class="a t" style="left:45.5px;top:120.16px;width:9px;overflow:hidden;font-size:2.03px;line-height:1;color:#fff;font-weight:700;opacity:1">end Receiv</div>
<div class="a t" style="left:45px;top:122.13px;width:10px;overflow:hidden;font-size:2px;line-height:1;color:#888;font-weight:700;opacity:0.8"> Earn Help S</div>
<div class="a" style="left:5px;top:126px;width:51px;height:7.5px;background:#1a1a1a;border-radius:1.5px"></div>
<div class="a t" style="left:8px;top:127.13px;width:9px;overflow:hidden;font-size:2px;line-height:1;color:#888;font-weight:700;opacity:0.8">t Total Avg</div>
<div class="a t" style="left:8.5px;top:129.66px;width:8px;overflow:hidden;font-size:2.03px;line-height:1;color:#ccc;font-weight:700;opacity:0.92">ry Offer </div>
<div class="a t" style="left:24.5px;top:127.13px;width:9px;overflow:hidden;font-size:2px;line-height:1;color:#888;font-weight:700;opacity:0.8">Ethereum Ma</div>
<div class="a t" style="left:25px;top:129.66px;width:8px;overflow:hidden;font-size:2.03px;line-height:1;color:#d8ae35;font-weight:700;opacity:0.92">work Sola</div>
<div class="a t" style="left:41px;top:127.13px;width:9px;overflow:hidden;font-size:2px;line-height:1;color:#888;font-weight:700;opacity:0.8">t Address C</div>
<div class="a t" style="left:41.5px;top:129.66px;width:8px;overflow:hidden;font-size:2.03px;line-height:1;color:#ccc;font-weight:700;opacity:0.92">lance Mar</div>
<div class="a t" style="left:5.5px;top:140.54px;width:9px;overflow:hidden;font-size:2.32px;line-height:1;color:#eee;font-weight:700;opacity:1">e Token S</div>
<div class="a t" style="left:5.5px;top:142.63px;width:5px;overflow:hidden;font-size:2px;line-height:1;color:#d8ae35;font-weight:700;opacity:0.92"> Receiv</div>
<div class="a" style="left:42.8px;top:140.7px;width:2.4px;height:2.4px;background:#ddd;border-radius:50%"></div>
<div class="a t" style="left:45.5px;top:140.66px;width:9px;overflow:hidden;font-size:2.03px;line-height:1;color:#fff;font-weight:700;opacity:1">rn Help Su</div>
<div class="a t" style="left:45px;top:142.63px;width:10px;overflow:hidden;font-size:2px;line-height:1;color:#888;font-weight:700;opacity:0.8">otal Avg His</div>
<div class="a" style="left:5px;top:146.5px;width:51px;height:7.5px;background:#1a1a1a;border-radius:1.5px"></div>
<div class="a t" style="left:8px;top:147.63px;width:9px;overflow:hidden;font-size:2px;line-height:1;color:#888;font-weight:700;opacity:0.8">Offer Listi</div>
<div class="a t" style="left:8.5px;top:150.16px;width:8px;overflow:hidden;font-size:2.03px;line-height:1;color:#ccc;font-weight:700;opacity:0.92">ereum Mai</div>
<div class="a t" style="left:24.5px;top:147.63px;width:9px;overflow:hidden;font-size:2px;line-height:1;color:#888;font-weight:700;opacity:0.8">k Solana Wa</div>
<div class="a t" style="left:25px;top:150.16px;width:8px;overflow:hidden;font-size:2.03px;line-height:1;color:#d8ae35;font-weight:700;opacity:0.92">ddress Co</div>
<div class="a t" style="left:41px;top:147.63px;width:9px;overflow:hidden;font-size:2px;line-height:1;color:#888;font-weight:700;opacity:0.8">ce Market P</div>
<div class="a t" style="left:41.5px;top:150.16px;width:8px;overflow:hidden;font-size:2.03px;line-height:1;color:#ccc;font-weight:700;opacity:0.92">oken Swap</div>
<div class="a t" style="left:5.5px;top:161.04px;width:9px;overflow:hidden;font-size:2.32px;line-height:1;color:#eee;font-weight:700;opacity:1">ceive Sta</div>
<div class="a t" style="left:5.5px;top:163.13px;width:5px;overflow:hidden;font-size:2px;line-height:1;color:#d8ae35;font-weight:700;opacity:0.92">Help Su</div>
<div class="a" style="left:42.8px;top:161.2px;width:2.4px;height:2.4px;background:#ddd;border-radius:50%"></div>
<div class="a t" style="left:45.5px;top:161.16px;width:9px;overflow:hidden;font-size:2.03px;line-height:1;color:#fff;font-weight:700;opacity:1">l Avg Hist</div>
<div class="a t" style="left:45px;top:163.13px;width:10px;overflow:hidden;font-size:2px;line-height:1;color:#888;font-weight:700;opacity:0.8">er Listing D</div>
<div class="a" style="left:5px;top:167px;width:51px;height:7.5px;background:#1a1a1a;border-radius:1.5px"></div>
<div class="a t" style="left:8px;top:168.13px;width:9px;overflow:hidden;font-size:2px;line-height:1;color:#888;font-weight:700;opacity:0.8">um Main Net</div>
<div class="a t" style="left:8.5px;top:170.66px;width:8px;overflow:hidden;font-size:2.03px;line-height:1;color:#ccc;font-weight:700;opacity:0.92">olana Wal</div>
<div class="a t" style="left:24.5px;top:168.13px;width:9px;overflow:hidden;font-size:2px;line-height:1;color:#888;font-weight:700;opacity:0.8">ess Copy Ba</div>
<div class="a t" style="left:25px;top:170.66px;width:8px;overflow:hidden;font-size:2.03px;line-height:1;color:#d8ae35;font-weight:700;opacity:0.92">Market Pr</div>
<div class="a t" style="left:41px;top:168.13px;width:9px;overflow:hidden;font-size:2px;line-height:1;color:#888;font-weight:700;opacity:0.8">n Swap Send</div>
<div class="a t" style="left:41.5px;top:170.66px;width:8px;overflow:hidden;font-size:2.03px;line-height:1;color:#ccc;font-weight:700;opacity:0.92">ve Stake </div>
</div>
<div class="ph" style="left:978.05px;top:638px;width:61.4px;height:170px;background:#181818">
<div class="a t" style="left:4.9px;top:1.9px;font-size:2.5px;color:#fff;line-height:1;font-weight:700">9:41</div>
<svg width="12" height="3" style="left:47.6px;top:1.6px" viewBox="0 0 12 3"><path d="M0.2 2.1 L3.2 0.3 L3.2 2.1 Z" fill="#fff"/><rect x="4.3" y="0.3" width="1.9" height="1.8" rx=".4" fill="#fff" opacity=".85"/><rect x="7.4" y="0.2" width="3.7" height="1.9" rx=".7" fill="#fff"/></svg>
<div class="a" style="left:5.2px;top:10.4px;width:4.4px;height:4.4px;background:#eee;border-radius:50%"></div>
<div class="a t" style="left:0px;top:11.2px;font-size:2.9px;color:#fff;line-height:1;font-weight:700;width:61.4px;text-align:center;">NFT Collection</div>
<div class="a" style="left:52.3px;top:10.4px;width:4.4px;height:4.4px;background:#eee;border-radius:50%"></div>
<svg width="55.3" height="49" style="left:3.1px;top:19px" viewBox="0 0 55.3 49"><rect width="55.3" height="49" rx="2" fill="#f19b2c"/><g stroke="#1e1e1e" stroke-width=".7" stroke-linejoin="round"><path d="M11 49 L13 43.5 L17 40.8 L25 38.8 L31 38.8 L36 41 L38.5 45 L39 49 Z" fill="#ece6da"/><path d="M29 38.8 L36 41 L38.5 45 L39 49 L29.5 49 Z" fill="#3e3e3e"/><ellipse cx="17.4" cy="19.8" rx="3.6" ry="4.1" fill="#e9c7a0"/><ellipse cx="39.2" cy="19.4" rx="3.3" ry="3.9" fill="#e9c7a0"/><path d="M23.5 34.5 L33 34.5 L32.5 40.2 L23.5 40.2 Z" fill="#ddd"/><path d="M21.3 16.3 L33.3 16.3 L34.5 30 L33.5 34.3 L24.2 34.3 L21.6 28 Z" fill="#ede8de"/><path d="M32.8 17 L36.5 22 L37.8 31.5 L34.5 34 L33 30 Z" fill="#d9b88e"/></g><path d="M28.8 34.5 L32.5 34.5 L32.3 40.2 L28.8 40.2 Z" fill="#444"/><g stroke="#b8303a" stroke-width="1.1"><line x1="15" y1="43" x2="28.5" y2="43"/><line x1="13.5" y1="45.4" x2="28.5" y2="45.4"/><line x1="12.5" y1="47.8" x2="28.5" y2="47.8"/></g><path d="M31.5 44 L34.5 43.5 L34 47 L31 47 Z" fill="#ddd"/><ellipse cx="27.6" cy="19.6" rx="2.7" ry="2" fill="#111"/><path d="M26 29.5 H33.3 V32.5 H26 Z" fill="#f4f4f4" stroke="#333" stroke-width=".35"/><path d="M28 29.5 V32.5 M30 29.5 V32.5 M31.8 29.5 V32.5" stroke="#666" stroke-width=".3"/><path d="M19.5 8.2 L35.2 6.6 L36.8 12.5 L43 16.2 L20.2 16.9 Z" fill="#5e6a58" stroke="#1e1e1e" stroke-width=".7" stroke-linejoin="round"/><path d="M21 11.5 L36 10.5" stroke="#4a5446" stroke-width=".5"/></svg>
<div class="a t" style="left:0px;top:72.6px;font-size:3.3px;color:#fff;line-height:1;font-weight:700;width:61.4px;text-align:center;">Doodle #7887</div>
<div class="a" style="left:18.3px;top:76.4px;width:2.4px;height:2.4px;background:#eee;border-radius:50%"></div>
<div class="a t" style="left:21.8px;top:76.36px;width:21px;overflow:hidden;font-size:2.03px;line-height:1;color:#bbb;font-weight:700;opacity:0.92">p Support Total Avg Hi</div>
<div class="a" style="left:3px;top:81px;width:55px;height:14.5px;background:#232323;border-radius:2px"></div>
<div class="a" style="left:7.2px;top:83.3px;width:2.6px;height:2px;background:#ddd;border-radius:0.5px"></div>
<div class="a t" style="left:7px;top:86.54px;width:3px;overflow:hidden;font-size:2.32px;line-height:1;color:#fff;font-weight:700;opacity:1">vg H</div>
<div class="a t" style="left:6px;top:89.53px;width:5px;overflow:hidden;font-size:2px;line-height:1;color:#888;font-weight:700;opacity:0.8">Listing</div>
<div class="a" style="left:22px;top:83.3px;width:2.6px;height:2px;background:#ddd;border-radius:0.5px"></div>
<div class="a t" style="left:21.8px;top:86.54px;width:3px;overflow:hidden;font-size:2.32px;line-height:1;color:#fff;font-weight:700;opacity:1">Main</div>
<div class="a t" style="left:20.8px;top:89.53px;width:5px;overflow:hidden;font-size:2px;line-height:1;color:#888;font-weight:700;opacity:0.8">na Wall</div>
<div class="a" style="left:36.8px;top:83.3px;width:2.6px;height:2px;background:#ddd;border-radius:0.5px"></div>
<div class="a t" style="left:36.6px;top:86.54px;width:3px;overflow:hidden;font-size:2.32px;line-height:1;color:#fff;font-weight:700;opacity:1"> Cop</div>
<div class="a t" style="left:35.6px;top:89.53px;width:5px;overflow:hidden;font-size:2px;line-height:1;color:#888;font-weight:700;opacity:0.8">ket Pri</div>
<div class="a" style="left:51.6px;top:83.3px;width:2.6px;height:2px;background:#ddd;border-radius:0.5px"></div>
<div class="a t" style="left:51.4px;top:86.54px;width:3px;overflow:hidden;font-size:2.32px;line-height:1;color:#fff;font-weight:700;opacity:1">wap </div>
<div class="a t" style="left:50.4px;top:89.53px;width:5px;overflow:hidden;font-size:2px;line-height:1;color:#888;font-weight:700;opacity:0.8">Stake E</div>
<div class="a t" style="left:3.5px;top:98.93px;width:10px;overflow:hidden;font-size:2px;line-height:1;color:#aaa;font-weight:700;opacity:0.8">upport Total</div>
<div class="a t" style="left:22px;top:98.93px;width:8px;overflow:hidden;font-size:2px;line-height:1;color:#aaa;font-weight:700;opacity:0.8">History Of</div>
<div class="a" style="left:3.5px;top:102px;width:4px;height:4px;background:#3a5ad8;border-radius:0.8px"></div>
<div class="a t" style="left:9px;top:102.66px;width:9px;overflow:hidden;font-size:2.03px;line-height:1;color:#ddd;font-weight:700;opacity:1">ting Detai</div>
<div class="a" style="left:22px;top:102px;width:4px;height:4px;background:#e04a2a;border-radius:0.8px"></div>
<div class="a t" style="left:27.5px;top:102.66px;width:15px;overflow:hidden;font-size:2.03px;line-height:1;color:#ddd;font-weight:700;opacity:1">n Network Solana</div>
<div class="a" style="left:2.8px;top:109.4px;width:16.8px;height:4.6px;background:#1e1e1e;border-radius:2.3px;border:.45px solid #2e2e2e"></div>
<div class="a t" style="left:5.3px;top:110.36px;width:11.8px;overflow:hidden;font-size:2.03px;line-height:1;color:#ccc;font-weight:700;opacity:0.92">Wallet Addres</div>
<div class="a" style="left:21.4px;top:109.4px;width:12.2px;height:4.6px;background:#1e1e1e;border-radius:2.3px;border:.45px solid #2e2e2e"></div>
<div class="a t" style="left:23.9px;top:110.36px;width:7.2px;overflow:hidden;font-size:2.03px;line-height:1;color:#ccc;font-weight:700;opacity:0.92">py Balanc</div>
<div class="a" style="left:36.4px;top:109.4px;width:15.8px;height:4.6px;background:#1e1e1e;border-radius:2.3px;border:.45px solid #b8962e"></div>
<div class="a t" style="left:38.9px;top:110.36px;width:10.8px;overflow:hidden;font-size:2.03px;line-height:1;color:#ccc;font-weight:700;opacity:0.92"> Price Token</div>
<div class="a" style="left:54px;top:109.4px;width:10px;height:4.6px;background:#1e1e1e;border-radius:2.3px;border:.45px solid #2e2e2e"></div>
<div class="a t" style="left:56.5px;top:110.36px;width:5px;overflow:hidden;font-size:2.03px;line-height:1;color:#ccc;font-weight:700;opacity:0.92"> Send </div>
<div class="a" style="left:3px;top:117.6px;width:55px;height:60px;background:#222;border-radius:2px"></div>
<div class="a t" style="left:5.5px;top:120.04px;width:9px;overflow:hidden;font-size:2.32px;line-height:1;color:#eee;font-weight:700;opacity:1">ke Earn H</div>
<div class="a t" style="left:5.5px;top:122.13px;width:5px;overflow:hidden;font-size:2px;line-height:1;color:#d8ae35;font-weight:700;opacity:0.92">ort Tot</div>
<div class="a" style="left:42.8px;top:120.2px;width:2.4px;height:2.4px;background:#ddd;border-radius:50%"></div>
<div class="a t" style="left:45.5px;top:120.16px;width:9px;overflow:hidden;font-size:2.03px;line-height:1;color:#fff;font-weight:700;opacity:1">tory Offer</div>
<div class="a t" style="left:45px;top:122.13px;width:10px;overflow:hidden;font-size:2px;line-height:1;color:#888;font-weight:700;opacity:0.8">g Details Ac</div>
<div class="a" style="left:5px;top:126px;width:51px;height:7.5px;background:#1a1a1a;border-radius:1.5px"></div>
<div class="a t" style="left:8px;top:127.13px;width:9px;overflow:hidden;font-size:2px;line-height:1;color:#888;font-weight:700;opacity:0.8">etwork Sola</div>
<div class="a t" style="left:8.5px;top:129.66px;width:8px;overflow:hidden;font-size:2.03px;line-height:1;color:#ccc;font-weight:700;opacity:0.92">let Addre</div>
<div class="a t" style="left:24.5px;top:127.13px;width:9px;overflow:hidden;font-size:2px;line-height:1;color:#888;font-weight:700;opacity:0.8">Balance Mar</div>
<div class="a t" style="left:25px;top:129.66px;width:8px;overflow:hidden;font-size:2.03px;line-height:1;color:#d8ae35;font-weight:700;opacity:0.92">ice Token</div>
<div class="a t" style="left:41px;top:127.13px;width:9px;overflow:hidden;font-size:2px;line-height:1;color:#888;font-weight:700;opacity:0.8">nd Receive </div>
<div class="a t" style="left:41.5px;top:129.66px;width:8px;overflow:hidden;font-size:2.03px;line-height:1;color:#ccc;font-weight:700;opacity:0.92">Earn Help</div>
<div class="a t" style="left:5.5px;top:140.54px;width:9px;overflow:hidden;font-size:2.32px;line-height:1;color:#eee;font-weight:700;opacity:1"> Total Av</div>
<div class="a t" style="left:5.5px;top:142.63px;width:5px;overflow:hidden;font-size:2px;line-height:1;color:#d8ae35;font-weight:700;opacity:0.92">y Offer</div>
<div class="a" style="left:42.8px;top:140.7px;width:2.4px;height:2.4px;background:#ddd;border-radius:50%"></div>
<div class="a t" style="left:45.5px;top:140.66px;width:9px;overflow:hidden;font-size:2.03px;line-height:1;color:#fff;font-weight:700;opacity:1">thereum Ma</div>
<div class="a t" style="left:45px;top:142.63px;width:10px;overflow:hidden;font-size:2px;line-height:1;color:#888;font-weight:700;opacity:0.8">ork Solana W</div>
<div class="a" style="left:5px;top:146.5px;width:51px;height:7.5px;background:#1a1a1a;border-radius:1.5px"></div>
<div class="a t" style="left:8px;top:147.63px;width:9px;overflow:hidden;font-size:2px;line-height:1;color:#888;font-weight:700;opacity:0.8"> Address Co</div>
<div class="a t" style="left:8.5px;top:150.16px;width:8px;overflow:hidden;font-size:2.03px;line-height:1;color:#ccc;font-weight:700;opacity:0.92">ance Mark</div>
<div class="a t" style="left:24.5px;top:147.63px;width:9px;overflow:hidden;font-size:2px;line-height:1;color:#888;font-weight:700;opacity:0.8"> Token Swap</div>
<div class="a t" style="left:25px;top:150.16px;width:8px;overflow:hidden;font-size:2.03px;line-height:1;color:#d8ae35;font-weight:700;opacity:0.92">Receive S</div>
<div class="a t" style="left:41px;top:147.63px;width:9px;overflow:hidden;font-size:2px;line-height:1;color:#888;font-weight:700;opacity:0.8">n Help Supp</div>
<div class="a t" style="left:41.5px;top:150.16px;width:8px;overflow:hidden;font-size:2.03px;line-height:1;color:#ccc;font-weight:700;opacity:0.92">tal Avg H</div>
<div class="a t" style="left:5.5px;top:161.04px;width:9px;overflow:hidden;font-size:2.32px;line-height:1;color:#eee;font-weight:700;opacity:1">ffer List</div>
<div class="a t" style="left:5.5px;top:163.13px;width:5px;overflow:hidden;font-size:2px;line-height:1;color:#d8ae35;font-weight:700;opacity:0.92">reum Ma</div>
<div class="a" style="left:42.8px;top:161.2px;width:2.4px;height:2.4px;background:#ddd;border-radius:50%"></div>
<div class="a t" style="left:45.5px;top:161.16px;width:9px;overflow:hidden;font-size:2.03px;line-height:1;color:#fff;font-weight:700;opacity:1"> Solana Wa</div>
<div class="a t" style="left:45px;top:163.13px;width:10px;overflow:hidden;font-size:2px;line-height:1;color:#888;font-weight:700;opacity:0.8">dress Copy B</div>
<div class="a" style="left:5px;top:167px;width:51px;height:7.5px;background:#1a1a1a;border-radius:1.5px"></div>
<div class="a t" style="left:8px;top:168.13px;width:9px;overflow:hidden;font-size:2px;line-height:1;color:#888;font-weight:700;opacity:0.8">e Market Pr</div>
<div class="a t" style="left:8.5px;top:170.66px;width:8px;overflow:hidden;font-size:2.03px;line-height:1;color:#ccc;font-weight:700;opacity:0.92">ken Swap </div>
<div class="a t" style="left:24.5px;top:168.13px;width:9px;overflow:hidden;font-size:2px;line-height:1;color:#888;font-weight:700;opacity:0.8">eive Stake </div>
<div class="a t" style="left:25px;top:170.66px;width:8px;overflow:hidden;font-size:2.03px;line-height:1;color:#d8ae35;font-weight:700;opacity:0.92">elp Suppo</div>
<div class="a t" style="left:41px;top:168.13px;width:9px;overflow:hidden;font-size:2px;line-height:1;color:#888;font-weight:700;opacity:0.8"> Avg Histor</div>
<div class="a t" style="left:41.5px;top:170.66px;width:8px;overflow:hidden;font-size:2.03px;line-height:1;color:#ccc;font-weight:700;opacity:0.92">r Listing</div>
</div>
<div class="ph" style="left:1056.2px;top:638px;width:61.4px;height:170px;background:#181818">
<div class="a t" style="left:4.9px;top:1.9px;font-size:2.5px;color:#fff;line-height:1;font-weight:700">9:41</div>
<svg width="12" height="3" style="left:47.6px;top:1.6px" viewBox="0 0 12 3"><path d="M0.2 2.1 L3.2 0.3 L3.2 2.1 Z" fill="#fff"/><rect x="4.3" y="0.3" width="1.9" height="1.8" rx=".4" fill="#fff" opacity=".85"/><rect x="7.4" y="0.2" width="3.7" height="1.9" rx=".7" fill="#fff"/></svg>
<div class="a" style="left:5.2px;top:10.4px;width:4.4px;height:4.4px;background:#eee;border-radius:50%"></div>
<div class="a t" style="left:0px;top:11.2px;font-size:2.9px;color:#fff;line-height:1;font-weight:700;width:61.4px;text-align:center;">NFT Collection</div>
<div class="a" style="left:52.3px;top:10.4px;width:4.4px;height:4.4px;background:#eee;border-radius:50%"></div>
<svg width="55.3" height="49" style="left:3.1px;top:19px" viewBox="0 0 55.3 49"><rect width="55.3" height="49" rx="2" fill="#f19b2c"/><g stroke="#1e1e1e" stroke-width=".7" stroke-linejoin="round"><path d="M11 49 L13 43.5 L17 40.8 L25 38.8 L31 38.8 L36 41 L38.5 45 L39 49 Z" fill="#ece6da"/><path d="M29 38.8 L36 41 L38.5 45 L39 49 L29.5 49 Z" fill="#3e3e3e"/><ellipse cx="17.4" cy="19.8" rx="3.6" ry="4.1" fill="#e9c7a0"/><ellipse cx="39.2" cy="19.4" rx="3.3" ry="3.9" fill="#e9c7a0"/><path d="M23.5 34.5 L33 34.5 L32.5 40.2 L23.5 40.2 Z" fill="#ddd"/><path d="M21.3 16.3 L33.3 16.3 L34.5 30 L33.5 34.3 L24.2 34.3 L21.6 28 Z" fill="#ede8de"/><path d="M32.8 17 L36.5 22 L37.8 31.5 L34.5 34 L33 30 Z" fill="#d9b88e"/></g><path d="M28.8 34.5 L32.5 34.5 L32.3 40.2 L28.8 40.2 Z" fill="#444"/><g stroke="#b8303a" stroke-width="1.1"><line x1="15" y1="43" x2="28.5" y2="43"/><line x1="13.5" y1="45.4" x2="28.5" y2="45.4"/><line x1="12.5" y1="47.8" x2="28.5" y2="47.8"/></g><path d="M31.5 44 L34.5 43.5 L34 47 L31 47 Z" fill="#ddd"/><ellipse cx="27.6" cy="19.6" rx="2.7" ry="2" fill="#111"/><path d="M26 29.5 H33.3 V32.5 H26 Z" fill="#f4f4f4" stroke="#333" stroke-width=".35"/><path d="M28 29.5 V32.5 M30 29.5 V32.5 M31.8 29.5 V32.5" stroke="#666" stroke-width=".3"/><path d="M19.5 8.2 L35.2 6.6 L36.8 12.5 L43 16.2 L20.2 16.9 Z" fill="#5e6a58" stroke="#1e1e1e" stroke-width=".7" stroke-linejoin="round"/><path d="M21 11.5 L36 10.5" stroke="#4a5446" stroke-width=".5"/></svg>
<div class="a t" style="left:0px;top:72.6px;font-size:3.3px;color:#fff;line-height:1;font-weight:700;width:61.4px;text-align:center;">Doodle #7887</div>
<div class="a" style="left:18.3px;top:76.4px;width:2.4px;height:2.4px;background:#eee;border-radius:50%"></div>
<div class="a t" style="left:21.8px;top:76.36px;width:21px;overflow:hidden;font-size:2.03px;line-height:1;color:#bbb;font-weight:700;opacity:0.92">m Main Network Solana </div>
<div class="a" style="left:3px;top:81px;width:55px;height:14.5px;background:#232323;border-radius:2px"></div>
<div class="a" style="left:7.2px;top:83.3px;width:2.6px;height:2px;background:#ddd;border-radius:0.5px"></div>
<div class="a t" style="left:7px;top:86.54px;width:3px;overflow:hidden;font-size:2.32px;line-height:1;color:#fff;font-weight:700;opacity:1">lana</div>
<div class="a t" style="left:6px;top:89.53px;width:5px;overflow:hidden;font-size:2px;line-height:1;color:#888;font-weight:700;opacity:0.8">ss Copy</div>
<div class="a" style="left:22px;top:83.3px;width:2.6px;height:2px;background:#ddd;border-radius:0.5px"></div>
<div class="a t" style="left:21.8px;top:86.54px;width:3px;overflow:hidden;font-size:2.32px;line-height:1;color:#fff;font-weight:700;opacity:1">arke</div>
<div class="a t" style="left:20.8px;top:89.53px;width:5px;overflow:hidden;font-size:2px;line-height:1;color:#888;font-weight:700;opacity:0.8"> Swap S</div>
<div class="a" style="left:36.8px;top:83.3px;width:2.6px;height:2px;background:#ddd;border-radius:0.5px"></div>
<div class="a t" style="left:36.6px;top:86.54px;width:3px;overflow:hidden;font-size:2.32px;line-height:1;color:#fff;font-weight:700;opacity:1">e St</div>
<div class="a t" style="left:35.6px;top:89.53px;width:5px;overflow:hidden;font-size:2px;line-height:1;color:#888;font-weight:700;opacity:0.8"> Suppor</div>
<div class="a" style="left:51.6px;top:83.3px;width:2.6px;height:2px;background:#ddd;border-radius:0.5px"></div>
<div class="a t" style="left:51.4px;top:86.54px;width:3px;overflow:hidden;font-size:2.32px;line-height:1;color:#fff;font-weight:700;opacity:1">g Hi</div>
<div class="a t" style="left:50.4px;top:89.53px;width:5px;overflow:hidden;font-size:2px;line-height:1;color:#888;font-weight:700;opacity:0.8">isting </div>
<div class="a t" style="left:3.5px;top:98.93px;width:10px;overflow:hidden;font-size:2px;line-height:1;color:#aaa;font-weight:700;opacity:0.8">ain Network </div>
<div class="a t" style="left:22px;top:98.93px;width:8px;overflow:hidden;font-size:2px;line-height:1;color:#aaa;font-weight:700;opacity:0.8">a Wallet A</div>
<div class="a" style="left:3.5px;top:102px;width:4px;height:4px;background:#3a5ad8;border-radius:0.8px"></div>
<div class="a t" style="left:9px;top:102.66px;width:9px;overflow:hidden;font-size:2.03px;line-height:1;color:#ddd;font-weight:700;opacity:1">Copy Balan</div>
<div class="a" style="left:22px;top:102px;width:4px;height:4px;background:#e04a2a;border-radius:0.8px"></div>
<div class="a t" style="left:27.5px;top:102.66px;width:15px;overflow:hidden;font-size:2.03px;line-height:1;color:#ddd;font-weight:700;opacity:1">et Price Token S</div>
<div class="a" style="left:3.3px;top:109.4px;width:13.1px;height:4.6px;background:#1e1e1e;border-radius:2.3px;border:.45px solid #2e2e2e"></div>
<div class="a t" style="left:5.8px;top:110.36px;width:8.1px;overflow:hidden;font-size:2.03px;line-height:1;color:#ccc;font-weight:700;opacity:0.92">ap Send R</div>
<div class="a" style="left:18.7px;top:109.4px;width:15.4px;height:4.6px;background:#1e1e1e;border-radius:2.3px;border:.45px solid #2e2e2e"></div>
<div class="a t" style="left:21.2px;top:110.36px;width:10.4px;overflow:hidden;font-size:2.03px;line-height:1;color:#ccc;font-weight:700;opacity:0.92">take Earn He</div>
<div class="a" style="left:35.9px;top:109.4px;width:22.5px;height:4.6px;background:#1e1e1e;border-radius:2.3px;border:.45px solid #b8962e"></div>
<div class="a t" style="left:38.4px;top:110.36px;width:17.5px;overflow:hidden;font-size:2.03px;line-height:1;color:#ccc;font-weight:700;opacity:0.92">pport Total Avg His</div>
<div class="a" style="left:2.9px;top:117px;width:55.1px;height:60px;background:#202020;border-radius:2px"></div>
<div class="a" style="left:6.2px;top:120.4px;width:48.8px;height:6px;background:#1a1a1a;border-radius:3px;border:.45px solid #444"></div>
<div class="a t" style="left:9px;top:121.94px;width:38px;overflow:hidden;font-size:2.32px;line-height:1;color:#eee;font-weight:700;opacity:1">istory Offer Listing Details Activ</div>
<div class="a" style="left:5.6px;top:130.8px;width:3.6px;height:3.6px;background:#eee;border-radius:0.7px"></div>
<div class="a" style="left:6.3px;top:132px;width:2.2px;height:1.6px;background:#555;border-radius:0.2px"></div>
<div class="a t" style="left:11.5px;top:130.16px;width:4px;overflow:hidden;font-size:2.03px;line-height:1;color:#eee;font-weight:700;opacity:1">ing D</div>
<div class="a t" style="left:11.5px;top:132.53px;width:3px;overflow:hidden;font-size:2px;line-height:1;color:#d8ae35;font-weight:700;opacity:0.92"> Netw</div>
<div class="a t" style="left:16.5px;top:131.46px;width:7px;overflow:hidden;font-size:2.03px;line-height:1;color:#888;font-weight:700;opacity:0.8">allet Ad</div>
<div class="a" style="left:43.3px;top:130.5px;width:2.6px;height:2.6px;background:#ddd;border-radius:50%"></div>
<div class="a t" style="left:46.3px;top:130.44px;width:8.5px;overflow:hidden;font-size:2.32px;line-height:1;color:#fff;font-weight:700;opacity:1">y Balance</div>
<div class="a t" style="left:42px;top:133.23px;width:13px;overflow:hidden;font-size:2px;line-height:1;color:#888;font-weight:700;opacity:0.8">Price Token Swa</div>
<div class="a" style="left:6.1px;top:138.6px;width:48.9px;height:8.3px;background:#1a1a1a;border-radius:1.5px"></div>
<div class="a t" style="left:9.5px;top:139.93px;width:8px;overflow:hidden;font-size:2px;line-height:1;color:#888;font-weight:700;opacity:0.8">Send Recei</div>
<div class="a t" style="left:9px;top:142.56px;width:9px;overflow:hidden;font-size:2.03px;line-height:1;color:#ddd;font-weight:700;opacity:0.98">e Earn Hel</div>
<div class="a t" style="left:25px;top:139.93px;width:8px;overflow:hidden;font-size:2px;line-height:1;color:#888;font-weight:700;opacity:0.8">rt Total A</div>
<div class="a t" style="left:24.5px;top:142.56px;width:9px;overflow:hidden;font-size:2.03px;line-height:1;color:#d8ae35;font-weight:700;opacity:0.98">ory Offer </div>
<div class="a t" style="left:40.5px;top:139.93px;width:8px;overflow:hidden;font-size:2px;line-height:1;color:#888;font-weight:700;opacity:0.8"> Details A</div>
<div class="a t" style="left:40px;top:142.56px;width:9px;overflow:hidden;font-size:2.03px;line-height:1;color:#d8ae35;font-weight:700;opacity:0.98">twork Sola</div>
<div class="a" style="left:5.6px;top:151.8px;width:3.6px;height:3.6px;background:#eee;border-radius:0.7px"></div>
<div class="a" style="left:6.3px;top:153px;width:2.2px;height:1.6px;background:#555;border-radius:0.2px"></div>
<div class="a t" style="left:11.5px;top:151.16px;width:4px;overflow:hidden;font-size:2.03px;line-height:1;color:#eee;font-weight:700;opacity:1">et Ad</div>
<div class="a t" style="left:11.5px;top:153.53px;width:3px;overflow:hidden;font-size:2px;line-height:1;color:#d8ae35;font-weight:700;opacity:0.92">alanc</div>
<div class="a t" style="left:16.5px;top:152.46px;width:7px;overflow:hidden;font-size:2.03px;line-height:1;color:#888;font-weight:700;opacity:0.8">ce Token</div>
<div class="a" style="left:43.3px;top:151.5px;width:2.6px;height:2.6px;background:#ddd;border-radius:50%"></div>
<div class="a t" style="left:46.3px;top:151.44px;width:8.5px;overflow:hidden;font-size:2.32px;line-height:1;color:#fff;font-weight:700;opacity:1">d Receive</div>
<div class="a t" style="left:42px;top:154.23px;width:13px;overflow:hidden;font-size:2px;line-height:1;color:#888;font-weight:700;opacity:0.8">arn Help Suppor</div>
<div class="a" style="left:6.1px;top:159.6px;width:48.9px;height:8.3px;background:#1a1a1a;border-radius:1.5px"></div>
<div class="a t" style="left:9.5px;top:160.93px;width:8px;overflow:hidden;font-size:2px;line-height:1;color:#888;font-weight:700;opacity:0.8">Total Avg </div>
<div class="a t" style="left:9px;top:163.56px;width:9px;overflow:hidden;font-size:2.03px;line-height:1;color:#ddd;font-weight:700;opacity:0.98"> Offer Lis</div>
<div class="a t" style="left:25px;top:160.93px;width:8px;overflow:hidden;font-size:2px;line-height:1;color:#888;font-weight:700;opacity:0.8">hereum Mai</div>
<div class="a t" style="left:24.5px;top:163.56px;width:9px;overflow:hidden;font-size:2.03px;line-height:1;color:#d8ae35;font-weight:700;opacity:0.98">rk Solana </div>
<div class="a t" style="left:40.5px;top:160.93px;width:8px;overflow:hidden;font-size:2px;line-height:1;color:#888;font-weight:700;opacity:0.8">Address Co</div>
<div class="a t" style="left:40px;top:163.56px;width:9px;overflow:hidden;font-size:2.03px;line-height:1;color:#d8ae35;font-weight:700;opacity:0.98">nce Market</div>
<div class="a" style="left:5.6px;top:172.8px;width:3.6px;height:3.6px;background:#eee;border-radius:0.7px"></div>
<div class="a" style="left:6.3px;top:174px;width:2.2px;height:1.6px;background:#555;border-radius:0.2px"></div>
<div class="a t" style="left:11.5px;top:172.16px;width:4px;overflow:hidden;font-size:2.03px;line-height:1;color:#eee;font-weight:700;opacity:1">Token</div>
<div class="a t" style="left:11.5px;top:174.53px;width:3px;overflow:hidden;font-size:2px;line-height:1;color:#d8ae35;font-weight:700;opacity:0.92">eceiv</div>
<div class="a t" style="left:16.5px;top:173.46px;width:7px;overflow:hidden;font-size:2.03px;line-height:1;color:#888;font-weight:700;opacity:0.8"> Help Su</div>
<div class="a" style="left:43.3px;top:172.5px;width:2.6px;height:2.6px;background:#ddd;border-radius:50%"></div>
<div class="a t" style="left:46.3px;top:172.44px;width:8.5px;overflow:hidden;font-size:2.32px;line-height:1;color:#fff;font-weight:700;opacity:1">al Avg Hi</div>
<div class="a t" style="left:42px;top:175.23px;width:13px;overflow:hidden;font-size:2px;line-height:1;color:#888;font-weight:700;opacity:0.8">fer Listing Det</div>
<div class="a" style="left:6.1px;top:180.6px;width:48.9px;height:8.3px;background:#1a1a1a;border-radius:1.5px"></div>
<div class="a t" style="left:9.5px;top:181.93px;width:8px;overflow:hidden;font-size:2px;line-height:1;color:#888;font-weight:700;opacity:0.8">eum Main N</div>
<div class="a t" style="left:9px;top:184.56px;width:9px;overflow:hidden;font-size:2.03px;line-height:1;color:#ddd;font-weight:700;opacity:0.98">Solana Wal</div>
<div class="a t" style="left:25px;top:181.93px;width:8px;overflow:hidden;font-size:2px;line-height:1;color:#888;font-weight:700;opacity:0.8">ress Copy </div>
<div class="a t" style="left:24.5px;top:184.56px;width:9px;overflow:hidden;font-size:2.03px;line-height:1;color:#d8ae35;font-weight:700;opacity:0.98"> Market Pr</div>
<div class="a t" style="left:40.5px;top:181.93px;width:8px;overflow:hidden;font-size:2px;line-height:1;color:#888;font-weight:700;opacity:0.8">en Swap Se</div>
<div class="a t" style="left:40px;top:184.56px;width:9px;overflow:hidden;font-size:2.03px;line-height:1;color:#d8ae35;font-weight:700;opacity:0.98">ive Stake </div>
</div>
<div class="ph" style="left:1134.35px;top:638px;width:61.4px;height:117.5px;background:#181818">
<div class="a t" style="left:4.9px;top:1.9px;font-size:2.5px;color:#fff;line-height:1;font-weight:700">9:41</div>
<svg width="12" height="3" style="left:47.6px;top:1.6px" viewBox="0 0 12 3"><path d="M0.2 2.1 L3.2 0.3 L3.2 2.1 Z" fill="#fff"/><rect x="4.3" y="0.3" width="1.9" height="1.8" rx=".4" fill="#fff" opacity=".85"/><rect x="7.4" y="0.2" width="3.7" height="1.9" rx=".7" fill="#fff"/></svg>
<div class="a" style="left:5.1px;top:10.4px;width:4.4px;height:4.4px;background:#eee;border-radius:50%"></div>
<div class="a t" style="left:0px;top:11.2px;font-size:2.9px;color:#fff;line-height:1;font-weight:700;width:61.4px;text-align:center;">Make an Offer</div>
<div class="a" style="left:3.6px;top:19.5px;width:54.2px;height:7px;background:#232323;border-radius:1.6px"></div>
<div class="a" style="left:6.3px;top:21.8px;width:2.4px;height:2.4px;background:#ddd;border-radius:50%"></div>
<div class="a t" style="left:9.8px;top:21.76px;width:5px;overflow:hidden;font-size:2.03px;line-height:1;color:#aaa;font-weight:700;opacity:0.92">lp Sup</div>
<svg width="2" height="1.2" style="left:53.5px;top:22.5px" viewBox="0 0 2 1.2"><path d="M0 0L1 1L2 0" fill="none" stroke="#aaa" stroke-width=".35"/></svg>
<div class="a" style="left:3.6px;top:28.1px;width:54.2px;height:7px;background:#232323;border-radius:1.6px"></div>
<div class="a t" style="left:7px;top:30.56px;width:13px;overflow:hidden;font-size:2.03px;line-height:1;color:#888;font-weight:700;opacity:0.8">Avg History Of</div>
<div class="a t" style="left:32px;top:30.56px;width:22px;overflow:hidden;font-size:2.03px;line-height:1;color:#ccc;font-weight:700;opacity:0.92"> Listing Details Activi</div>
<div class="a t" style="left:8px;top:36.73px;width:45px;overflow:hidden;font-size:2px;line-height:1;color:#777;font-weight:700;opacity:0.69"> Main Network Solana Wallet Address Copy Balanc</div>
<div class="a" style="left:3.6px;top:41.4px;width:54.2px;height:7px;background:#232323;border-radius:1.6px"></div>
<div class="a t" style="left:7px;top:43.86px;width:7px;overflow:hidden;font-size:2.03px;line-height:1;color:#aaa;font-weight:700;opacity:0.92">ana Wall</div>
<svg width="2" height="1.2" style="left:53.5px;top:44.4px" viewBox="0 0 2 1.2"><path d="M0 0L1 1L2 0" fill="none" stroke="#aaa" stroke-width=".35"/></svg>
<div class="a" style="left:3.6px;top:50.3px;width:54.2px;height:6.8px;background:#232323;border-radius:1.6px"></div>
<div class="a t" style="left:7px;top:52.66px;width:24px;overflow:hidden;font-size:2.03px;line-height:1;color:#ccc;font-weight:700;opacity:0.92">s Copy Balance Market Pri</div>
<div class="a" style="left:52.5px;top:52.5px;width:2.2px;height:2px;background:none;border-radius:0.3px;border:.35px solid #aaa"></div>
<div class="a" style="left:3.6px;top:64px;width:54.2px;height:7.5px;background:#262626;border-radius:1.6px"></div>
<div class="a t" style="left:25px;top:66.54px;width:7px;overflow:hidden;font-size:2.32px;line-height:1;color:#ddd;font-weight:700;opacity:1">rket Pri</div>
<div class="a t" style="left:34px;top:66.16px;width:2px;overflow:hidden;font-size:2.03px;line-height:1;color:#ddd;font-weight:700;opacity:1">Swa</div>
<div class="a" style="left:0px;top:74.5px;width:61.4px;height:45px;background:#111"></div>
<div class="a" style="left:0.7px;top:76.9px;width:5px;height:5.7px;background:#7d6366;border-radius:0.6px"></div>
<div class="a" style="left:6.7px;top:76.9px;width:5px;height:5.7px;background:#7d6366;border-radius:0.6px"></div>
<div class="a" style="left:12.7px;top:76.9px;width:5px;height:5.7px;background:#7d6366;border-radius:0.6px"></div>
<div class="a" style="left:18.7px;top:76.9px;width:5px;height:5.7px;background:#7d6366;border-radius:0.6px"></div>
<div class="a" style="left:24.7px;top:76.9px;width:5px;height:5.7px;background:#7d6366;border-radius:0.6px"></div>
<div class="a" style="left:30.7px;top:76.9px;width:5px;height:5.7px;background:#7d6366;border-radius:0.6px"></div>
<div class="a" style="left:36.7px;top:76.9px;width:5px;height:5.7px;background:#7d6366;border-radius:0.6px"></div>
<div class="a" style="left:42.7px;top:76.9px;width:5px;height:5.7px;background:#7d6366;border-radius:0.6px"></div>
<div class="a" style="left:48.7px;top:76.9px;width:5px;height:5.7px;background:#7d6366;border-radius:0.6px"></div>
<div class="a" style="left:54.7px;top:76.9px;width:5px;height:5.7px;background:#7d6366;border-radius:0.6px"></div>
<div class="a" style="left:3.8px;top:84.4px;width:5px;height:6.3px;background:#7d6366;border-radius:0.6px"></div>
<div class="a" style="left:9.8px;top:84.4px;width:5px;height:6.3px;background:#7d6366;border-radius:0.6px"></div>
<div class="a" style="left:15.8px;top:84.4px;width:5px;height:6.3px;background:#7d6366;border-radius:0.6px"></div>
<div class="a" style="left:21.8px;top:84.4px;width:5px;height:6.3px;background:#7d6366;border-radius:0.6px"></div>
<div class="a" style="left:27.8px;top:84.4px;width:5px;height:6.3px;background:#7d6366;border-radius:0.6px"></div>
<div class="a" style="left:33.8px;top:84.4px;width:5px;height:6.3px;background:#7d6366;border-radius:0.6px"></div>
<div class="a" style="left:39.8px;top:84.4px;width:5px;height:6.3px;background:#7d6366;border-radius:0.6px"></div>
<div class="a" style="left:45.8px;top:84.4px;width:5px;height:6.3px;background:#7d6366;border-radius:0.6px"></div>
<div class="a" style="left:51.8px;top:84.4px;width:5px;height:6.3px;background:#7d6366;border-radius:0.6px"></div>
<div class="a" style="left:0.7px;top:92.8px;width:6.9px;height:5.9px;background:#484848;border-radius:0.6px"></div>
<div class="a" style="left:9.9px;top:92.8px;width:5px;height:5.9px;background:#7d6366;border-radius:0.6px"></div>
<div class="a" style="left:15.9px;top:92.8px;width:5px;height:5.9px;background:#7d6366;border-radius:0.6px"></div>
<div class="a" style="left:21.9px;top:92.8px;width:5px;height:5.9px;background:#7d6366;border-radius:0.6px"></div>
<div class="a" style="left:27.9px;top:92.8px;width:5px;height:5.9px;background:#7d6366;border-radius:0.6px"></div>
<div class="a" style="left:33.9px;top:92.8px;width:5px;height:5.9px;background:#7d6366;border-radius:0.6px"></div>
<div class="a" style="left:39.9px;top:92.8px;width:5px;height:5.9px;background:#7d6366;border-radius:0.6px"></div>
<div class="a" style="left:45.9px;top:92.8px;width:5px;height:5.9px;background:#7d6366;border-radius:0.6px"></div>
<div class="a" style="left:54px;top:92.8px;width:6.8px;height:5.9px;background:#484848;border-radius:0.6px"></div>
<div class="a" style="left:0.7px;top:101px;width:13.7px;height:5.8px;background:#4a4a4a;border-radius:0.6px"></div>
<div class="a" style="left:15.9px;top:101px;width:29.8px;height:5.8px;background:#7a7a7a;border-radius:0.6px"></div>
<div class="a" style="left:47px;top:101px;width:13.8px;height:5.8px;background:#4a4a4a;border-radius:0.6px"></div>
<div class="a" style="left:4.2px;top:109.4px;width:4px;height:4px;background:#ddd;border-radius:50%"></div>
<div class="a" style="left:56px;top:110px;width:1.4px;height:2.8px;background:#ddd;border-radius:0.7px"></div>
<div class="a" style="left:19.8px;top:116px;width:22.2px;height:0.8px;background:#ccc;border-radius:0.4px"></div>
</div>
<div class="a" style="left:258.2px;top:751px;width:5.6px;height:2.6px;background:#333;border-radius:0 0 50% 50%"></div>
<div class="a" style="left:53px;top:635px;width:490px;height:117px;background:#f8d54a;border-radius:24px;box-shadow:inset 0 0 0 .8px #f5cc35"></div>
<div class="a t" style="left:104.2px;top:674.19px;font-size:41px;color:#161616;line-height:1;font-weight:700;letter-spacing:1px;transform:scaleX(1.083);transform-origin:0 0">Organized Layers</div>
</body></html>
